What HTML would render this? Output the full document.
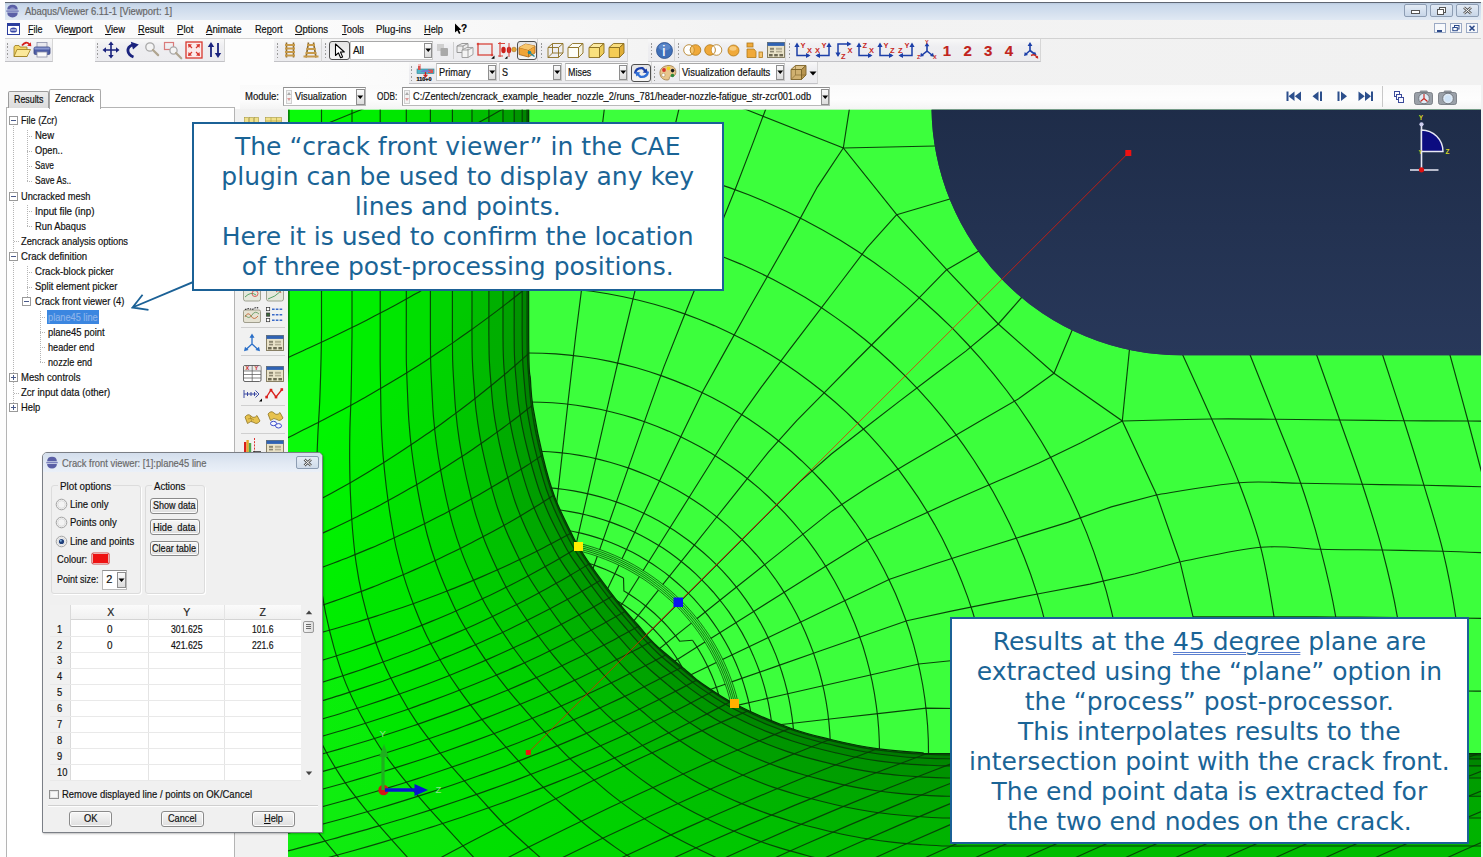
<!DOCTYPE html>
<html lang="en"><head><meta charset="utf-8"><title>Abaqus/Viewer 6.11-1 [Viewport: 1]</title>
<style>
html,body{margin:0;padding:0;background:#fff;}
body{width:1483px;height:857px;overflow:hidden;position:relative;font-family:"Liberation Sans",sans-serif;font-size:11px;color:#000;}
#root{position:absolute;left:0;top:0;width:1483px;height:857px;overflow:hidden;background:#fff;}
.t{position:absolute;white-space:nowrap;display:block;transform-origin:0 50%;-webkit-text-stroke:0.2px currentColor;}
.t u{text-decoration:underline;text-underline-offset:1px;}
.abs{position:absolute;}
svg{position:absolute;overflow:visible;}
.callout{position:absolute;background:#fff;border:2px solid #1b6196;box-sizing:border-box;font-family:"DejaVu Sans","Liberation Sans",sans-serif;font-size:25px;line-height:30px;color:#1a6496;text-align:center;white-space:nowrap;}
.callout div{position:absolute;left:0;right:0;height:30px;}

</style></head>
<body>
<div id="root">
<!-- window frame -->
<div class="abs" style="left:0px;top:2px;width:1483px;height:855px;background:linear-gradient(90deg,#fdfdfd 0,#fdfdfd 300px,#f2f2f2 720px,#f1f1f1 100%);"></div>
<div class="abs" style="left:5px;top:2px;width:1476px;height:18px;background:linear-gradient(#b9c9de 0,#c9d8ea 2px,#d3dfee 9px,#e2eaf4 18px);border-top:1px solid #5f6672;box-sizing:border-box;"></div>
<svg style="left:5.5px;top:3.5px" width="13" height="14" viewBox="0 0 13 14"><path d="M1.2 5.6 Q1.5 0.8 6.5 0.8 Q11.5 0.8 11.8 5.6 Z" fill="#5a5fa6"/><path d="M1.2 8.6 Q1.5 13.4 6.5 13.4 Q11.5 13.4 11.8 8.6 Z" fill="#5a5fa6"/><rect x="0.3" y="6.3" width="12.4" height="1.6" fill="#7c82bd"/><path d="M3.5 4.8 Q6.5 2.2 9.5 4.8 Z" fill="#9aa0d0"/></svg>
<span class="t" style="left:25.0px;top:3.5px;height:15px;line-height:15px;font-size:11px;color:#666;transform:scaleX(0.8586);">Abaqus/Viewer 6.11-1 [Viewport: 1]</span>
<div class="abs" style="left:1404px;top:4px;width:23px;height:13px;border:1px solid #8d9db3;border-radius:2px;box-sizing:border-box;background:linear-gradient(#e3ebf5,#c8d6e8);"></div><svg style="left:1404px;top:4px" width="23" height="13"><rect x="7.5" y="6.5" width="8" height="3" fill="#fff" stroke="#555" stroke-width="1"/></svg>
<div class="abs" style="left:1430px;top:4px;width:23px;height:13px;border:1px solid #8d9db3;border-radius:2px;box-sizing:border-box;background:linear-gradient(#e3ebf5,#c8d6e8);"></div><svg style="left:1430px;top:4px" width="23" height="13"><rect x="9.5" y="3.5" width="6" height="5" fill="#fff" stroke="#555"/><rect x="7.5" y="5.5" width="6" height="5" fill="#fff" stroke="#555"/></svg>
<div class="abs" style="left:1456px;top:4px;width:23px;height:13px;border:1px solid #8d9db3;border-radius:2px;box-sizing:border-box;background:linear-gradient(#e3ebf5,#c8d6e8);"></div><svg style="left:1456px;top:4px" width="23" height="13"><path d="M8 3.5 L15 9.5 M15 3.5 L8 9.5" stroke="#555" stroke-width="2.6"/><path d="M8 3.5 L15 9.5 M15 3.5 L8 9.5" stroke="#fff" stroke-width="1"/></svg>
<div class="abs" style="left:5px;top:20px;width:1476px;height:18px;background:linear-gradient(90deg,#fbfbfb 0,#fbfbfb 300px,#f3f3f3 720px,#f2f2f2 100%);"></div>
<svg style="left:7px;top:23px" width="13" height="12" viewBox="0 0 13 12"><rect x="0.5" y="0.5" width="12" height="11" fill="#fff" stroke="#2c3e9e"/><rect x="0.5" y="0.5" width="12" height="2.5" fill="#2c3e9e"/><ellipse cx="6.5" cy="7" rx="3.6" ry="2.6" fill="#3a49a8"/><rect x="3.5" y="6.5" width="6" height="1" fill="#fff"/></svg>
<span class="t" style="left:28.0px;top:22.0px;height:15px;line-height:15px;font-size:11px;color:#111;transform:scaleX(0.8181);"><u>F</u>ile</span>
<span class="t" style="left:55.0px;top:22.0px;height:15px;line-height:15px;font-size:11px;color:#111;transform:scaleX(0.8803);">Vie<u>w</u>port</span>
<span class="t" style="left:105.0px;top:22.0px;height:15px;line-height:15px;font-size:11px;color:#111;transform:scaleX(0.8459);"><u>V</u>iew</span>
<span class="t" style="left:138.0px;top:22.0px;height:15px;line-height:15px;font-size:11px;color:#111;transform:scaleX(0.8339);"><u>R</u>esult</span>
<span class="t" style="left:176.5px;top:22.0px;height:15px;line-height:15px;font-size:11px;color:#111;transform:scaleX(0.8705);"><u>P</u>lot</span>
<span class="t" style="left:206.0px;top:22.0px;height:15px;line-height:15px;font-size:11px;color:#111;transform:scaleX(0.8798);"><u>A</u>nimate</span>
<span class="t" style="left:254.5px;top:22.0px;height:15px;line-height:15px;font-size:11px;color:#111;transform:scaleX(0.8330);">Re<u>p</u>ort</span>
<span class="t" style="left:295.0px;top:22.0px;height:15px;line-height:15px;font-size:11px;color:#111;transform:scaleX(0.8705);"><u>O</u>ptions</span>
<span class="t" style="left:342.0px;top:22.0px;height:15px;line-height:15px;font-size:11px;color:#111;transform:scaleX(0.8568);"><u>T</u>ools</span>
<span class="t" style="left:376.0px;top:22.0px;height:15px;line-height:15px;font-size:11px;color:#111;transform:scaleX(0.8807);">Plug-ins</span>
<span class="t" style="left:424.0px;top:22.0px;height:15px;line-height:15px;font-size:11px;color:#111;transform:scaleX(0.8399);"><u>H</u>elp</span>
<svg style="left:454px;top:23px" width="14" height="13" viewBox="0 0 14 13"><path d="M1 0.5 L1 9.5 L3.3 7.5 L5 11 L6.5 10.3 L4.9 7 L7.6 7 Z" fill="#000"/></svg>
<span class="t" style="left:461.0px;top:22.0px;height:14px;line-height:14px;font-size:10px;color:#000;font-weight:bold;">?</span>
<div class="abs" style="left:1434px;top:23px;width:12px;height:10px;border:1px solid #9aa9c4;box-sizing:border-box;background:#f7f9fc;"></div><div class="abs" style="left:1437px;top:30px;width:5px;height:1.5px;background:#2c4a8a;"></div>
<div class="abs" style="left:1450px;top:23px;width:12px;height:10px;border:1px solid #9aa9c4;box-sizing:border-box;background:#f7f9fc;"></div><svg style="left:1450px;top:23px" width="12" height="10"><rect x="4.5" y="2.5" width="4.5" height="3.5" fill="none" stroke="#2c4a8a"/><rect x="2.8" y="4.5" width="4.5" height="3.2" fill="#f7f9fc" stroke="#2c4a8a"/></svg>
<div class="abs" style="left:1466px;top:23px;width:12px;height:10px;border:1px solid #9aa9c4;box-sizing:border-box;background:#f7f9fc;"></div><svg style="left:1466px;top:23px" width="12" height="10"><path d="M3.5 2.8 L8.5 7.6 M8.5 2.8 L3.5 7.6" stroke="#2c4a8a" stroke-width="1.5"/></svg>
<div class="abs" style="left:5px;top:38px;width:1476px;height:1px;background:#d2d2d2;"></div>
<div class="abs" style="left:5px;top:39px;width:48px;height:22.5px;background:linear-gradient(#f8f8f8,#eeeef1 35%,#ececef);border-right:1px solid #d6d6d6;border-bottom:1.5px solid #c2c2c6;box-sizing:border-box;"></div>
<div class="abs" style="left:95px;top:39px;width:130px;height:22.5px;background:linear-gradient(#f8f8f8,#eeeef1 35%,#ececef);border-right:1px solid #d6d6d6;border-bottom:1.5px solid #c2c2c6;box-sizing:border-box;"></div>
<div class="abs" style="left:274px;top:39px;width:47.5px;height:22.5px;background:linear-gradient(#f8f8f8,#eeeef1 35%,#ececef);border-right:1px solid #d6d6d6;border-bottom:1.5px solid #c2c2c6;box-sizing:border-box;"></div>
<div class="abs" style="left:321.5px;top:39px;width:216.5px;height:22.5px;background:linear-gradient(#f8f8f8,#eeeef1 35%,#ececef);border-right:1px solid #d6d6d6;border-bottom:1.5px solid #c2c2c6;box-sizing:border-box;"></div>
<div class="abs" style="left:538px;top:39px;width:89.5px;height:22.5px;background:linear-gradient(#f8f8f8,#eeeef1 35%,#ececef);border-right:1px solid #d6d6d6;border-bottom:1.5px solid #c2c2c6;box-sizing:border-box;"></div>
<div class="abs" style="left:648px;top:39px;width:27px;height:22.5px;background:linear-gradient(#f8f8f8,#eeeef1 35%,#ececef);border-right:1px solid #d6d6d6;border-bottom:1.5px solid #c2c2c6;box-sizing:border-box;"></div>
<div class="abs" style="left:675px;top:39px;width:111px;height:22.5px;background:linear-gradient(#f8f8f8,#eeeef1 35%,#ececef);border-right:1px solid #d6d6d6;border-bottom:1.5px solid #c2c2c6;box-sizing:border-box;"></div>
<div class="abs" style="left:786px;top:39px;width:255px;height:22.5px;background:linear-gradient(#f8f8f8,#eeeef1 35%,#ececef);border-right:1px solid #d6d6d6;border-bottom:1.5px solid #c2c2c6;box-sizing:border-box;"></div>
<div class="abs" style="left:7px;top:43.0px;width:1px;height:1.5px;background:#9a9a9a;"></div><div class="abs" style="left:7px;top:46.4px;width:1px;height:1.5px;background:#9a9a9a;"></div><div class="abs" style="left:7px;top:49.8px;width:1px;height:1.5px;background:#9a9a9a;"></div><div class="abs" style="left:7px;top:53.2px;width:1px;height:1.5px;background:#9a9a9a;"></div><div class="abs" style="left:7px;top:56.6px;width:1px;height:1.5px;background:#9a9a9a;"></div>
<div class="abs" style="left:97px;top:43.0px;width:1px;height:1.5px;background:#9a9a9a;"></div><div class="abs" style="left:97px;top:46.4px;width:1px;height:1.5px;background:#9a9a9a;"></div><div class="abs" style="left:97px;top:49.8px;width:1px;height:1.5px;background:#9a9a9a;"></div><div class="abs" style="left:97px;top:53.2px;width:1px;height:1.5px;background:#9a9a9a;"></div><div class="abs" style="left:97px;top:56.6px;width:1px;height:1.5px;background:#9a9a9a;"></div>
<div class="abs" style="left:276.5px;top:43.0px;width:1px;height:1.5px;background:#9a9a9a;"></div><div class="abs" style="left:276.5px;top:46.4px;width:1px;height:1.5px;background:#9a9a9a;"></div><div class="abs" style="left:276.5px;top:49.8px;width:1px;height:1.5px;background:#9a9a9a;"></div><div class="abs" style="left:276.5px;top:53.2px;width:1px;height:1.5px;background:#9a9a9a;"></div><div class="abs" style="left:276.5px;top:56.6px;width:1px;height:1.5px;background:#9a9a9a;"></div>
<div class="abs" style="left:325px;top:43.0px;width:1px;height:1.5px;background:#9a9a9a;"></div><div class="abs" style="left:325px;top:46.4px;width:1px;height:1.5px;background:#9a9a9a;"></div><div class="abs" style="left:325px;top:49.8px;width:1px;height:1.5px;background:#9a9a9a;"></div><div class="abs" style="left:325px;top:53.2px;width:1px;height:1.5px;background:#9a9a9a;"></div><div class="abs" style="left:325px;top:56.6px;width:1px;height:1.5px;background:#9a9a9a;"></div>
<div class="abs" style="left:540.5px;top:43.0px;width:1px;height:1.5px;background:#9a9a9a;"></div><div class="abs" style="left:540.5px;top:46.4px;width:1px;height:1.5px;background:#9a9a9a;"></div><div class="abs" style="left:540.5px;top:49.8px;width:1px;height:1.5px;background:#9a9a9a;"></div><div class="abs" style="left:540.5px;top:53.2px;width:1px;height:1.5px;background:#9a9a9a;"></div><div class="abs" style="left:540.5px;top:56.6px;width:1px;height:1.5px;background:#9a9a9a;"></div>
<div class="abs" style="left:651px;top:43.0px;width:1px;height:1.5px;background:#9a9a9a;"></div><div class="abs" style="left:651px;top:46.4px;width:1px;height:1.5px;background:#9a9a9a;"></div><div class="abs" style="left:651px;top:49.8px;width:1px;height:1.5px;background:#9a9a9a;"></div><div class="abs" style="left:651px;top:53.2px;width:1px;height:1.5px;background:#9a9a9a;"></div><div class="abs" style="left:651px;top:56.6px;width:1px;height:1.5px;background:#9a9a9a;"></div>
<div class="abs" style="left:678px;top:43.0px;width:1px;height:1.5px;background:#9a9a9a;"></div><div class="abs" style="left:678px;top:46.4px;width:1px;height:1.5px;background:#9a9a9a;"></div><div class="abs" style="left:678px;top:49.8px;width:1px;height:1.5px;background:#9a9a9a;"></div><div class="abs" style="left:678px;top:53.2px;width:1px;height:1.5px;background:#9a9a9a;"></div><div class="abs" style="left:678px;top:56.6px;width:1px;height:1.5px;background:#9a9a9a;"></div>
<div class="abs" style="left:789px;top:43.0px;width:1px;height:1.5px;background:#9a9a9a;"></div><div class="abs" style="left:789px;top:46.4px;width:1px;height:1.5px;background:#9a9a9a;"></div><div class="abs" style="left:789px;top:49.8px;width:1px;height:1.5px;background:#9a9a9a;"></div><div class="abs" style="left:789px;top:53.2px;width:1px;height:1.5px;background:#9a9a9a;"></div><div class="abs" style="left:789px;top:56.6px;width:1px;height:1.5px;background:#9a9a9a;"></div>
<div class="abs" style="left:409px;top:62px;width:243px;height:22px;background:linear-gradient(#f8f8f8,#eeeef1 35%,#ececef);border-right:1px solid #d6d6d6;border-bottom:1.5px solid #c2c2c6;box-sizing:border-box;"></div>
<div class="abs" style="left:652px;top:62px;width:166px;height:22px;background:linear-gradient(#f8f8f8,#eeeef1 35%,#ececef);border-right:1px solid #d6d6d6;border-bottom:1.5px solid #c2c2c6;box-sizing:border-box;"></div>
<div class="abs" style="left:411px;top:66.0px;width:1px;height:1.5px;background:#9a9a9a;"></div><div class="abs" style="left:411px;top:69.4px;width:1px;height:1.5px;background:#9a9a9a;"></div><div class="abs" style="left:411px;top:72.8px;width:1px;height:1.5px;background:#9a9a9a;"></div><div class="abs" style="left:411px;top:76.2px;width:1px;height:1.5px;background:#9a9a9a;"></div><div class="abs" style="left:411px;top:79.6px;width:1px;height:1.5px;background:#9a9a9a;"></div>
<div class="abs" style="left:654px;top:66.0px;width:1px;height:1.5px;background:#9a9a9a;"></div><div class="abs" style="left:654px;top:69.4px;width:1px;height:1.5px;background:#9a9a9a;"></div><div class="abs" style="left:654px;top:72.8px;width:1px;height:1.5px;background:#9a9a9a;"></div><div class="abs" style="left:654px;top:76.2px;width:1px;height:1.5px;background:#9a9a9a;"></div><div class="abs" style="left:654px;top:79.6px;width:1px;height:1.5px;background:#9a9a9a;"></div>
<svg style="left:13px;top:41px" width="19" height="17" viewBox="0 0 19 17"><path d="M1 6 L1 15.5 L14 15.5 L14 6 L7 6 L6 4.5 L2 4.5 Z" fill="#f3d66b" stroke="#9a7b1c" stroke-width="0.8"/><path d="M1 15.5 L4 8.5 L17.5 8.5 L14 15.5 Z" fill="#fbe89a" stroke="#9a7b1c" stroke-width="0.8"/><path d="M9 4.5 Q13 -0.5 16.5 3.5" fill="none" stroke="#d6201c" stroke-width="1.8"/><path d="M14.2 4.8 L18.3 5.2 L17.8 1.2 Z" fill="#d6201c"/></svg>
<svg style="left:33px;top:41px" width="18" height="17" viewBox="0 0 18 17"><rect x="4" y="1.5" width="10" height="5" fill="#e8e8ee" stroke="#8c90a8" stroke-width="0.8"/><rect x="1" y="6" width="16" height="7.5" rx="1.5" fill="#4d5da6" stroke="#39457f" stroke-width="0.8"/><rect x="1.5" y="6.5" width="15" height="2" fill="#8a97cf"/><rect x="4" y="11" width="10" height="5" fill="#fafafa" stroke="#8c90a8" stroke-width="0.8"/></svg>
<svg style="left:102px;top:41px" width="18" height="18" viewBox="0 0 18 18"><path d="M9 2 L9 16 M2 9 L16 9" stroke="#1a237e" stroke-width="1.6"/><path d="M9 0.5 L6.3 4 L11.7 4 Z M9 17.5 L6.3 14 L11.7 14 Z M0.5 9 L4 6.3 L4 11.7 Z M17.5 9 L14 6.3 L14 11.7 Z" fill="#1a237e"/></svg>
<svg style="left:124px;top:41px" width="16" height="18" viewBox="0 0 16 18"><path d="M9.5 16 C2.5 13.5 2 6.5 8.5 3.8" fill="none" stroke="#1a237e" stroke-width="2.8"/><path d="M6.8 0.8 L14.8 3.6 L9 8.6 Z" fill="#1a237e"/></svg>
<svg style="left:144px;top:41px" width="17" height="18" viewBox="0 0 17 18"><circle cx="6" cy="6" r="4.2" fill="#f4f4f4" stroke="#a9a9a9" stroke-width="1.3"/><path d="M8.94 8.94 L14.14 14.14" stroke="#b0a590" stroke-width="2.2" stroke-linecap="round"/></svg>
<svg style="left:163px;top:41px" width="19" height="18" viewBox="0 0 19 18"><rect x="1.5" y="1.5" width="9" height="7" fill="none" stroke="#d97b7b" stroke-width="1.2"/><circle cx="10.5" cy="9.5" r="3.6" fill="#f4f4f4" stroke="#a9a9a9" stroke-width="1.3"/><path d="M13.02 12.02 L18.22 17.22" stroke="#b0a590" stroke-width="2.2" stroke-linecap="round"/></svg>
<svg style="left:185px;top:41px" width="18" height="18" viewBox="0 0 18 18"><rect x="1" y="1" width="16" height="16" fill="#fbeaea" stroke="#d8382f" stroke-width="1.3"/><path d="M3 3 L7 3.6 L3.6 7 Z M15 3 L11 3.6 L14.4 7 Z M3 15 L7 14.4 L3.6 11 Z M15 15 L11 14.4 L14.4 11 Z" fill="#d8382f"/><path d="M4 4 L7 7 M14 4 L11 7 M4 14 L7 11 M14 14 L11 11" stroke="#d8382f" stroke-width="1.2"/></svg>
<svg style="left:207px;top:41px" width="15" height="18" viewBox="0 0 15 18"><path d="M4 16 L4 4 M11 2 L11 14" stroke="#1a237e" stroke-width="1.8"/><path d="M4 1 L0.8 6 L7.2 6 Z M11 17 L7.8 12 L14.2 12 Z" fill="#1a237e"/></svg>
<svg style="left:284px;top:42px" width="12" height="16" viewBox="0 0 12 16"><path d="M2.5 0.5 L2.5 15.5 M9.5 0.5 L9.5 15.5" stroke="#8b6a2f" stroke-width="1.6"/><path d="M1 3 L11 3 M1 6.5 L11 6.5 M1 10 L11 10 M1 13.5 L11 13.5" stroke="#c79a4a" stroke-width="1.8"/></svg>
<svg style="left:303px;top:42px" width="16" height="16" viewBox="0 0 16 16"><path d="M5.5 0.5 L3 15.5 M10.5 0.5 L13 15.5" stroke="#8b6a2f" stroke-width="1.6"/><path d="M4 3 L12 3 M3.4 7 L12.6 7 M2.5 11 L13.5 11 M0.5 14.5 L15.5 14.5" stroke="#c79a4a" stroke-width="1.8"/></svg>
<div class="abs" style="left:329px;top:41px;width:21px;height:18.5px;border:1.4px solid #4f4f4f;border-radius:3px;box-sizing:border-box;background:linear-gradient(#e4e4e4,#f6f6f6);"></div>
<svg style="left:334px;top:43px" width="12" height="16" viewBox="0 0 12 16"><path d="M1.5 1 L1.5 12.5 L4.4 9.8 L6.6 14.8 L8.6 13.9 L6.5 9 L10.3 9 Z" fill="#fff" stroke="#000" stroke-width="1.1" stroke-linejoin="round"/></svg>
<div class="abs" style="left:350px;top:41px;width:83px;height:18.5px;background:#fff;border:1px solid #c9c9c9;border-top-color:#a8a8a8;box-sizing:border-box;"></div><div class="abs" style="left:423.5px;top:42.5px;width:8.5px;height:15.5px;background:linear-gradient(#fafafa,#dcdcdc);border:1px solid #8e8e8e;box-sizing:border-box;"></div><svg style="left:423.5px;top:48.25px" width="8.5" height="5"><path d="M1.3 0.5 L7.2 0.5 L4.25 4 Z" fill="#000"/></svg><span class="t" style="left:353.0px;top:43.0px;height:15px;line-height:15px;font-size:11px;color:#111;transform:scaleX(0.8998);">All</span>
<svg style="left:436px;top:43px" width="13" height="14" viewBox="0 0 13 14"><rect x="1" y="1" width="7" height="7" fill="#cfcfcf"/><rect x="4.5" y="5" width="7.5" height="8" rx="1" fill="#a9a9a9"/></svg>
<div class="abs" style="left:452.5px;top:42px;width:1px;height:17px;background:#cfcfcf;"></div>
<svg style="left:456px;top:42px" width="18" height="17" viewBox="0 0 18 17"><path d="M1 4 L6 1.5 L12 1.5 L12 8 L7 10.5 L1 10.5 Z M1 4 L7 4 L12 1.5 M7 4 L7 10.5" fill="#ededed" stroke="#8f8f8f" stroke-width="0.9"/><path d="M6 8 L11 5.5 L17 5.5 L17 12.5 L12 15.5 L6 15.5 Z M6 8 L12 8 L17 5.5 M12 8 L12 15.5" fill="#f4f4f4" stroke="#9a9a9a" stroke-width="0.9"/></svg>
<svg style="left:476px;top:41px" width="19" height="18" viewBox="0 0 19 18"><rect x="2" y="3" width="14" height="11" fill="none" stroke="#d8453d" stroke-width="1.3"/><circle cx="2" cy="3" r="1.3" fill="#d8453d"/><circle cx="16" cy="14" r="1.3" fill="#d8453d"/><path d="M18.5 14.5 L18.5 17.8 L15.2 17.8 Z" fill="#000"/></svg>
<svg style="left:497px;top:41px" width="20" height="18" viewBox="0 0 20 18"><path d="M1 2.5 L8 2.5 M3 1 L3 16 M1 15 L6 15" stroke="#d8453d" stroke-width="1.2" fill="none"/><ellipse cx="6.5" cy="9" rx="2.2" ry="3.2" fill="#cc1f1a"/><ellipse cx="12" cy="9" rx="2.2" ry="3.2" fill="#cc1f1a"/><path d="M12 2 L12 16" stroke="#d8453d" stroke-width="1"/><circle cx="17" cy="8.5" r="2.3" fill="#e2a53a" stroke="#a8741b" stroke-width="0.6"/><path d="M10.5 15 L10.5 17.8 L7.7 17.8 Z" fill="#000"/></svg>
<div class="abs" style="left:516.5px;top:40.5px;width:20.5px;height:19.0px;border:1.4px solid #4f4f4f;border-radius:3px;box-sizing:border-box;background:linear-gradient(#e4e4e4,#f6f6f6);"></div>
<svg style="left:518px;top:43px" width="18" height="15" viewBox="0 0 18 15"><path d="M1 4.5 L7.5 1 L17 3 L17 10 L10.5 14 L1 11.5 Z" fill="#f0a437" stroke="#a8661a" stroke-width="0.8"/><path d="M1 4.5 L10.5 7 L17 3 M10.5 7 L10.5 14" fill="none" stroke="#a8661a" stroke-width="0.8"/><path d="M1 4.5 L7.5 1 L17 3 L10.5 7 Z" fill="#f8c66d"/><circle cx="11.5" cy="9.5" r="1.8" fill="#1f8a9a"/><path d="M12.5 10.5 L16.5 13.5" stroke="#1f8a9a" stroke-width="1.3"/></svg>
<svg style="left:546.5px;top:41.5px" width="17" height="17" viewBox="0 0 17 17"><path d="M1 5.5 L5.5 1.5 L16 1.5 L16 11 L11.5 15.5 L1 15.5 Z M1 5.5 L11.5 5.5 L16 1.5 M11.5 5.5 L11.5 15.5 M5.5 1.5 L5.5 11 L1 15.5 M5.5 11 L16 11" fill="none" stroke="#8a6d1f" stroke-width="0.9"/></svg>
<svg style="left:567px;top:41.5px" width="17" height="17" viewBox="0 0 17 17"><path d="M1 5.5 L5.5 1.5 L16 1.5 L11.5 5.5 Z" fill="#fbfbf3" stroke="#8a6d1f" stroke-width="0.9"/><path d="M1 5.5 L11.5 5.5 L11.5 15.5 L1 15.5 Z" fill="#fdfdf8" stroke="#8a6d1f" stroke-width="0.9"/><path d="M11.5 5.5 L16 1.5 L16 11 L11.5 15.5 Z" fill="#f3f1e2" stroke="#8a6d1f" stroke-width="0.9"/></svg>
<svg style="left:587.5px;top:41.5px" width="17" height="17" viewBox="0 0 17 17"><path d="M1 5.5 L5.5 1.5 L16 1.5 L11.5 5.5 Z" fill="#fbe9a0" stroke="#8a6d1f" stroke-width="0.9"/><path d="M1 5.5 L11.5 5.5 L11.5 15.5 L1 15.5 Z" fill="#f9e07d" stroke="#8a6d1f" stroke-width="0.9"/><path d="M11.5 5.5 L16 1.5 L16 11 L11.5 15.5 Z" fill="#eccb5a" stroke="#8a6d1f" stroke-width="0.9"/></svg>
<svg style="left:607.5px;top:41.5px" width="17" height="17" viewBox="0 0 17 17"><path d="M1 5.5 L5.5 1.5 L16 1.5 L11.5 5.5 Z" fill="#f8dc7c" stroke="#8a6d1f" stroke-width="0.9"/><path d="M1 5.5 L11.5 5.5 L11.5 15.5 L1 15.5 Z" fill="#f4cc55" stroke="#8a6d1f" stroke-width="0.9"/><path d="M11.5 5.5 L16 1.5 L16 11 L11.5 15.5 Z" fill="#e0ad35" stroke="#8a6d1f" stroke-width="0.9"/></svg>
<svg style="left:656px;top:41.5px" width="17" height="17" viewBox="0 0 17 17"><circle cx="8.5" cy="8.5" r="8" fill="#3f6fb8" stroke="#2b4f8d" stroke-width="0.8"/><ellipse cx="8.5" cy="5" rx="6" ry="3.5" fill="#6f97d3" opacity="0.6"/></svg>
<span class="t" style="left:662.2px;top:41.5px;height:18px;line-height:18px;font-size:14px;color:#fff;font-family:"Liberation Serif",serif;font-style:italic;font-weight:bold;">i</span>
<svg style="left:683px;top:43px" width="19" height="14" viewBox="0 0 19 14"><circle cx="6" cy="7" r="5.3" fill="#fff" stroke="#b07818" stroke-width="0.8"/><circle cx="12.5" cy="7" r="5.3" fill="#f0a93a" stroke="#b07818" stroke-width="0.8"/><path d="M9.25 2.8 A5.3 5.3 0 0 1 9.25 11.2 A5.3 5.3 0 0 1 9.25 2.8 Z" fill="#f6c56f" stroke="#b07818" stroke-width="0.6"/></svg>
<svg style="left:704px;top:43px" width="19" height="14" viewBox="0 0 19 14"><circle cx="12.5" cy="7" r="5.3" fill="#fff" stroke="#b07818" stroke-width="0.8"/><circle cx="6" cy="7" r="5.3" fill="#f0a93a" stroke="#b07818" stroke-width="0.8"/><path d="M9.25 2.8 A5.3 5.3 0 0 1 9.25 11.2 A5.3 5.3 0 0 1 9.25 2.8 Z" fill="#fff" stroke="#b07818" stroke-width="0.6"/></svg>
<svg style="left:727px;top:44px" width="13" height="13" viewBox="0 0 13 13"><circle cx="6.5" cy="6.5" r="5.5" fill="#f0a93a" stroke="#b07818" stroke-width="0.8"/><ellipse cx="6" cy="4.5" rx="3.5" ry="2.2" fill="#f9d38e" opacity="0.8"/></svg>
<svg style="left:745.5px;top:41.5px" width="18" height="17" viewBox="0 0 18 17"><rect x="1" y="1" width="6" height="4" fill="#f0a93a" stroke="#b07818" stroke-width="0.8"/><path d="M1 7 L8 7 L10 9.5 L10 15.5 L1 15.5 Z" fill="#f0a93a" stroke="#b07818" stroke-width="0.8"/><rect x="13" y="10" width="3.5" height="5.5" fill="#f6c56f" stroke="#b07818" stroke-width="0.8"/></svg>
<svg style="left:766.5px;top:42px" width="18" height="16" viewBox="0 0 18 16"><rect x="0.5" y="0.5" width="17" height="15" fill="#e9e2c8" stroke="#7c7458" stroke-width="0.9"/><rect x="0.5" y="0.5" width="17" height="3.4" fill="#2f62b3"/><rect x="3" y="5.8" width="4" height="2" fill="#8a8570"/><rect x="9" y="5.8" width="6" height="2" fill="#b5ae94"/><rect x="3" y="8.8" width="4" height="1.6" fill="#8a8570"/><rect x="9" y="8.8" width="6" height="1.6" fill="#b5ae94"/><rect x="2" y="12" width="3.6" height="2.4" fill="#6f6a55"/><rect x="7.2" y="12" width="3.6" height="2.4" fill="#6f6a55"/><rect x="12.4" y="12" width="3.6" height="2.4" fill="#6f6a55"/></svg>
<svg style="left:793.5px;top:41px" width="19" height="18" viewBox="0 0 19 18"><path d="M3 3 L3 14.5 L15 14.5" fill="none" stroke="#1c3fa8" stroke-width="1.5"/><path d="M3 1.5 L0.3999999999999999 6 L5.6 6 Z" fill="#1c3fa8"/><path d="M16.5 14.5 L12 11.9 L12 17.1 Z" fill="#1c3fa8"/><text x="6.5" y="7" font-family="Liberation Sans,sans-serif" font-weight="bold" font-size="7.5" fill="#c7271f">Y</text><text x="13" y="12" font-family="Liberation Sans,sans-serif" font-weight="bold" font-size="7.5" fill="#c7271f">X</text></svg>
<svg style="left:814px;top:41px" width="19" height="18" viewBox="0 0 19 18"><path d="M3 14.5 L15 14.5 L15 3" fill="none" stroke="#1c3fa8" stroke-width="1.5"/><path d="M15 1.5 L12.4 6 L17.6 6 Z" fill="#1c3fa8"/><path d="M1.5 14.5 L6 11.9 L6 17.1 Z" fill="#1c3fa8"/><text x="7.5" y="7" font-family="Liberation Sans,sans-serif" font-weight="bold" font-size="7.5" fill="#c7271f">Y</text><text x="1" y="12" font-family="Liberation Sans,sans-serif" font-weight="bold" font-size="7.5" fill="#c7271f">X</text></svg>
<svg style="left:835px;top:41px" width="19" height="18" viewBox="0 0 19 18"><path d="M3 14.5 L3 3 L15 3" fill="none" stroke="#1c3fa8" stroke-width="1.5"/><path d="M16.5 3 L12 0.3999999999999999 L12 5.6 Z" fill="#1c3fa8"/><path d="M3 16.0 L0.3999999999999999 11.5 L5.6 11.5 Z" fill="#1c3fa8"/><text x="12.5" y="11.5" font-family="Liberation Sans,sans-serif" font-weight="bold" font-size="7.5" fill="#c7271f">X</text><text x="6" y="18" font-family="Liberation Sans,sans-serif" font-weight="bold" font-size="7.5" fill="#c7271f">Z</text></svg>
<svg style="left:856px;top:41px" width="19" height="18" viewBox="0 0 19 18"><path d="M3 3 L3 14.5 L15 14.5" fill="none" stroke="#1c3fa8" stroke-width="1.5"/><path d="M3 1.5 L0.3999999999999999 6 L5.6 6 Z" fill="#1c3fa8"/><path d="M16.5 14.5 L12 11.9 L12 17.1 Z" fill="#1c3fa8"/><text x="6.5" y="7" font-family="Liberation Sans,sans-serif" font-weight="bold" font-size="7.5" fill="#c7271f">Z</text><text x="13" y="12" font-family="Liberation Sans,sans-serif" font-weight="bold" font-size="7.5" fill="#c7271f">X</text></svg>
<svg style="left:877px;top:41px" width="19" height="18" viewBox="0 0 19 18"><path d="M3 3 L3 14.5 L15 14.5" fill="none" stroke="#1c3fa8" stroke-width="1.5"/><path d="M3 1.5 L0.3999999999999999 6 L5.6 6 Z" fill="#1c3fa8"/><path d="M16.5 14.5 L12 11.9 L12 17.1 Z" fill="#1c3fa8"/><text x="6.5" y="7" font-family="Liberation Sans,sans-serif" font-weight="bold" font-size="7.5" fill="#c7271f">Y</text><text x="13" y="12" font-family="Liberation Sans,sans-serif" font-weight="bold" font-size="7.5" fill="#c7271f">Z</text></svg>
<svg style="left:897px;top:41px" width="19" height="18" viewBox="0 0 19 18"><path d="M3 14.5 L15 14.5 L15 3" fill="none" stroke="#1c3fa8" stroke-width="1.5"/><path d="M15 1.5 L12.4 6 L17.6 6 Z" fill="#1c3fa8"/><path d="M1.5 14.5 L6 11.9 L6 17.1 Z" fill="#1c3fa8"/><text x="7.5" y="7" font-family="Liberation Sans,sans-serif" font-weight="bold" font-size="7.5" fill="#c7271f">Y</text><text x="1" y="12" font-family="Liberation Sans,sans-serif" font-weight="bold" font-size="7.5" fill="#c7271f">Z</text></svg>
<svg style="left:917px;top:40px" width="20" height="19" viewBox="0 0 20 19"><path d="M10 4.5 L10 11 L4.5 15.5 M10 11 L15.5 15.5" fill="none" stroke="#1c3fa8" stroke-width="1.6"/><path d="M10 2.5 L7.6 6.3 L12.4 6.3 Z M3 16.8 L4 12.8 L7 16 Z M17 16.8 L16 12.8 L13 16 Z" fill="#1c3fa8"/><text x="8" y="3.5" font-family="Liberation Sans,sans-serif" font-weight="bold" font-size="5.5" fill="#c7271f">Y</text><text x="0" y="18.5" font-family="Liberation Sans,sans-serif" font-weight="bold" font-size="5.5" fill="#c7271f">Z</text><text x="16" y="18.5" font-family="Liberation Sans,sans-serif" font-weight="bold" font-size="5.5" fill="#c7271f">X</text></svg>
<span class="t" style="left:942.8px;top:41.0px;height:19px;line-height:19px;font-size:15px;color:#c1231c;font-weight:bold;">1</span>
<span class="t" style="left:963.6px;top:41.0px;height:19px;line-height:19px;font-size:15px;color:#c1231c;font-weight:bold;">2</span>
<span class="t" style="left:984.1px;top:41.0px;height:19px;line-height:19px;font-size:15px;color:#c1231c;font-weight:bold;">3</span>
<span class="t" style="left:1004.8px;top:41.0px;height:19px;line-height:19px;font-size:15px;color:#c1231c;font-weight:bold;">4</span>
<svg style="left:1023px;top:41px" width="16" height="18" viewBox="0 0 16 18"><path d="M7 4 L7 9.5 L2.5 13.5 M7 9.5 L11.5 13" fill="none" stroke="#1c3fa8" stroke-width="1.6"/><path d="M7 1 L4.6 5 L9.4 5 Z M1 15 L1.8 11 L5 14 Z M13.5 14 L9.5 13.8 L12 10.8 Z" fill="#1c3fa8"/><path d="M8 14.5 Q12 12.5 14 16.5" fill="none" stroke="#c7271f" stroke-width="1.4"/><path d="M15.2 17.8 L12.3 16.5 L15 14.8 Z" fill="#c7271f"/></svg>
<svg style="left:416px;top:63px" width="19" height="19" viewBox="0 0 19 19"><rect x="1" y="6" width="17" height="4.5" fill="#4fb6c9" stroke="#2c7f8f" stroke-width="0.6"/><rect x="2" y="1" width="2.6" height="6" fill="#d9534f"/><rect x="2" y="1" width="2.6" height="2" fill="#f2b8b5"/><rect x="12" y="6.5" width="5" height="3.5" fill="#d9534f"/><path d="M4 9 Q9.5 4.5 15 9 Z" fill="#6a7fd0"/><path d="M9.5 9 L9.5 13" stroke="#c7271f" stroke-width="1.4"/><path d="M9.5 15 L7 11.8 L12 11.8 Z" fill="#c7271f"/></svg>
<span class="t" style="left:416.5px;top:74.5px;height:9.5px;line-height:9.5px;font-size:5.5px;color:#000;transform:scaleX(1.0000);font-weight:bold;">110+0</span>
<div class="abs" style="left:435.5px;top:63px;width:61.5px;height:18px;background:#fff;border:1px solid #c9c9c9;border-top-color:#a8a8a8;box-sizing:border-box;"></div><div class="abs" style="left:487.5px;top:64.5px;width:8.5px;height:15px;background:linear-gradient(#fafafa,#dcdcdc);border:1px solid #8e8e8e;box-sizing:border-box;"></div><svg style="left:487.5px;top:70.0px" width="8.5" height="5"><path d="M1.3 0.5 L7.2 0.5 L4.25 4 Z" fill="#000"/></svg><span class="t" style="left:438.8px;top:64.8px;height:15px;line-height:15px;font-size:11px;color:#111;transform:scaleX(0.8367);">Primary</span>
<div class="abs" style="left:498.8px;top:63px;width:63.19999999999999px;height:18px;background:#fff;border:1px solid #c9c9c9;border-top-color:#a8a8a8;box-sizing:border-box;"></div><div class="abs" style="left:552.5px;top:64.5px;width:8.5px;height:15px;background:linear-gradient(#fafafa,#dcdcdc);border:1px solid #8e8e8e;box-sizing:border-box;"></div><svg style="left:552.5px;top:70.0px" width="8.5" height="5"><path d="M1.3 0.5 L7.2 0.5 L4.25 4 Z" fill="#000"/></svg><span class="t" style="left:501.5px;top:64.8px;height:15px;line-height:15px;font-size:11px;color:#111;transform:scaleX(0.8177);">S</span>
<div class="abs" style="left:564.5px;top:63px;width:63.5px;height:18px;background:#fff;border:1px solid #c9c9c9;border-top-color:#a8a8a8;box-sizing:border-box;"></div><div class="abs" style="left:618.5px;top:64.5px;width:8.5px;height:15px;background:linear-gradient(#fafafa,#dcdcdc);border:1px solid #8e8e8e;box-sizing:border-box;"></div><svg style="left:618.5px;top:70.0px" width="8.5" height="5"><path d="M1.3 0.5 L7.2 0.5 L4.25 4 Z" fill="#000"/></svg><span class="t" style="left:567.5px;top:64.8px;height:15px;line-height:15px;font-size:11px;color:#111;transform:scaleX(0.8112);">Mises</span>
<div class="abs" style="left:630.5px;top:63.5px;width:20.5px;height:18.0px;border:1.4px solid #4f4f4f;border-radius:3px;box-sizing:border-box;background:linear-gradient(#e4e4e4,#f6f6f6);"></div>
<svg style="left:632.5px;top:65px" width="17" height="15" viewBox="0 0 17 15"><path d="M2 8.5 Q3 2.5 9.5 3.2 L12.5 6" fill="none" stroke="#1c3fa8" stroke-width="2.3"/><path d="M14.8 8.2 L9.6 7.6 L13.6 3.4 Z" fill="#1c3fa8"/><path d="M15 6.5 Q14 12.5 7.5 11.8 L4.5 9" fill="none" stroke="#2f6fd6" stroke-width="2.3"/><path d="M2.2 6.8 L7.4 7.4 L3.4 11.6 Z" fill="#2f6fd6"/></svg>
<svg style="left:659px;top:63.5px" width="18" height="17" viewBox="0 0 18 17"><path d="M9 1.5 C15 1 18 6 16.5 10 C15.5 13 12.5 11 11 12.5 C9.5 14 11.5 16 8 16 C3 16 0.5 12 1 8 C1.5 4 5 1.8 9 1.5 Z" fill="#e8c58c" stroke="#9a7a45" stroke-width="0.8"/><circle cx="5" cy="6" r="1.9" fill="#d9342b"/><circle cx="9.5" cy="4.4" r="1.8" fill="#f1d21f"/><circle cx="13.6" cy="6.6" r="1.8" fill="#1b1b1b"/><circle cx="4.4" cy="11" r="1.7" fill="#fff" stroke="#9a7a45" stroke-width="0.5"/><circle cx="13.5" cy="11.5" r="1.8" fill="#2f8a3a"/></svg>
<div class="abs" style="left:679px;top:63px;width:106px;height:18px;background:#fff;border:1px solid #c9c9c9;border-top-color:#a8a8a8;box-sizing:border-box;"></div><div class="abs" style="left:775.5px;top:64.5px;width:8.5px;height:15px;background:linear-gradient(#fafafa,#dcdcdc);border:1px solid #8e8e8e;box-sizing:border-box;"></div><svg style="left:775.5px;top:70.0px" width="8.5" height="5"><path d="M1.3 0.5 L7.2 0.5 L4.25 4 Z" fill="#000"/></svg><span class="t" style="left:681.7px;top:64.8px;height:15px;line-height:15px;font-size:11px;color:#111;transform:scaleX(0.8561);">Visualization defaults</span>
<svg style="left:789.5px;top:64px" width="17" height="17" viewBox="0 0 17 17"><path d="M1 5.5 L5.5 1.5 L16 1.5 L11.5 5.5 Z" fill="#dcc188" stroke="#7d6328" stroke-width="0.9"/><path d="M1 5.5 L11.5 5.5 L11.5 15.5 L1 15.5 Z" fill="#cfb070" stroke="#7d6328" stroke-width="0.9"/><path d="M11.5 5.5 L16 1.5 L16 11 L11.5 15.5 Z" fill="#b89550" stroke="#7d6328" stroke-width="0.9"/><path d="M5.5 1.5 L5.5 11 L1 15.5 M5.5 11 L16 11" fill="none" stroke="#7d6328" stroke-width="0.6"/></svg>
<svg style="left:808.5px;top:70.5px" width="8" height="5" viewBox="0 0 8 5"><path d="M0.5 0.5 L7.5 0.5 L4 4.5 Z" fill="#000"/></svg>
<div class="abs" style="left:240px;top:85px;width:1241px;height:24px;background:linear-gradient(#fafafa,#fdfdfd 60%,#f4f4f4);"></div>
<span class="t" style="left:244.7px;top:89.2px;height:15px;line-height:15px;font-size:11px;color:#111;transform:scaleX(0.8689);">Module:</span>
<div class="abs" style="left:283px;top:87px;width:82.5px;height:19px;background:#fff;border:1px solid #b9b9b9;border-top-color:#8f8f8f;border-left-color:#9f9f9f;box-sizing:border-box;"></div><div class="abs" style="left:285.5px;top:89.5px;width:6px;height:14px;background:#f3f3f3;border:1px solid #cfcfcf;box-sizing:border-box;"></div><svg style="left:286.5px;top:92px" width="4" height="3"><path d="M0 3 L2 0 L4 3 Z" fill="#aaa"/></svg><svg style="left:286.5px;top:98px" width="4" height="3"><path d="M0 0 L2 3 L4 0 Z" fill="#d99"/></svg><div class="abs" style="left:356.0px;top:88.5px;width:8.5px;height:16px;background:linear-gradient(#fafafa,#dcdcdc);border:1px solid #8e8e8e;box-sizing:border-box;"></div><svg style="left:356.0px;top:94.5px" width="8.5" height="5"><path d="M1.3 0.5 L7.2 0.5 L4.25 4 Z" fill="#000"/></svg><span class="t" style="left:294.7px;top:89.3px;height:15px;line-height:15px;font-size:11px;color:#111;transform:scaleX(0.8383);">Visualization</span>
<span class="t" style="left:376.7px;top:89.2px;height:15px;line-height:15px;font-size:11px;color:#111;transform:scaleX(0.7548);">ODB:</span>
<div class="abs" style="left:401.5px;top:87px;width:428.5px;height:19px;background:#fff;border:1px solid #b9b9b9;border-top-color:#8f8f8f;border-left-color:#9f9f9f;box-sizing:border-box;"></div><div class="abs" style="left:404.0px;top:89.5px;width:6px;height:14px;background:#f3f3f3;border:1px solid #cfcfcf;box-sizing:border-box;"></div><svg style="left:405.0px;top:92px" width="4" height="3"><path d="M0 3 L2 0 L4 3 Z" fill="#aaa"/></svg><svg style="left:405.0px;top:98px" width="4" height="3"><path d="M0 0 L2 3 L4 0 Z" fill="#d99"/></svg><div class="abs" style="left:820.5px;top:88.5px;width:8.5px;height:16px;background:linear-gradient(#fafafa,#dcdcdc);border:1px solid #8e8e8e;box-sizing:border-box;"></div><svg style="left:820.5px;top:94.5px" width="8.5" height="5"><path d="M1.3 0.5 L7.2 0.5 L4.25 4 Z" fill="#000"/></svg><span class="t" style="left:413.3px;top:89.3px;height:15px;line-height:15px;font-size:11px;color:#111;transform:scaleX(0.8399);">C:/Zentech/zencrack_example_header_nozzle_2/runs_781/header-nozzle-fatigue_str-zcr001.odb</span>
<svg style="left:1286px;top:91px" width="16" height="11" viewBox="0 0 16 11"><rect x="0.5" y="0.5" width="2" height="9.5" fill="#2c4f8c"/><path d="M8.5 0.5 L8.5 10 L2.5 5.25 Z M15 0.5 L15 10 L8.8 5.25 Z" fill="#2c4f8c"/></svg>
<svg style="left:1312px;top:91px" width="11" height="11" viewBox="0 0 11 11"><path d="M6.5 0.5 L6.5 10 L0.5 5.25 Z" fill="#2c4f8c"/><rect x="8" y="0.5" width="2" height="9.5" fill="#2c4f8c"/></svg>
<svg style="left:1337px;top:91px" width="11" height="11" viewBox="0 0 11 11"><rect x="0.5" y="0.5" width="2" height="9.5" fill="#2c4f8c"/><path d="M4 0.5 L4 10 L10 5.25 Z" fill="#2c4f8c"/></svg>
<svg style="left:1358px;top:91px" width="16" height="11" viewBox="0 0 16 11"><path d="M0.5 0.5 L0.5 10 L6.7 5.25 Z M7 0.5 L7 10 L13 5.25 Z" fill="#2c4f8c"/><rect x="13" y="0.5" width="2" height="9.5" fill="#2c4f8c"/></svg>
<div class="abs" style="left:1382px;top:86px;width:1px;height:21px;background:#c8c8c8;"></div>
<svg style="left:1394px;top:91px" width="10" height="12" viewBox="0 0 10 12"><rect x="0.5" y="0.5" width="5" height="5" fill="none" stroke="#3a4a9a"/><rect x="2.5" y="3.5" width="5" height="5" fill="#f8f8ff" stroke="#3a4a9a"/><rect x="4.5" y="6.5" width="5" height="5" fill="#f8f8ff" stroke="#3a4a9a"/></svg>
<svg style="left:1413.5px;top:90px" width="19" height="15" viewBox="0 0 19 15"><path d="M5 2.5 L6.5 0.5 L13 0.5 L14.5 2.5 Z" fill="#8d9299"/><rect x="0.5" y="2.5" width="18" height="12" rx="2" fill="#9aa0a8" stroke="#6c7178" stroke-width="0.8"/><circle cx="10" cy="8.5" r="5.3" fill="#dfeaf5" stroke="#6c7178" stroke-width="0.9"/><path d="M10 4 L10 8.5 L6.5 11.5 M10 8.5 L13.5 11.5" fill="none" stroke="#c7271f" stroke-width="1.1"/></svg>
<svg style="left:1437.5px;top:90px" width="19" height="15" viewBox="0 0 19 15"><path d="M5 2.5 L6.5 0.5 L13 0.5 L14.5 2.5 Z" fill="#8d9299"/><rect x="0.5" y="2.5" width="18" height="12" rx="2" fill="#9aa0a8" stroke="#6c7178" stroke-width="0.8"/><circle cx="10" cy="8.5" r="5.3" fill="#dfeaf5" stroke="#6c7178" stroke-width="0.9"/><circle cx="10" cy="8.5" r="3.2" fill="#cfe3f7"/></svg>
<div class="abs" style="left:6px;top:107px;width:229px;height:752px;background:#fff;border:1px solid #b4b4b4;box-sizing:border-box;"></div>
<div class="abs" style="left:7.5px;top:91px;width:41.5px;height:17px;background:linear-gradient(#ededed,#dcdcdc);border:1px solid #9c9c9c;border-bottom:none;border-radius:2px 2px 0 0;box-sizing:border-box;"></div>
<span class="t" style="left:13.5px;top:92.3px;height:15px;line-height:15px;font-size:11px;color:#111;transform:scaleX(0.8043);">Results</span>
<div class="abs" style="left:48.5px;top:88.5px;width:52.5px;height:20px;background:#fff;border:1px solid #a9a9a9;border-bottom:none;border-radius:2px 2px 0 0;box-sizing:border-box;"></div>
<span class="t" style="left:55.0px;top:91.1px;height:15px;line-height:15px;font-size:11px;color:#111;transform:scaleX(0.8622);">Zencrack</span>
<div class="abs" style="left:13px;top:120.4px;width:1px;height:287.375px;background:repeating-linear-gradient(#b5b5b5 0,#b5b5b5 1px,transparent 1px,transparent 2px);"></div>
<div class="abs" style="left:26.5px;top:129.525px;width:1px;height:51.375px;background:repeating-linear-gradient(#b5b5b5 0,#b5b5b5 1px,transparent 1px,transparent 2px);"></div>
<div class="abs" style="left:26.5px;top:205.15px;width:1px;height:21.125px;background:repeating-linear-gradient(#b5b5b5 0,#b5b5b5 1px,transparent 1px,transparent 2px);"></div>
<div class="abs" style="left:26.5px;top:265.65px;width:1px;height:36.25px;background:repeating-linear-gradient(#b5b5b5 0,#b5b5b5 1px,transparent 1px,transparent 2px);"></div>
<div class="abs" style="left:40px;top:311.025px;width:1px;height:51.375px;background:repeating-linear-gradient(#b5b5b5 0,#b5b5b5 1px,transparent 1px,transparent 2px);"></div>
<span class="t" style="left:21.0px;top:112.9px;height:15px;line-height:15px;font-size:11px;color:#111;transform:scaleX(0.8253);">File (Zcr)</span>
<svg style="left:9.0px;top:115.9px" width="9" height="9"><rect x="0.5" y="0.5" width="8" height="8" fill="#fff" stroke="#9a9a9a"/><path d="M2 4.5 L7 4.5" stroke="#4a5a8a" stroke-width="1"/></svg>
<div class="abs" style="left:26.7px;top:136px;width:5.400000000000002px;height:1px;background:repeating-linear-gradient(90deg,#b5b5b5 0,#b5b5b5 1px,transparent 1px,transparent 2px);"></div>
<span class="t" style="left:34.6px;top:128.0px;height:15px;line-height:15px;font-size:11px;color:#111;transform:scaleX(0.8635);">New</span>
<div class="abs" style="left:26.7px;top:151px;width:5.400000000000002px;height:1px;background:repeating-linear-gradient(90deg,#b5b5b5 0,#b5b5b5 1px,transparent 1px,transparent 2px);"></div>
<span class="t" style="left:34.6px;top:143.2px;height:15px;line-height:15px;font-size:11px;color:#111;transform:scaleX(0.8389);">Open..</span>
<div class="abs" style="left:26.7px;top:166px;width:5.400000000000002px;height:1px;background:repeating-linear-gradient(90deg,#b5b5b5 0,#b5b5b5 1px,transparent 1px,transparent 2px);"></div>
<span class="t" style="left:34.6px;top:158.3px;height:15px;line-height:15px;font-size:11px;color:#111;transform:scaleX(0.7578);">Save</span>
<div class="abs" style="left:26.7px;top:181px;width:5.400000000000002px;height:1px;background:repeating-linear-gradient(90deg,#b5b5b5 0,#b5b5b5 1px,transparent 1px,transparent 2px);"></div>
<span class="t" style="left:34.6px;top:173.4px;height:15px;line-height:15px;font-size:11px;color:#111;transform:scaleX(0.7790);">Save As..</span>
<span class="t" style="left:21.0px;top:188.5px;height:15px;line-height:15px;font-size:11px;color:#111;transform:scaleX(0.8409);">Uncracked mesh</span>
<svg style="left:9.0px;top:191.5px" width="9" height="9"><rect x="0.5" y="0.5" width="8" height="8" fill="#fff" stroke="#9a9a9a"/><path d="M2 4.5 L7 4.5" stroke="#4a5a8a" stroke-width="1"/></svg>
<div class="abs" style="left:26.7px;top:211px;width:5.400000000000002px;height:1px;background:repeating-linear-gradient(90deg,#b5b5b5 0,#b5b5b5 1px,transparent 1px,transparent 2px);"></div>
<span class="t" style="left:34.6px;top:203.7px;height:15px;line-height:15px;font-size:11px;color:#111;transform:scaleX(0.8913);">Input file (inp)</span>
<div class="abs" style="left:26.7px;top:226px;width:5.400000000000002px;height:1px;background:repeating-linear-gradient(90deg,#b5b5b5 0,#b5b5b5 1px,transparent 1px,transparent 2px);"></div>
<span class="t" style="left:34.6px;top:218.8px;height:15px;line-height:15px;font-size:11px;color:#111;transform:scaleX(0.8476);">Run Abaqus</span>
<div class="abs" style="left:13.5px;top:241px;width:5.0px;height:1px;background:repeating-linear-gradient(90deg,#b5b5b5 0,#b5b5b5 1px,transparent 1px,transparent 2px);"></div>
<span class="t" style="left:21.0px;top:233.9px;height:15px;line-height:15px;font-size:11px;color:#111;transform:scaleX(0.8455);">Zencrack analysis options</span>
<span class="t" style="left:21.0px;top:249.0px;height:15px;line-height:15px;font-size:11px;color:#111;transform:scaleX(0.8732);">Crack definition</span>
<svg style="left:9.0px;top:252.0px" width="9" height="9"><rect x="0.5" y="0.5" width="8" height="8" fill="#fff" stroke="#9a9a9a"/><path d="M2 4.5 L7 4.5" stroke="#4a5a8a" stroke-width="1"/></svg>
<div class="abs" style="left:26.7px;top:272px;width:5.400000000000002px;height:1px;background:repeating-linear-gradient(90deg,#b5b5b5 0,#b5b5b5 1px,transparent 1px,transparent 2px);"></div>
<span class="t" style="left:34.6px;top:264.1px;height:15px;line-height:15px;font-size:11px;color:#111;transform:scaleX(0.8711);">Crack-block picker</span>
<div class="abs" style="left:26.7px;top:287px;width:5.400000000000002px;height:1px;background:repeating-linear-gradient(90deg,#b5b5b5 0,#b5b5b5 1px,transparent 1px,transparent 2px);"></div>
<span class="t" style="left:34.6px;top:279.3px;height:15px;line-height:15px;font-size:11px;color:#111;transform:scaleX(0.8585);">Split element picker</span>
<span class="t" style="left:34.6px;top:294.4px;height:15px;line-height:15px;font-size:11px;color:#111;transform:scaleX(0.8504);">Crack front viewer (4)</span>
<svg style="left:22.2px;top:297.4px" width="9" height="9"><rect x="0.5" y="0.5" width="8" height="8" fill="#fff" stroke="#9a9a9a"/><path d="M2 4.5 L7 4.5" stroke="#4a5a8a" stroke-width="1"/></svg>
<div class="abs" style="left:40px;top:317px;width:5.799999999999997px;height:1px;background:repeating-linear-gradient(90deg,#b5b5b5 0,#b5b5b5 1px,transparent 1px,transparent 2px);"></div>
<div class="abs" style="left:46.6px;top:309.8px;width:52.8px;height:14.4px;background:#3b86e0;"></div>
<span class="t" style="left:48.3px;top:309.5px;height:15px;line-height:15px;font-size:11px;color:#8db4ea;transform:scaleX(0.8378);">plane45 line</span>
<div class="abs" style="left:40px;top:332px;width:5.799999999999997px;height:1px;background:repeating-linear-gradient(90deg,#b5b5b5 0,#b5b5b5 1px,transparent 1px,transparent 2px);"></div>
<span class="t" style="left:48.3px;top:324.6px;height:15px;line-height:15px;font-size:11px;color:#111;transform:scaleX(0.8584);">plane45 point</span>
<div class="abs" style="left:40px;top:347px;width:5.799999999999997px;height:1px;background:repeating-linear-gradient(90deg,#b5b5b5 0,#b5b5b5 1px,transparent 1px,transparent 2px);"></div>
<span class="t" style="left:48.3px;top:339.8px;height:15px;line-height:15px;font-size:11px;color:#111;transform:scaleX(0.8301);">header end</span>
<div class="abs" style="left:40px;top:362px;width:5.799999999999997px;height:1px;background:repeating-linear-gradient(90deg,#b5b5b5 0,#b5b5b5 1px,transparent 1px,transparent 2px);"></div>
<span class="t" style="left:48.3px;top:354.9px;height:15px;line-height:15px;font-size:11px;color:#111;transform:scaleX(0.8289);">nozzle end</span>
<span class="t" style="left:21.0px;top:370.0px;height:15px;line-height:15px;font-size:11px;color:#111;transform:scaleX(0.8676);">Mesh controls</span>
<svg style="left:9.0px;top:373.0px" width="9" height="9"><rect x="0.5" y="0.5" width="8" height="8" fill="#fff" stroke="#9a9a9a"/><path d="M2 4.5 L7 4.5" stroke="#4a5a8a" stroke-width="1"/><path d="M4.5 2 L4.5 7" stroke="#4a5a8a" stroke-width="1"/></svg>
<div class="abs" style="left:13.5px;top:393px;width:5.0px;height:1px;background:repeating-linear-gradient(90deg,#b5b5b5 0,#b5b5b5 1px,transparent 1px,transparent 2px);"></div>
<span class="t" style="left:21.0px;top:385.1px;height:15px;line-height:15px;font-size:11px;color:#111;transform:scaleX(0.8695);">Zcr input data (other)</span>
<span class="t" style="left:21.0px;top:400.3px;height:15px;line-height:15px;font-size:11px;color:#111;transform:scaleX(0.8532);">Help</span>
<svg style="left:9.0px;top:403.3px" width="9" height="9"><rect x="0.5" y="0.5" width="8" height="8" fill="#fff" stroke="#9a9a9a"/><path d="M2 4.5 L7 4.5" stroke="#4a5a8a" stroke-width="1"/><path d="M4.5 2 L4.5 7" stroke="#4a5a8a" stroke-width="1"/></svg>
<div class="abs" style="left:235px;top:109px;width:53px;height:748px;background:#f1f1f1;"></div>
<div class="abs" style="left:241px;top:326.7px;width:44px;height:1px;background:#cfcfcf;"></div>
<div class="abs" style="left:241px;top:354.6px;width:44px;height:1px;background:#cfcfcf;"></div>
<div class="abs" style="left:241px;top:405px;width:44px;height:1px;background:#cfcfcf;"></div>
<div class="abs" style="left:241px;top:432.8px;width:44px;height:1px;background:#cfcfcf;"></div>
<svg style="left:244px;top:117px" width="16" height="9" viewBox="0 0 16 9"><rect x="0.5" y="0.5" width="4" height="8" fill="#f0e08a" stroke="#a89a3a" stroke-width="0.6"/><rect x="5.5" y="0.5" width="4" height="8" fill="#f0e08a" stroke="#a89a3a" stroke-width="0.6"/><rect x="10.5" y="0.5" width="4" height="8" fill="#f0e08a" stroke="#a89a3a" stroke-width="0.6"/></svg>
<svg style="left:265px;top:117px" width="18" height="9" viewBox="0 0 18 9"><rect x="0.5" y="0.5" width="16" height="8" fill="#f0e08a" stroke="#a89a3a" stroke-width="0.6"/><path d="M6 0.5 L6 9 M11.5 0.5 L11.5 9 M0.5 4 L16.5 4" stroke="#a89a3a" stroke-width="0.6"/></svg>
<svg style="left:243px;top:289px" width="18" height="13" viewBox="0 0 18 13"><rect x="0.5" y="-3" width="17" height="15" rx="2" fill="#e5e8dc" stroke="#8d917e" stroke-width="0.8"/><path d="M2 8 Q8 2 13 6" fill="none" stroke="#4a9a5a" stroke-width="0.9"/><circle cx="12" cy="4.5" r="3" fill="none" stroke="#d9534f" stroke-width="0.9"/></svg>
<svg style="left:266px;top:289px" width="18" height="13" viewBox="0 0 18 13"><rect x="0.5" y="-3" width="17" height="15" rx="2" fill="#e5e8dc" stroke="#8d917e" stroke-width="0.8"/><path d="M2 10 Q9 8 15 2" fill="none" stroke="#4a9a5a" stroke-width="0.9"/><path d="M10 3 Q13 0 15 4" fill="none" stroke="#d9534f" stroke-width="0.9"/></svg>
<svg style="left:243px;top:306px" width="19" height="17" viewBox="0 0 19 17"><rect x="0.5" y="4" width="17" height="12.5" rx="1.5" fill="#e5e2d2" stroke="#8d8a78" stroke-width="0.8"/><path d="M2 11 Q5 5 8 10 T 15 10" fill="none" stroke="#c76a3a" stroke-width="0.9"/><path d="M2 9 Q6 14 9 9 T 16 8" fill="none" stroke="#4a8a4a" stroke-width="0.7"/><path d="M2 3.5 L6 2.5 L9 3.5 L13 1.5 L16 2" fill="none" stroke="#333" stroke-width="1.1" stroke-dasharray="1.5 1"/></svg>
<svg style="left:266px;top:307px" width="19" height="16" viewBox="0 0 19 16"><rect x="0.5" y="0.5" width="3.2" height="3.2" fill="#fff" stroke="#333" stroke-width="0.7"/><rect x="0.5" y="6" width="3.2" height="3.2" fill="#3a6a3a" stroke="#333" stroke-width="0.7"/><rect x="0.5" y="11.5" width="3.2" height="3.2" fill="#fff" stroke="#333" stroke-width="0.7"/><path d="M6 2.2 L17 2.2 M6 7.7 L17 7.7 M6 13.2 L17 13.2" stroke="#3a6ac8" stroke-width="1.5" stroke-dasharray="2.6 1.2"/></svg>
<svg style="left:243px;top:333px" width="18" height="19" viewBox="0 0 18 19"><path d="M9 3 L9 11 L3 16.5 M9 11 L15 16.5" fill="none" stroke="#2a6fc8" stroke-width="1.3"/><path d="M9 0.5 L6.5 4.8 L11.5 4.8 Z M1 18.3 L2 13.8 L5.6 17 Z M17 18.3 L16 13.8 L12.4 17 Z" fill="#2a6fc8"/></svg>
<svg style="left:266px;top:335px" width="18" height="16" viewBox="0 0 18 16"><rect x="0.5" y="0.5" width="17" height="15" fill="#e9e2c8" stroke="#7c7458" stroke-width="0.9"/><rect x="0.5" y="0.5" width="17" height="3.4" fill="#2f62b3"/><rect x="3" y="5.8" width="4" height="2" fill="#8a8570"/><rect x="9" y="5.8" width="6" height="2" fill="#b5ae94"/><rect x="3" y="8.8" width="4" height="1.6" fill="#8a8570"/><rect x="9" y="8.8" width="6" height="1.6" fill="#b5ae94"/><rect x="2" y="12" width="3.6" height="2.4" fill="#6f6a55"/><rect x="7.2" y="12" width="3.6" height="2.4" fill="#6f6a55"/><rect x="12.4" y="12" width="3.6" height="2.4" fill="#6f6a55"/></svg>
<svg style="left:243px;top:365px" width="19" height="17" viewBox="0 0 19 17"><rect x="0.5" y="0.5" width="17.5" height="16" rx="1.5" fill="#fff" stroke="#555" stroke-width="0.9"/><rect x="1" y="1" width="16.5" height="5" fill="#e9e9e9"/><path d="M9.2 0.5 L9.2 16.5 M0.5 6 L18 6 M0.5 9.5 L18 9.5 M0.5 13 L18 13" stroke="#555" stroke-width="0.7"/><text x="2.6" y="5.4" font-family="Liberation Sans,sans-serif" font-weight="bold" font-size="5.5" fill="#c7271f">X</text><text x="11.4" y="5.4" font-family="Liberation Sans,sans-serif" font-weight="bold" font-size="5.5" fill="#c7271f">Y</text></svg>
<svg style="left:266px;top:365.5px" width="18" height="16" viewBox="0 0 18 16"><rect x="0.5" y="0.5" width="17" height="15" fill="#e9e2c8" stroke="#7c7458" stroke-width="0.9"/><rect x="0.5" y="0.5" width="17" height="3.4" fill="#2f62b3"/><rect x="3" y="5.8" width="4" height="2" fill="#8a8570"/><rect x="9" y="5.8" width="6" height="2" fill="#b5ae94"/><rect x="3" y="8.8" width="4" height="1.6" fill="#8a8570"/><rect x="9" y="8.8" width="6" height="1.6" fill="#b5ae94"/><rect x="2" y="12" width="3.6" height="2.4" fill="#6f6a55"/><rect x="7.2" y="12" width="3.6" height="2.4" fill="#6f6a55"/><rect x="12.4" y="12" width="3.6" height="2.4" fill="#6f6a55"/></svg>
<svg style="left:243px;top:388px" width="20" height="14" viewBox="0 0 20 14"><path d="M1 2 L1 10 M1 6 L14 6 M4.5 4 L4.5 8 M8 4 L8 8 M11.5 4 L11.5 8" stroke="#2a3a9a" stroke-width="0.9" fill="none"/><path d="M12.5 2.5 L16 6 L12.5 9.5" fill="none" stroke="#2a3a9a" stroke-width="0.9"/><path d="M19 10.5 L19 13.5 L16 13.5 Z" fill="#000"/></svg>
<svg style="left:265px;top:386px" width="19" height="14" viewBox="0 0 19 14"><path d="M1.5 11 L6 4 L11 11 L17 3.5" fill="none" stroke="#d9201c" stroke-width="1.3"/><rect x="0.3" y="9.8" width="2.6" height="2.6" fill="#d9201c"/><rect x="4.7" y="2.8" width="2.6" height="2.6" fill="#d9201c"/><rect x="9.7" y="9.8" width="2.6" height="2.6" fill="#d9201c"/><rect x="15.5" y="2.2" width="2.6" height="2.6" fill="#d9201c"/></svg>
<svg style="left:244px;top:412px" width="17" height="15" viewBox="0 0 17 15"><path d="M1 5 Q4 1 7 4 Q10 7 13 3.5 L16 9 Q13 13 10 10.5 Q7 8 3.5 11.5 Z" fill="#e7c24e" stroke="#8d7220" stroke-width="0.8"/><path d="M4 7 Q7 5 10 8 M6 4 L8 10" stroke="#8d7220" stroke-width="0.5" fill="none"/></svg>
<svg style="left:266px;top:409px" width="19" height="20" viewBox="0 0 19 20"><path d="M2 5 Q5 1 8 4 Q11 7 14 3.5 L17 9 Q14 13 11 10.5 Q8 8 4.5 11.5 Z" fill="#e7c24e" stroke="#8d7220" stroke-width="0.8"/><ellipse cx="7.5" cy="14.5" rx="3" ry="2.2" fill="#f4f6ff" stroke="#3a4ac8" stroke-width="1"/><ellipse cx="12.5" cy="16.8" rx="3" ry="2.2" fill="#f4f6ff" stroke="#3a4ac8" stroke-width="1"/></svg>
<svg style="left:243px;top:438px" width="19" height="14" viewBox="0 0 19 14"><rect x="1" y="4" width="2.4" height="10" fill="#d9201c"/><rect x="3.4" y="2" width="2.4" height="12" fill="#e9a82a"/><rect x="5.8" y="5" width="2.4" height="9" fill="#4aa84a"/><path d="M11.5 0 L11.5 14" stroke="#d9201c" stroke-width="0.9" stroke-dasharray="2 1.2"/><path d="M10 13.5 L18 13.5" stroke="#333" stroke-width="0.8"/></svg>
<svg style="left:266px;top:440px" width="18" height="16" viewBox="0 0 18 16"><rect x="0.5" y="0.5" width="17" height="15" fill="#e9e2c8" stroke="#7c7458" stroke-width="0.9"/><rect x="0.5" y="0.5" width="17" height="3.4" fill="#2f62b3"/><rect x="3" y="5.8" width="4" height="2" fill="#8a8570"/><rect x="9" y="5.8" width="6" height="2" fill="#b5ae94"/><rect x="3" y="8.8" width="4" height="1.6" fill="#8a8570"/><rect x="9" y="8.8" width="6" height="1.6" fill="#b5ae94"/><rect x="2" y="12" width="3.6" height="2.4" fill="#6f6a55"/><rect x="7.2" y="12" width="3.6" height="2.4" fill="#6f6a55"/><rect x="12.4" y="12" width="3.6" height="2.4" fill="#6f6a55"/></svg>
<svg style="left:0;top:0" width="1483" height="857" viewBox="0 0 1483 857"><defs><clipPath id="vpclip"><rect x="288" y="109.8" width="1193" height="747.2"/></clipPath><linearGradient id="navy" x1="0" y1="0" x2="0" y2="1"><stop offset="0" stop-color="#1e2c48"/><stop offset="1" stop-color="#28385a"/></linearGradient></defs>
<g clip-path="url(#vpclip)">
<rect x="288" y="109.8" width="1193" height="747.2" fill="#00c800"/>
<path d="M70.4 76.0 L70.4 96.0 L70.4 116.0 L70.4 136.0 L70.4 156.0 L70.4 176.0 L70.4 196.0 L70.4 216.0 L70.4 236.0 L70.4 256.0 L70.4 276.0 L70.4 296.0 L70.4 316.0 L70.4 336.0 L68.3 382.1 L63.1 428.9 L55.3 477.2 L47.1 527.3 L39.4 579.2 L33.2 632.9 L29.7 688.1 L30.7 744.0 L37.0 799.7 L49.0 854.5 L68.3 906.7 L94.1 955.7 L126.7 1000.3 L162.6 1042.3 L200.0 1083.0 L236.9 1124.6 L276.6 1163.8 L318.1 1201.7 L361.9 1236.9 L407.9 1269.8 L456.0 1299.7 L505.7 1327.1 L557.1 1351.8 L609.8 1373.7 L663.8 1393.0 L718.7 1409.9 L774.7 1424.0 L831.5 1435.2 L889.0 1443.5 L947.0 1449.4 L977.0 1449.4 L1007.0 1449.4 L1037.0 1449.4 L1067.0 1449.4 L1097.0 1449.4 L1127.0 1449.4 L1157.0 1449.4 L1187.0 1449.4 L1217.0 1449.4 L1247.0 1449.4 L1277.0 1449.4 L1307.0 1449.4 L1337.0 1449.4 L1367.0 1449.4 L1397.0 1449.4 L1427.0 1449.4 L1457.0 1449.4 L1487.0 1449.4 L1517.0 1449.4 L1517.0 1505.9 L1487.0 1505.9 L1457.0 1505.9 L1427.0 1505.9 L1397.0 1505.9 L1367.0 1505.9 L1337.0 1505.9 L1307.0 1505.9 L1277.0 1505.9 L1247.0 1505.9 L1217.0 1505.9 L1187.0 1505.9 L1157.0 1505.9 L1127.0 1505.9 L1097.0 1505.9 L1067.0 1505.9 L1037.0 1505.9 L1007.0 1505.9 L977.0 1505.9 L947.0 1505.9 L886.0 1499.6 L825.6 1490.7 L766.0 1478.7 L707.3 1463.8 L649.6 1445.9 L593.0 1425.4 L537.7 1402.3 L483.9 1376.2 L431.7 1347.3 L381.4 1315.7 L333.2 1281.1 L287.3 1244.0 L243.9 1204.3 L202.3 1163.0 L163.7 1119.3 L124.4 1076.6 L86.8 1032.6 L52.6 985.8 L25.8 934.3 L5.9 879.3 L-6.2 821.7 L-12.3 763.1 L-12.7 704.4 L-8.3 646.4 L-1.2 590.1 L7.4 535.7 L16.6 483.4 L25.2 432.9 L30.9 384.0 L33.2 336.0 L33.2 316.0 L33.2 296.0 L33.2 276.0 L33.2 256.0 L33.2 236.0 L33.2 216.0 L33.2 196.0 L33.2 176.0 L33.2 156.0 L33.2 136.0 L33.2 116.0 L33.2 96.0 L33.2 76.0 Z" fill="rgb(20,255,20)" stroke="rgb(20,255,20)" stroke-width="0.6"/>
<path d="M107.9 76.0 L107.9 96.0 L107.9 116.0 L107.9 136.0 L107.9 156.0 L107.9 176.0 L107.9 196.0 L107.9 216.0 L107.9 236.0 L107.9 256.0 L107.9 276.0 L107.9 296.0 L107.9 316.0 L107.9 336.0 L106.0 380.1 L101.4 424.9 L94.4 471.0 L87.1 518.8 L80.4 568.2 L75.2 619.3 L72.4 671.7 L74.0 724.7 L80.6 777.5 L92.4 829.4 L111.1 878.8 L135.9 925.3 L166.9 967.7 L201.1 1007.6 L236.6 1046.4 L271.8 1085.9 L309.7 1123.0 L349.1 1158.9 L390.9 1192.4 L434.6 1223.4 L480.4 1251.7 L527.8 1277.6 L576.6 1300.9 L626.8 1321.5 L678.1 1339.6 L730.3 1355.5 L783.4 1368.7 L837.4 1379.2 L891.9 1387.0 L947.0 1392.4 L977.0 1392.4 L1007.0 1392.4 L1037.0 1392.4 L1067.0 1392.4 L1097.0 1392.4 L1127.0 1392.4 L1157.0 1392.4 L1187.0 1392.4 L1217.0 1392.4 L1247.0 1392.4 L1277.0 1392.4 L1307.0 1392.4 L1337.0 1392.4 L1367.0 1392.4 L1397.0 1392.4 L1427.0 1392.4 L1457.0 1392.4 L1487.0 1392.4 L1517.0 1392.4 L1517.0 1449.4 L1487.0 1449.4 L1457.0 1449.4 L1427.0 1449.4 L1397.0 1449.4 L1367.0 1449.4 L1337.0 1449.4 L1307.0 1449.4 L1277.0 1449.4 L1247.0 1449.4 L1217.0 1449.4 L1187.0 1449.4 L1157.0 1449.4 L1127.0 1449.4 L1097.0 1449.4 L1067.0 1449.4 L1037.0 1449.4 L1007.0 1449.4 L977.0 1449.4 L947.0 1449.4 L889.0 1443.5 L831.5 1435.2 L774.7 1424.0 L718.7 1409.9 L663.8 1393.0 L609.8 1373.7 L557.1 1351.8 L505.7 1327.1 L456.0 1299.7 L407.9 1269.8 L361.9 1236.9 L318.1 1201.7 L276.6 1163.8 L236.9 1124.6 L200.0 1083.0 L162.6 1042.3 L126.7 1000.3 L94.1 955.7 L68.3 906.7 L49.0 854.5 L37.0 799.7 L30.7 744.0 L29.7 688.1 L33.2 632.9 L39.4 579.2 L47.1 527.3 L55.3 477.2 L63.1 428.9 L68.3 382.1 L70.4 336.0 L70.4 316.0 L70.4 296.0 L70.4 276.0 L70.4 256.0 L70.4 236.0 L70.4 216.0 L70.4 196.0 L70.4 176.0 L70.4 156.0 L70.4 136.0 L70.4 116.0 L70.4 96.0 L70.4 76.0 Z" fill="rgb(20,255,20)" stroke="rgb(20,255,20)" stroke-width="0.6"/>
<path d="M145.5 76.0 L145.5 96.0 L145.5 116.0 L145.5 136.0 L145.5 156.0 L145.5 176.0 L145.5 196.0 L145.5 216.0 L145.5 236.0 L145.5 256.0 L145.5 276.0 L145.5 296.0 L145.5 316.0 L145.5 336.0 L143.7 378.1 L139.6 420.9 L133.5 464.9 L127.1 510.3 L121.4 557.2 L117.1 605.6 L115.1 655.3 L117.3 705.4 L124.1 755.3 L135.8 804.3 L154.0 851.0 L177.7 894.9 L207.2 935.1 L239.6 973.0 L273.2 1009.8 L306.7 1047.1 L342.7 1082.3 L380.2 1116.2 L419.8 1147.8 L461.4 1177.1 L504.9 1203.7 L549.8 1228.1 L596.1 1250.0 L643.8 1269.3 L692.4 1286.3 L741.8 1301.2 L792.2 1313.5 L843.2 1323.3 L894.9 1330.5 L947.0 1335.5 L977.0 1335.5 L1007.0 1335.5 L1037.0 1335.5 L1067.0 1335.5 L1097.0 1335.5 L1127.0 1335.5 L1157.0 1335.5 L1187.0 1335.5 L1217.0 1335.5 L1247.0 1335.5 L1277.0 1335.5 L1307.0 1335.5 L1337.0 1335.5 L1367.0 1335.5 L1397.0 1335.5 L1427.0 1335.5 L1457.0 1335.5 L1487.0 1335.5 L1517.0 1335.5 L1517.0 1392.4 L1487.0 1392.4 L1457.0 1392.4 L1427.0 1392.4 L1397.0 1392.4 L1367.0 1392.4 L1337.0 1392.4 L1307.0 1392.4 L1277.0 1392.4 L1247.0 1392.4 L1217.0 1392.4 L1187.0 1392.4 L1157.0 1392.4 L1127.0 1392.4 L1097.0 1392.4 L1067.0 1392.4 L1037.0 1392.4 L1007.0 1392.4 L977.0 1392.4 L947.0 1392.4 L891.9 1387.0 L837.4 1379.2 L783.4 1368.7 L730.3 1355.5 L678.1 1339.6 L626.8 1321.5 L576.6 1300.9 L527.8 1277.6 L480.4 1251.7 L434.6 1223.4 L390.9 1192.4 L349.1 1158.9 L309.7 1123.0 L271.8 1085.9 L236.6 1046.4 L201.1 1007.6 L166.9 967.7 L135.9 925.3 L111.1 878.8 L92.4 829.4 L80.6 777.5 L74.0 724.7 L72.4 671.7 L75.2 619.3 L80.4 568.2 L87.1 518.8 L94.4 471.0 L101.4 424.9 L106.0 380.1 L107.9 336.0 L107.9 316.0 L107.9 296.0 L107.9 276.0 L107.9 256.0 L107.9 236.0 L107.9 216.0 L107.9 196.0 L107.9 176.0 L107.9 156.0 L107.9 136.0 L107.9 116.0 L107.9 96.0 L107.9 76.0 Z" fill="rgb(20,255,20)" stroke="rgb(20,255,20)" stroke-width="0.6"/>
<path d="M182.7 76.0 L182.7 96.0 L182.7 116.0 L182.7 136.0 L182.7 156.0 L182.7 176.0 L182.7 196.0 L182.7 216.0 L182.7 236.0 L182.7 256.0 L182.7 276.0 L182.7 296.0 L182.7 316.0 L182.7 336.0 L181.1 376.1 L177.6 416.9 L172.2 458.7 L166.7 501.9 L162.0 546.3 L158.7 592.1 L157.5 639.1 L160.2 686.3 L167.3 733.3 L178.9 779.5 L196.5 823.4 L219.1 864.8 L247.1 902.8 L277.7 938.6 L309.6 973.4 L341.3 1008.7 L375.4 1041.8 L410.9 1073.8 L448.5 1103.6 L487.9 1131.2 L529.1 1156.1 L571.7 1179.0 L615.5 1199.5 L660.6 1217.5 L706.6 1233.4 L753.3 1247.3 L800.9 1258.7 L849.1 1267.8 L897.8 1274.4 L947.0 1279.0 L977.0 1279.0 L1007.0 1279.0 L1037.0 1279.0 L1067.0 1279.0 L1097.0 1279.0 L1127.0 1279.0 L1157.0 1279.0 L1187.0 1279.0 L1217.0 1279.0 L1247.0 1279.0 L1277.0 1279.0 L1307.0 1279.0 L1337.0 1279.0 L1367.0 1279.0 L1397.0 1279.0 L1427.0 1279.0 L1457.0 1279.0 L1487.0 1279.0 L1517.0 1279.0 L1517.0 1335.5 L1487.0 1335.5 L1457.0 1335.5 L1427.0 1335.5 L1397.0 1335.5 L1367.0 1335.5 L1337.0 1335.5 L1307.0 1335.5 L1277.0 1335.5 L1247.0 1335.5 L1217.0 1335.5 L1187.0 1335.5 L1157.0 1335.5 L1127.0 1335.5 L1097.0 1335.5 L1067.0 1335.5 L1037.0 1335.5 L1007.0 1335.5 L977.0 1335.5 L947.0 1335.5 L894.9 1330.5 L843.2 1323.3 L792.2 1313.5 L741.8 1301.2 L692.4 1286.3 L643.8 1269.3 L596.1 1250.0 L549.8 1228.1 L504.9 1203.7 L461.4 1177.1 L419.8 1147.8 L380.2 1116.2 L342.7 1082.3 L306.7 1047.1 L273.2 1009.8 L239.6 973.0 L207.2 935.1 L177.7 894.9 L154.0 851.0 L135.8 804.3 L124.1 755.3 L117.3 705.4 L115.1 655.3 L117.1 605.6 L121.4 557.2 L127.1 510.3 L133.5 464.9 L139.6 420.9 L143.7 378.1 L145.5 336.0 L145.5 316.0 L145.5 296.0 L145.5 276.0 L145.5 256.0 L145.5 236.0 L145.5 216.0 L145.5 196.0 L145.5 176.0 L145.5 156.0 L145.5 136.0 L145.5 116.0 L145.5 96.0 L145.5 76.0 Z" fill="rgb(20,255,20)" stroke="rgb(20,255,20)" stroke-width="0.6"/>
<path d="M219.2 76.0 L219.2 96.0 L219.2 116.0 L219.2 136.0 L219.2 156.0 L219.2 176.0 L219.2 196.0 L219.2 216.0 L219.2 236.0 L219.2 256.0 L219.2 276.0 L219.2 296.0 L219.2 316.0 L219.2 336.0 L217.9 374.2 L214.8 413.0 L210.2 452.7 L205.7 493.6 L201.9 535.6 L199.5 578.9 L199.1 623.1 L202.4 667.5 L209.7 711.7 L221.2 755.0 L238.2 796.3 L259.8 835.2 L286.3 871.0 L315.2 904.9 L345.2 937.8 L375.2 971.0 L407.6 1002.1 L441.2 1032.2 L476.7 1060.1 L514.0 1086.0 L552.9 1109.4 L593.2 1130.8 L634.6 1149.9 L677.1 1166.7 L720.5 1181.4 L764.6 1194.3 L809.4 1204.9 L854.8 1213.3 L900.7 1219.3 L947.0 1223.5 L977.0 1223.5 L1007.0 1223.5 L1037.0 1223.5 L1067.0 1223.5 L1097.0 1223.5 L1127.0 1223.5 L1157.0 1223.5 L1187.0 1223.5 L1217.0 1223.5 L1247.0 1223.5 L1277.0 1223.5 L1307.0 1223.5 L1337.0 1223.5 L1367.0 1223.5 L1397.0 1223.5 L1427.0 1223.5 L1457.0 1223.5 L1487.0 1223.5 L1517.0 1223.5 L1517.0 1279.0 L1487.0 1279.0 L1457.0 1279.0 L1427.0 1279.0 L1397.0 1279.0 L1367.0 1279.0 L1337.0 1279.0 L1307.0 1279.0 L1277.0 1279.0 L1247.0 1279.0 L1217.0 1279.0 L1187.0 1279.0 L1157.0 1279.0 L1127.0 1279.0 L1097.0 1279.0 L1067.0 1279.0 L1037.0 1279.0 L1007.0 1279.0 L977.0 1279.0 L947.0 1279.0 L897.8 1274.4 L849.1 1267.8 L800.9 1258.7 L753.3 1247.3 L706.6 1233.4 L660.6 1217.5 L615.5 1199.5 L571.7 1179.0 L529.1 1156.1 L487.9 1131.2 L448.5 1103.6 L410.9 1073.8 L375.4 1041.8 L341.3 1008.7 L309.6 973.4 L277.7 938.6 L247.1 902.8 L219.1 864.8 L196.5 823.4 L178.9 779.5 L167.3 733.3 L160.2 686.3 L157.5 639.1 L158.7 592.1 L162.0 546.3 L166.7 501.9 L172.2 458.7 L177.6 416.9 L181.1 376.1 L182.7 336.0 L182.7 316.0 L182.7 296.0 L182.7 276.0 L182.7 256.0 L182.7 236.0 L182.7 216.0 L182.7 196.0 L182.7 176.0 L182.7 156.0 L182.7 136.0 L182.7 116.0 L182.7 96.0 L182.7 76.0 Z" fill="rgb(20,255,20)" stroke="rgb(20,255,20)" stroke-width="0.6"/>
<path d="M254.7 76.0 L254.7 96.0 L254.7 116.0 L254.7 136.0 L254.7 156.0 L254.7 176.0 L254.7 196.0 L254.7 216.0 L254.7 236.0 L254.7 256.0 L254.7 276.0 L254.7 296.0 L254.7 316.0 L254.7 336.0 L253.6 372.3 L251.1 409.1 L247.2 446.8 L243.6 485.5 L240.8 525.2 L239.2 566.0 L239.6 607.5 L243.4 649.3 L251.0 690.6 L262.4 731.3 L278.8 769.9 L299.4 806.5 L324.4 840.2 L351.6 872.1 L379.9 903.1 L408.3 934.3 L438.9 963.5 L470.6 991.7 L504.2 1017.9 L539.3 1042.1 L576.1 1064.0 L614.0 1083.8 L653.1 1101.7 L693.2 1117.2 L734.0 1130.9 L775.5 1142.8 L817.7 1152.6 L860.4 1160.3 L903.5 1165.8 L947.0 1169.6 L977.0 1169.6 L1007.0 1169.6 L1037.0 1169.6 L1067.0 1169.6 L1097.0 1169.6 L1127.0 1169.6 L1157.0 1169.6 L1187.0 1169.6 L1217.0 1169.6 L1247.0 1169.6 L1277.0 1169.6 L1307.0 1169.6 L1337.0 1169.6 L1367.0 1169.6 L1397.0 1169.6 L1427.0 1169.6 L1457.0 1169.6 L1487.0 1169.6 L1517.0 1169.6 L1517.0 1223.5 L1487.0 1223.5 L1457.0 1223.5 L1427.0 1223.5 L1397.0 1223.5 L1367.0 1223.5 L1337.0 1223.5 L1307.0 1223.5 L1277.0 1223.5 L1247.0 1223.5 L1217.0 1223.5 L1187.0 1223.5 L1157.0 1223.5 L1127.0 1223.5 L1097.0 1223.5 L1067.0 1223.5 L1037.0 1223.5 L1007.0 1223.5 L977.0 1223.5 L947.0 1223.5 L900.7 1219.3 L854.8 1213.3 L809.4 1204.9 L764.6 1194.3 L720.5 1181.4 L677.1 1166.7 L634.6 1149.9 L593.2 1130.8 L552.9 1109.4 L514.0 1086.0 L476.7 1060.1 L441.2 1032.2 L407.6 1002.1 L375.2 971.0 L345.2 937.8 L315.2 904.9 L286.3 871.0 L259.8 835.2 L238.2 796.3 L221.2 755.0 L209.7 711.7 L202.4 667.5 L199.1 623.1 L199.5 578.9 L201.9 535.6 L205.7 493.6 L210.2 452.7 L214.8 413.0 L217.9 374.2 L219.2 336.0 L219.2 316.0 L219.2 296.0 L219.2 276.0 L219.2 256.0 L219.2 236.0 L219.2 216.0 L219.2 196.0 L219.2 176.0 L219.2 156.0 L219.2 136.0 L219.2 116.0 L219.2 96.0 L219.2 76.0 Z" fill="rgb(18,254,18)" stroke="rgb(18,254,18)" stroke-width="0.6"/>
<path d="M288.9 76.0 L288.9 96.0 L288.9 116.0 L288.9 136.0 L288.9 156.0 L288.9 176.0 L288.9 196.0 L288.9 216.0 L288.9 236.0 L288.9 256.0 L288.9 276.0 L288.9 296.0 L288.9 316.0 L288.9 336.0 L288.1 370.5 L286.3 405.4 L283.4 441.1 L281.0 477.6 L279.5 514.9 L279.3 553.0 L280.8 591.7 L285.5 630.5 L293.6 668.9 L305.1 706.6 L321.2 742.4 L340.8 776.4 L364.3 807.9 L389.8 837.7 L416.2 866.8 L442.8 895.9 L471.6 923.1 L501.3 949.4 L532.9 973.7 L565.8 996.2 L600.3 1016.4 L635.9 1034.8 L672.4 1051.2 L710.0 1065.5 L748.2 1078.0 L787.0 1089.0 L826.3 1097.9 L866.2 1104.8 L906.4 1109.8 L947.0 1113.1 L977.0 1113.1 L1007.0 1113.1 L1037.0 1113.1 L1067.0 1113.1 L1097.0 1113.1 L1127.0 1113.1 L1157.0 1113.1 L1187.0 1113.1 L1217.0 1113.1 L1247.0 1113.1 L1277.0 1113.1 L1307.0 1113.1 L1337.0 1113.1 L1367.0 1113.1 L1397.0 1113.1 L1427.0 1113.1 L1457.0 1113.1 L1487.0 1113.1 L1517.0 1113.1 L1517.0 1169.6 L1487.0 1169.6 L1457.0 1169.6 L1427.0 1169.6 L1397.0 1169.6 L1367.0 1169.6 L1337.0 1169.6 L1307.0 1169.6 L1277.0 1169.6 L1247.0 1169.6 L1217.0 1169.6 L1187.0 1169.6 L1157.0 1169.6 L1127.0 1169.6 L1097.0 1169.6 L1067.0 1169.6 L1037.0 1169.6 L1007.0 1169.6 L977.0 1169.6 L947.0 1169.6 L903.5 1165.8 L860.4 1160.3 L817.7 1152.6 L775.5 1142.8 L734.0 1130.9 L693.2 1117.2 L653.1 1101.7 L614.0 1083.8 L576.1 1064.0 L539.3 1042.1 L504.2 1017.9 L470.6 991.7 L438.9 963.5 L408.3 934.3 L379.9 903.1 L351.6 872.1 L324.4 840.2 L299.4 806.5 L278.8 769.9 L262.4 731.3 L251.0 690.6 L243.4 649.3 L239.6 607.5 L239.2 566.0 L240.8 525.2 L243.6 485.5 L247.2 446.8 L251.1 409.1 L253.6 372.3 L254.7 336.0 L254.7 316.0 L254.7 296.0 L254.7 276.0 L254.7 256.0 L254.7 236.0 L254.7 216.0 L254.7 196.0 L254.7 176.0 L254.7 156.0 L254.7 136.0 L254.7 116.0 L254.7 96.0 L254.7 76.0 Z" fill="rgb(16,253,16)" stroke="rgb(16,253,16)" stroke-width="0.6"/>
<path d="M321.5 76.0 L321.5 96.0 L321.5 116.0 L321.5 136.0 L321.5 156.0 L321.5 176.0 L321.5 196.0 L321.5 216.0 L321.5 236.0 L321.5 256.0 L321.5 276.0 L321.5 296.0 L321.5 316.0 L321.5 336.0 L320.8 368.8 L319.7 401.9 L317.8 435.7 L316.6 470.0 L316.3 505.0 L317.3 540.6 L319.9 576.7 L325.5 612.7 L334.2 648.3 L345.7 683.1 L361.5 716.3 L380.2 747.8 L402.2 777.2 L426.0 805.1 L450.7 832.3 L475.7 859.4 L502.7 884.7 L530.6 909.1 L560.1 931.7 L591.0 952.5 L623.4 971.2 L656.7 988.1 L690.9 1003.2 L726.0 1016.3 L761.7 1027.7 L797.8 1037.7 L834.6 1045.8 L871.7 1052.1 L909.2 1056.5 L947.0 1059.5 L977.0 1059.5 L1007.0 1059.5 L1037.0 1059.5 L1067.0 1059.5 L1097.0 1059.5 L1127.0 1059.5 L1157.0 1059.5 L1187.0 1059.5 L1217.0 1059.5 L1247.0 1059.5 L1277.0 1059.5 L1307.0 1059.5 L1337.0 1059.5 L1367.0 1059.5 L1397.0 1059.5 L1427.0 1059.5 L1457.0 1059.5 L1487.0 1059.5 L1517.0 1059.5 L1517.0 1113.1 L1487.0 1113.1 L1457.0 1113.1 L1427.0 1113.1 L1397.0 1113.1 L1367.0 1113.1 L1337.0 1113.1 L1307.0 1113.1 L1277.0 1113.1 L1247.0 1113.1 L1217.0 1113.1 L1187.0 1113.1 L1157.0 1113.1 L1127.0 1113.1 L1097.0 1113.1 L1067.0 1113.1 L1037.0 1113.1 L1007.0 1113.1 L977.0 1113.1 L947.0 1113.1 L906.4 1109.8 L866.2 1104.8 L826.3 1097.9 L787.0 1089.0 L748.2 1078.0 L710.0 1065.5 L672.4 1051.2 L635.9 1034.8 L600.3 1016.4 L565.8 996.2 L532.9 973.7 L501.3 949.4 L471.6 923.1 L442.8 895.9 L416.2 866.8 L389.8 837.7 L364.3 807.9 L340.8 776.4 L321.2 742.4 L305.1 706.6 L293.6 668.9 L285.5 630.5 L280.8 591.7 L279.3 553.0 L279.5 514.9 L281.0 477.6 L283.4 441.1 L286.3 405.4 L288.1 370.5 L288.9 336.0 L288.9 316.0 L288.9 296.0 L288.9 276.0 L288.9 256.0 L288.9 236.0 L288.9 216.0 L288.9 196.0 L288.9 176.0 L288.9 156.0 L288.9 136.0 L288.9 116.0 L288.9 96.0 L288.9 76.0 Z" fill="rgb(10,250,10)" stroke="rgb(10,250,10)" stroke-width="0.6"/>
<path d="M352.0 76.0 L352.0 96.0 L352.0 116.0 L352.0 136.0 L352.0 156.0 L352.0 176.0 L352.0 196.0 L352.0 216.0 L352.0 236.0 L352.0 256.0 L352.0 276.0 L352.0 296.0 L352.0 316.0 L352.0 336.0 L351.6 367.2 L351.0 398.6 L349.9 430.6 L349.7 463.0 L350.5 495.8 L352.5 529.2 L356.1 562.8 L362.3 596.3 L371.4 629.3 L383.0 661.6 L398.4 692.3 L416.2 721.6 L436.9 749.1 L459.2 775.2 L482.3 800.7 L505.8 826.0 L531.2 849.5 L557.4 872.3 L585.1 893.3 L614.1 912.6 L644.4 929.8 L675.7 945.4 L707.7 959.3 L740.6 971.3 L774.0 981.7 L807.8 990.8 L842.1 998.2 L876.8 1003.8 L911.8 1007.7 L947.0 1010.3 L977.0 1010.3 L1007.0 1010.3 L1037.0 1010.3 L1067.0 1010.3 L1097.0 1010.3 L1127.0 1010.3 L1157.0 1010.3 L1187.0 1010.3 L1217.0 1010.3 L1247.0 1010.3 L1277.0 1010.3 L1307.0 1010.3 L1337.0 1010.3 L1367.0 1010.3 L1397.0 1010.3 L1427.0 1010.3 L1457.0 1010.3 L1487.0 1010.3 L1517.0 1010.3 L1517.0 1059.5 L1487.0 1059.5 L1457.0 1059.5 L1427.0 1059.5 L1397.0 1059.5 L1367.0 1059.5 L1337.0 1059.5 L1307.0 1059.5 L1277.0 1059.5 L1247.0 1059.5 L1217.0 1059.5 L1187.0 1059.5 L1157.0 1059.5 L1127.0 1059.5 L1097.0 1059.5 L1067.0 1059.5 L1037.0 1059.5 L1007.0 1059.5 L977.0 1059.5 L947.0 1059.5 L909.2 1056.5 L871.7 1052.1 L834.6 1045.8 L797.8 1037.7 L761.7 1027.7 L726.0 1016.3 L690.9 1003.2 L656.7 988.1 L623.4 971.2 L591.0 952.5 L560.1 931.7 L530.6 909.1 L502.7 884.7 L475.7 859.4 L450.7 832.3 L426.0 805.1 L402.2 777.2 L380.2 747.8 L361.5 716.3 L345.7 683.1 L334.2 648.3 L325.5 612.7 L319.9 576.7 L317.3 540.6 L316.3 505.0 L316.6 470.0 L317.8 435.7 L319.7 401.9 L320.8 368.8 L321.5 336.0 L321.5 316.0 L321.5 296.0 L321.5 276.0 L321.5 256.0 L321.5 236.0 L321.5 216.0 L321.5 196.0 L321.5 176.0 L321.5 156.0 L321.5 136.0 L321.5 116.0 L321.5 96.0 L321.5 76.0 Z" fill="rgb(0,245,0)" stroke="rgb(0,245,0)" stroke-width="0.6"/>
<path d="M380.2 76.0 L380.2 96.0 L380.2 116.0 L380.2 136.0 L380.2 156.0 L380.2 176.0 L380.2 196.0 L380.2 216.0 L380.2 236.0 L380.2 256.0 L380.2 276.0 L380.2 296.0 L380.2 316.0 L380.2 336.0 L380.2 365.7 L380.7 395.5 L381.3 425.6 L383.1 455.9 L386.2 486.3 L390.5 516.8 L396.1 547.5 L404.2 577.7 L414.6 607.3 L426.9 636.3 L442.3 663.7 L459.5 690.2 L478.6 715.3 L499.1 739.3 L520.2 762.8 L541.9 785.9 L565.4 807.3 L589.5 828.0 L615.1 847.1 L641.8 864.6 L669.8 880.1 L698.5 894.2 L728.0 906.6 L758.1 917.3 L788.8 926.5 L819.8 934.5 L851.2 941.0 L882.9 945.9 L914.9 949.2 L947.0 951.4 L977.0 951.4 L1007.0 951.4 L1037.0 951.4 L1067.0 951.4 L1097.0 951.4 L1127.0 951.4 L1157.0 951.4 L1187.0 951.4 L1217.0 951.4 L1247.0 951.4 L1277.0 951.4 L1307.0 951.4 L1337.0 951.4 L1367.0 951.4 L1397.0 951.4 L1427.0 951.4 L1457.0 951.4 L1487.0 951.4 L1517.0 951.4 L1517.0 1010.3 L1487.0 1010.3 L1457.0 1010.3 L1427.0 1010.3 L1397.0 1010.3 L1367.0 1010.3 L1337.0 1010.3 L1307.0 1010.3 L1277.0 1010.3 L1247.0 1010.3 L1217.0 1010.3 L1187.0 1010.3 L1157.0 1010.3 L1127.0 1010.3 L1097.0 1010.3 L1067.0 1010.3 L1037.0 1010.3 L1007.0 1010.3 L977.0 1010.3 L947.0 1010.3 L911.8 1007.7 L876.8 1003.8 L842.1 998.2 L807.8 990.8 L774.0 981.7 L740.6 971.3 L707.7 959.3 L675.7 945.4 L644.4 929.8 L614.1 912.6 L585.1 893.3 L557.4 872.3 L531.2 849.5 L505.8 826.0 L482.3 800.7 L459.2 775.2 L436.9 749.1 L416.2 721.6 L398.4 692.3 L383.0 661.6 L371.4 629.3 L362.3 596.3 L356.1 562.8 L352.5 529.2 L350.5 495.8 L349.7 463.0 L349.9 430.6 L351.0 398.6 L351.6 367.2 L352.0 336.0 L352.0 316.0 L352.0 296.0 L352.0 276.0 L352.0 256.0 L352.0 236.0 L352.0 216.0 L352.0 196.0 L352.0 176.0 L352.0 156.0 L352.0 136.0 L352.0 116.0 L352.0 96.0 L352.0 76.0 Z" fill="rgb(0,239,0)" stroke="rgb(0,239,0)" stroke-width="0.6"/>
<path d="M406.3 76.0 L406.3 96.0 L406.3 116.0 L406.3 136.0 L406.3 156.0 L406.3 176.0 L406.3 196.0 L406.3 216.0 L406.3 236.0 L406.3 256.0 L406.3 276.0 L406.3 296.0 L406.3 316.0 L406.3 336.0 L406.4 364.3 L407.5 392.7 L408.9 421.2 L411.6 449.8 L415.7 478.4 L420.9 506.9 L427.4 535.5 L436.1 563.5 L446.9 590.8 L459.3 617.5 L474.4 642.9 L490.8 667.4 L508.8 690.9 L528.0 713.3 L547.7 735.3 L568.1 756.8 L590.2 776.6 L612.8 795.9 L636.8 813.6 L661.9 829.8 L688.1 844.1 L715.0 857.0 L742.6 868.4 L770.9 878.0 L799.5 886.4 L828.5 893.7 L857.7 899.5 L887.3 903.8 L917.1 906.7 L947.0 908.6 L977.0 908.6 L1007.0 908.6 L1037.0 908.6 L1067.0 908.6 L1097.0 908.6 L1127.0 908.6 L1157.0 908.6 L1187.0 908.6 L1217.0 908.6 L1247.0 908.6 L1277.0 908.6 L1307.0 908.6 L1337.0 908.6 L1367.0 908.6 L1397.0 908.6 L1427.0 908.6 L1457.0 908.6 L1487.0 908.6 L1517.0 908.6 L1517.0 951.4 L1487.0 951.4 L1457.0 951.4 L1427.0 951.4 L1397.0 951.4 L1367.0 951.4 L1337.0 951.4 L1307.0 951.4 L1277.0 951.4 L1247.0 951.4 L1217.0 951.4 L1187.0 951.4 L1157.0 951.4 L1127.0 951.4 L1097.0 951.4 L1067.0 951.4 L1037.0 951.4 L1007.0 951.4 L977.0 951.4 L947.0 951.4 L914.9 949.2 L882.9 945.9 L851.2 941.0 L819.8 934.5 L788.8 926.5 L758.1 917.3 L728.0 906.6 L698.5 894.2 L669.8 880.1 L641.8 864.6 L615.1 847.1 L589.5 828.0 L565.4 807.3 L541.9 785.9 L520.2 762.8 L499.1 739.3 L478.6 715.3 L459.5 690.2 L442.3 663.7 L426.9 636.3 L414.6 607.3 L404.2 577.7 L396.1 547.5 L390.5 516.8 L386.2 486.3 L383.1 455.9 L381.3 425.6 L380.7 395.5 L380.2 365.7 L380.2 336.0 L380.2 316.0 L380.2 296.0 L380.2 276.0 L380.2 256.0 L380.2 236.0 L380.2 216.0 L380.2 196.0 L380.2 176.0 L380.2 156.0 L380.2 136.0 L380.2 116.0 L380.2 96.0 L380.2 76.0 Z" fill="rgb(0,231,0)" stroke="rgb(0,231,0)" stroke-width="0.6"/>
<path d="M430.4 76.0 L430.4 96.0 L430.4 116.0 L430.4 136.0 L430.4 156.0 L430.4 176.0 L430.4 196.0 L430.4 216.0 L430.4 236.0 L430.4 256.0 L430.4 276.0 L430.4 296.0 L430.4 316.0 L430.4 336.0 L430.7 363.1 L431.9 390.1 L433.5 417.3 L436.5 444.5 L440.9 471.6 L446.3 498.7 L453.0 525.6 L461.7 552.1 L472.4 577.8 L484.6 603.0 L499.1 626.8 L514.9 650.0 L531.9 672.1 L550.1 693.4 L568.7 714.3 L588.1 734.6 L609.1 753.2 L630.7 771.4 L653.5 788.0 L677.3 803.2 L702.2 816.5 L727.7 828.5 L753.9 839.1 L780.6 848.1 L807.7 855.7 L835.1 862.5 L862.8 867.8 L890.7 871.7 L918.8 874.2 L947.0 875.8 L977.0 875.8 L1007.0 875.8 L1037.0 875.8 L1067.0 875.8 L1097.0 875.8 L1127.0 875.8 L1157.0 875.8 L1187.0 875.8 L1217.0 875.8 L1247.0 875.8 L1277.0 875.8 L1307.0 875.8 L1337.0 875.8 L1367.0 875.8 L1397.0 875.8 L1427.0 875.8 L1457.0 875.8 L1487.0 875.8 L1517.0 875.8 L1517.0 908.6 L1487.0 908.6 L1457.0 908.6 L1427.0 908.6 L1397.0 908.6 L1367.0 908.6 L1337.0 908.6 L1307.0 908.6 L1277.0 908.6 L1247.0 908.6 L1217.0 908.6 L1187.0 908.6 L1157.0 908.6 L1127.0 908.6 L1097.0 908.6 L1067.0 908.6 L1037.0 908.6 L1007.0 908.6 L977.0 908.6 L947.0 908.6 L917.1 906.7 L887.3 903.8 L857.7 899.5 L828.5 893.7 L799.5 886.4 L770.9 878.0 L742.6 868.4 L715.0 857.0 L688.1 844.1 L661.9 829.8 L636.8 813.6 L612.8 795.9 L590.2 776.6 L568.1 756.8 L547.7 735.3 L528.0 713.3 L508.8 690.9 L490.8 667.4 L474.4 642.9 L459.3 617.5 L446.9 590.8 L436.1 563.5 L427.4 535.5 L420.9 506.9 L415.7 478.4 L411.6 449.8 L408.9 421.2 L407.5 392.7 L406.4 364.3 L406.3 336.0 L406.3 316.0 L406.3 296.0 L406.3 276.0 L406.3 256.0 L406.3 236.0 L406.3 216.0 L406.3 196.0 L406.3 176.0 L406.3 156.0 L406.3 136.0 L406.3 116.0 L406.3 96.0 L406.3 76.0 Z" fill="rgb(0,223,0)" stroke="rgb(0,223,0)" stroke-width="0.6"/>
<path d="M452.4 76.0 L452.4 96.0 L452.4 116.0 L452.4 136.0 L452.4 156.0 L452.4 176.0 L452.4 196.0 L452.4 216.0 L452.4 236.0 L452.4 256.0 L452.4 276.0 L452.4 296.0 L452.4 316.0 L452.4 336.0 L452.7 361.9 L454.1 387.8 L456.0 413.8 L459.2 439.7 L463.8 465.5 L469.5 491.2 L476.3 516.7 L485.0 541.7 L495.6 566.0 L507.5 589.7 L521.7 612.2 L536.8 634.0 L553.0 655.1 L570.2 675.2 L587.9 695.1 L606.4 714.3 L626.4 731.8 L646.9 749.0 L668.6 764.6 L691.3 778.9 L715.0 791.4 L739.3 802.6 L764.1 812.4 L789.5 820.7 L815.2 827.8 L841.1 834.0 L867.4 838.8 L893.8 842.4 L920.3 844.6 L947.0 846.0 L977.0 846.0 L1007.0 846.0 L1037.0 846.0 L1067.0 846.0 L1097.0 846.0 L1127.0 846.0 L1157.0 846.0 L1187.0 846.0 L1217.0 846.0 L1247.0 846.0 L1277.0 846.0 L1307.0 846.0 L1337.0 846.0 L1367.0 846.0 L1397.0 846.0 L1427.0 846.0 L1457.0 846.0 L1487.0 846.0 L1517.0 846.0 L1517.0 875.8 L1487.0 875.8 L1457.0 875.8 L1427.0 875.8 L1397.0 875.8 L1367.0 875.8 L1337.0 875.8 L1307.0 875.8 L1277.0 875.8 L1247.0 875.8 L1217.0 875.8 L1187.0 875.8 L1157.0 875.8 L1127.0 875.8 L1097.0 875.8 L1067.0 875.8 L1037.0 875.8 L1007.0 875.8 L977.0 875.8 L947.0 875.8 L918.8 874.2 L890.7 871.7 L862.8 867.8 L835.1 862.5 L807.7 855.7 L780.6 848.1 L753.9 839.1 L727.7 828.5 L702.2 816.5 L677.3 803.2 L653.5 788.0 L630.7 771.4 L609.1 753.2 L588.1 734.6 L568.7 714.3 L550.1 693.4 L531.9 672.1 L514.9 650.0 L499.1 626.8 L484.6 603.0 L472.4 577.8 L461.7 552.1 L453.0 525.6 L446.3 498.7 L440.9 471.6 L436.5 444.5 L433.5 417.3 L431.9 390.1 L430.7 363.1 L430.4 336.0 L430.4 316.0 L430.4 296.0 L430.4 276.0 L430.4 256.0 L430.4 236.0 L430.4 216.0 L430.4 196.0 L430.4 176.0 L430.4 156.0 L430.4 136.0 L430.4 116.0 L430.4 96.0 L430.4 76.0 Z" fill="rgb(0,213,0)" stroke="rgb(0,213,0)" stroke-width="0.6"/>
<path d="M472.0 76.0 L472.0 96.0 L472.0 116.0 L472.0 136.0 L472.0 156.0 L472.0 176.0 L472.0 196.0 L472.0 216.0 L472.0 236.0 L472.0 256.0 L472.0 276.0 L472.0 296.0 L472.0 316.0 L472.0 336.0 L472.4 360.9 L474.0 385.7 L476.1 410.6 L479.7 435.3 L484.7 459.9 L490.7 484.3 L497.7 508.5 L506.7 532.0 L517.3 554.9 L529.0 577.3 L542.8 598.5 L557.4 619.1 L572.8 639.0 L589.2 658.2 L605.9 677.1 L623.6 695.2 L642.7 711.8 L662.2 728.0 L682.9 742.7 L704.5 756.1 L727.0 767.8 L750.1 778.2 L773.7 787.4 L797.9 795.0 L822.3 801.5 L846.8 807.2 L871.7 811.7 L896.7 814.8 L921.8 816.8 L947.0 818.0 L977.0 818.0 L1007.0 818.0 L1037.0 818.0 L1067.0 818.0 L1097.0 818.0 L1127.0 818.0 L1157.0 818.0 L1187.0 818.0 L1217.0 818.0 L1247.0 818.0 L1277.0 818.0 L1307.0 818.0 L1337.0 818.0 L1367.0 818.0 L1397.0 818.0 L1427.0 818.0 L1457.0 818.0 L1487.0 818.0 L1517.0 818.0 L1517.0 846.0 L1487.0 846.0 L1457.0 846.0 L1427.0 846.0 L1397.0 846.0 L1367.0 846.0 L1337.0 846.0 L1307.0 846.0 L1277.0 846.0 L1247.0 846.0 L1217.0 846.0 L1187.0 846.0 L1157.0 846.0 L1127.0 846.0 L1097.0 846.0 L1067.0 846.0 L1037.0 846.0 L1007.0 846.0 L977.0 846.0 L947.0 846.0 L920.3 844.6 L893.8 842.4 L867.4 838.8 L841.1 834.0 L815.2 827.8 L789.5 820.7 L764.1 812.4 L739.3 802.6 L715.0 791.4 L691.3 778.9 L668.6 764.6 L646.9 749.0 L626.4 731.8 L606.4 714.3 L587.9 695.1 L570.2 675.2 L553.0 655.1 L536.8 634.0 L521.7 612.2 L507.5 589.7 L495.6 566.0 L485.0 541.7 L476.3 516.7 L469.5 491.2 L463.8 465.5 L459.2 439.7 L456.0 413.8 L454.1 387.8 L452.7 361.9 L452.4 336.0 L452.4 316.0 L452.4 296.0 L452.4 276.0 L452.4 256.0 L452.4 236.0 L452.4 216.0 L452.4 196.0 L452.4 176.0 L452.4 156.0 L452.4 136.0 L452.4 116.0 L452.4 96.0 L452.4 76.0 Z" fill="rgb(0,201,0)" stroke="rgb(0,201,0)" stroke-width="0.6"/>
<path d="M488.9 76.0 L488.9 96.0 L488.9 116.0 L488.9 136.0 L488.9 156.0 L488.9 176.0 L488.9 196.0 L488.9 216.0 L488.9 236.0 L488.9 256.0 L488.9 276.0 L488.9 296.0 L488.9 316.0 L488.9 336.0 L489.3 360.0 L491.0 383.9 L493.2 407.9 L497.0 431.7 L502.0 455.2 L508.1 478.6 L515.1 501.8 L524.0 524.3 L534.4 546.2 L545.9 567.6 L559.3 587.7 L573.4 607.4 L588.2 626.5 L603.9 644.9 L619.9 663.1 L636.9 680.4 L655.3 696.2 L674.1 711.6 L694.0 725.6 L714.7 738.3 L736.4 749.4 L758.6 759.3 L781.2 767.9 L804.4 775.0 L827.7 781.1 L851.3 786.4 L875.0 790.5 L898.9 793.4 L922.9 795.1 L947.0 796.2 L977.0 796.2 L1007.0 796.2 L1037.0 796.2 L1067.0 796.2 L1097.0 796.2 L1127.0 796.2 L1157.0 796.2 L1187.0 796.2 L1217.0 796.2 L1247.0 796.2 L1277.0 796.2 L1307.0 796.2 L1337.0 796.2 L1367.0 796.2 L1397.0 796.2 L1427.0 796.2 L1457.0 796.2 L1487.0 796.2 L1517.0 796.2 L1517.0 818.0 L1487.0 818.0 L1457.0 818.0 L1427.0 818.0 L1397.0 818.0 L1367.0 818.0 L1337.0 818.0 L1307.0 818.0 L1277.0 818.0 L1247.0 818.0 L1217.0 818.0 L1187.0 818.0 L1157.0 818.0 L1127.0 818.0 L1097.0 818.0 L1067.0 818.0 L1037.0 818.0 L1007.0 818.0 L977.0 818.0 L947.0 818.0 L921.8 816.8 L896.7 814.8 L871.7 811.7 L846.8 807.2 L822.3 801.5 L797.9 795.0 L773.7 787.4 L750.1 778.2 L727.0 767.8 L704.5 756.1 L682.9 742.7 L662.2 728.0 L642.7 711.8 L623.6 695.2 L605.9 677.1 L589.2 658.2 L572.8 639.0 L557.4 619.1 L542.8 598.5 L529.0 577.3 L517.3 554.9 L506.7 532.0 L497.7 508.5 L490.7 484.3 L484.7 459.9 L479.7 435.3 L476.1 410.6 L474.0 385.7 L472.4 360.9 L472.0 336.0 L472.0 316.0 L472.0 296.0 L472.0 276.0 L472.0 256.0 L472.0 236.0 L472.0 216.0 L472.0 196.0 L472.0 176.0 L472.0 156.0 L472.0 136.0 L472.0 116.0 L472.0 96.0 L472.0 76.0 Z" fill="rgb(0,189,0)" stroke="rgb(0,189,0)" stroke-width="0.6"/>
<path d="M503.0 76.0 L503.0 96.0 L503.0 116.0 L503.0 136.0 L503.0 156.0 L503.0 176.0 L503.0 196.0 L503.0 216.0 L503.0 236.0 L503.0 256.0 L503.0 276.0 L503.0 296.0 L503.0 316.0 L503.0 336.0 L503.5 359.2 L505.2 382.4 L507.5 405.6 L511.3 428.6 L516.4 451.4 L522.5 473.9 L529.6 496.2 L538.4 517.9 L548.7 538.9 L560.0 559.4 L573.1 578.8 L586.7 597.7 L601.0 616.2 L616.2 633.9 L631.6 651.4 L648.1 668.0 L665.9 683.2 L684.0 698.0 L703.2 711.4 L723.2 723.6 L744.2 734.1 L765.6 743.5 L787.5 751.6 L809.8 758.4 L832.3 764.1 L854.9 769.1 L877.8 772.9 L900.8 775.5 L923.9 777.1 L947.0 778.0 L977.0 778.0 L1007.0 778.0 L1037.0 778.0 L1067.0 778.0 L1097.0 778.0 L1127.0 778.0 L1157.0 778.0 L1187.0 778.0 L1217.0 778.0 L1247.0 778.0 L1277.0 778.0 L1307.0 778.0 L1337.0 778.0 L1367.0 778.0 L1397.0 778.0 L1427.0 778.0 L1457.0 778.0 L1487.0 778.0 L1517.0 778.0 L1517.0 796.2 L1487.0 796.2 L1457.0 796.2 L1427.0 796.2 L1397.0 796.2 L1367.0 796.2 L1337.0 796.2 L1307.0 796.2 L1277.0 796.2 L1247.0 796.2 L1217.0 796.2 L1187.0 796.2 L1157.0 796.2 L1127.0 796.2 L1097.0 796.2 L1067.0 796.2 L1037.0 796.2 L1007.0 796.2 L977.0 796.2 L947.0 796.2 L922.9 795.1 L898.9 793.4 L875.0 790.5 L851.3 786.4 L827.7 781.1 L804.4 775.0 L781.2 767.9 L758.6 759.3 L736.4 749.4 L714.7 738.3 L694.0 725.6 L674.1 711.6 L655.3 696.2 L636.9 680.4 L619.9 663.1 L603.9 644.9 L588.2 626.5 L573.4 607.4 L559.3 587.7 L545.9 567.6 L534.4 546.2 L524.0 524.3 L515.1 501.8 L508.1 478.6 L502.0 455.2 L497.0 431.7 L493.2 407.9 L491.0 383.9 L489.3 360.0 L488.9 336.0 L488.9 316.0 L488.9 296.0 L488.9 276.0 L488.9 256.0 L488.9 236.0 L488.9 216.0 L488.9 196.0 L488.9 176.0 L488.9 156.0 L488.9 136.0 L488.9 116.0 L488.9 96.0 L488.9 76.0 Z" fill="rgb(0,176,0)" stroke="rgb(0,176,0)" stroke-width="0.6"/>
<path d="M514.2 76.0 L514.2 96.0 L514.2 116.0 L514.2 136.0 L514.2 156.0 L514.2 176.0 L514.2 196.0 L514.2 216.0 L514.2 236.0 L514.2 256.0 L514.2 276.0 L514.2 296.0 L514.2 316.0 L514.2 336.0 L514.6 358.7 L516.3 381.3 L518.5 403.9 L522.2 426.3 L527.2 448.5 L533.1 470.5 L539.9 492.3 L548.5 513.4 L558.6 533.9 L569.5 553.9 L582.4 572.8 L595.7 591.3 L609.6 609.2 L624.4 626.5 L639.4 643.6 L655.5 659.7 L672.9 674.5 L690.6 688.9 L709.4 701.9 L728.9 713.7 L749.4 723.9 L770.3 732.9 L791.6 740.8 L813.4 747.2 L835.3 752.7 L857.4 757.5 L879.7 761.1 L902.1 763.6 L924.5 765.1 L947.0 765.9 L977.0 765.9 L1007.0 765.9 L1037.0 765.9 L1067.0 765.9 L1097.0 765.9 L1127.0 765.9 L1157.0 765.9 L1187.0 765.9 L1217.0 765.9 L1247.0 765.9 L1277.0 765.9 L1307.0 765.9 L1337.0 765.9 L1367.0 765.9 L1397.0 765.9 L1427.0 765.9 L1457.0 765.9 L1487.0 765.9 L1517.0 765.9 L1517.0 778.0 L1487.0 778.0 L1457.0 778.0 L1427.0 778.0 L1397.0 778.0 L1367.0 778.0 L1337.0 778.0 L1307.0 778.0 L1277.0 778.0 L1247.0 778.0 L1217.0 778.0 L1187.0 778.0 L1157.0 778.0 L1127.0 778.0 L1097.0 778.0 L1067.0 778.0 L1037.0 778.0 L1007.0 778.0 L977.0 778.0 L947.0 778.0 L923.9 777.1 L900.8 775.5 L877.8 772.9 L854.9 769.1 L832.3 764.1 L809.8 758.4 L787.5 751.6 L765.6 743.5 L744.2 734.1 L723.2 723.6 L703.2 711.4 L684.0 698.0 L665.9 683.2 L648.1 668.0 L631.6 651.4 L616.2 633.9 L601.0 616.2 L586.7 597.7 L573.1 578.8 L560.0 559.4 L548.7 538.9 L538.4 517.9 L529.6 496.2 L522.5 473.9 L516.4 451.4 L511.3 428.6 L507.5 405.6 L505.2 382.4 L503.5 359.2 L503.0 336.0 L503.0 316.0 L503.0 296.0 L503.0 276.0 L503.0 256.0 L503.0 236.0 L503.0 216.0 L503.0 196.0 L503.0 176.0 L503.0 156.0 L503.0 136.0 L503.0 116.0 L503.0 96.0 L503.0 76.0 Z" fill="rgb(0,163,0)" stroke="rgb(0,163,0)" stroke-width="0.6"/>
<path d="M522.2 76.0 L522.2 96.0 L522.2 116.0 L522.2 136.0 L522.2 156.0 L522.2 176.0 L522.2 196.0 L522.2 216.0 L522.2 236.0 L522.2 256.0 L522.2 276.0 L522.2 296.0 L522.2 316.0 L522.2 336.0 L522.6 358.2 L524.1 380.4 L526.2 402.6 L529.7 424.7 L534.4 446.6 L540.0 468.2 L546.5 489.7 L554.8 510.6 L564.5 530.9 L575.2 550.6 L587.8 569.3 L600.8 587.5 L614.6 605.2 L629.1 622.2 L643.9 639.1 L659.8 655.0 L677.0 669.4 L694.4 683.6 L713.0 696.4 L732.2 708.0 L752.4 718.0 L773.0 726.8 L794.0 734.5 L815.5 740.8 L837.1 746.1 L858.8 750.8 L880.7 754.3 L902.8 756.7 L924.9 758.1 L947.0 758.8 L977.0 758.8 L1007.0 758.8 L1037.0 758.8 L1067.0 758.8 L1097.0 758.8 L1127.0 758.8 L1157.0 758.8 L1187.0 758.8 L1217.0 758.8 L1247.0 758.8 L1277.0 758.8 L1307.0 758.8 L1337.0 758.8 L1367.0 758.8 L1397.0 758.8 L1427.0 758.8 L1457.0 758.8 L1487.0 758.8 L1517.0 758.8 L1517.0 765.9 L1487.0 765.9 L1457.0 765.9 L1427.0 765.9 L1397.0 765.9 L1367.0 765.9 L1337.0 765.9 L1307.0 765.9 L1277.0 765.9 L1247.0 765.9 L1217.0 765.9 L1187.0 765.9 L1157.0 765.9 L1127.0 765.9 L1097.0 765.9 L1067.0 765.9 L1037.0 765.9 L1007.0 765.9 L977.0 765.9 L947.0 765.9 L924.5 765.1 L902.1 763.6 L879.7 761.1 L857.4 757.5 L835.3 752.7 L813.4 747.2 L791.6 740.8 L770.3 732.9 L749.4 723.9 L728.9 713.7 L709.4 701.9 L690.6 688.9 L672.9 674.5 L655.5 659.7 L639.4 643.6 L624.4 626.5 L609.6 609.2 L595.7 591.3 L582.4 572.8 L569.5 553.9 L558.6 533.9 L548.5 513.4 L539.9 492.3 L533.1 470.5 L527.2 448.5 L522.2 426.3 L518.5 403.9 L516.3 381.3 L514.6 358.7 L514.2 336.0 L514.2 316.0 L514.2 296.0 L514.2 276.0 L514.2 256.0 L514.2 236.0 L514.2 216.0 L514.2 196.0 L514.2 176.0 L514.2 156.0 L514.2 136.0 L514.2 116.0 L514.2 96.0 L514.2 76.0 Z" fill="rgb(0,149,0)" stroke="rgb(0,149,0)" stroke-width="0.6"/>
<path d="M527.1 76.0 L527.1 96.0 L527.1 116.0 L527.1 136.0 L527.1 156.0 L527.1 176.0 L527.1 196.0 L527.1 216.0 L527.1 236.0 L527.1 256.0 L527.1 276.0 L527.1 296.0 L527.1 316.0 L527.1 336.0 L527.4 358.0 L528.9 379.9 L530.8 401.9 L534.1 423.8 L538.6 445.4 L544.1 466.9 L550.4 488.3 L558.4 509.0 L567.9 529.1 L578.4 548.8 L590.8 567.3 L603.7 585.4 L617.3 603.0 L631.7 619.9 L646.4 636.6 L662.2 652.3 L679.2 666.7 L696.6 680.7 L714.9 693.4 L734.1 704.8 L754.1 714.7 L774.5 723.4 L795.4 731.0 L816.6 737.3 L838.1 742.5 L859.6 747.1 L881.3 750.5 L903.2 752.9 L925.1 754.2 L947.0 755.0 L977.0 755.0 L1007.0 755.0 L1037.0 755.0 L1067.0 755.0 L1097.0 755.0 L1127.0 755.0 L1157.0 755.0 L1187.0 755.0 L1217.0 755.0 L1247.0 755.0 L1277.0 755.0 L1307.0 755.0 L1337.0 755.0 L1367.0 755.0 L1397.0 755.0 L1427.0 755.0 L1457.0 755.0 L1487.0 755.0 L1517.0 755.0 L1517.0 758.8 L1487.0 758.8 L1457.0 758.8 L1427.0 758.8 L1397.0 758.8 L1367.0 758.8 L1337.0 758.8 L1307.0 758.8 L1277.0 758.8 L1247.0 758.8 L1217.0 758.8 L1187.0 758.8 L1157.0 758.8 L1127.0 758.8 L1097.0 758.8 L1067.0 758.8 L1037.0 758.8 L1007.0 758.8 L977.0 758.8 L947.0 758.8 L924.9 758.1 L902.8 756.7 L880.7 754.3 L858.8 750.8 L837.1 746.1 L815.5 740.8 L794.0 734.5 L773.0 726.8 L752.4 718.0 L732.2 708.0 L713.0 696.4 L694.4 683.6 L677.0 669.4 L659.8 655.0 L643.9 639.1 L629.1 622.2 L614.6 605.2 L600.8 587.5 L587.8 569.3 L575.2 550.6 L564.5 530.9 L554.8 510.6 L546.5 489.7 L540.0 468.2 L534.4 446.6 L529.7 424.7 L526.2 402.6 L524.1 380.4 L522.6 358.2 L522.2 336.0 L522.2 316.0 L522.2 296.0 L522.2 276.0 L522.2 256.0 L522.2 236.0 L522.2 216.0 L522.2 196.0 L522.2 176.0 L522.2 156.0 L522.2 136.0 L522.2 116.0 L522.2 96.0 L522.2 76.0 Z" fill="rgb(0,134,0)" stroke="rgb(0,134,0)" stroke-width="0.6"/>
<path d="M528.7 76.0 L528.7 336.0 L529.0 357.9 L530.5 379.8 L532.4 401.7 L535.6 423.4 L540.0 445.0 L545.4 466.5 L551.6 487.8 L559.6 508.5 L569.0 528.6 L579.5 548.2 L591.8 566.7 L604.6 584.8 L618.2 602.3 L632.6 619.1 L647.2 635.8 L662.9 651.5 L680.0 665.8 L697.2 679.8 L715.6 692.4 L734.6 703.8 L754.6 713.6 L775.0 722.4 L795.8 729.9 L817.0 736.1 L838.4 741.3 L859.9 745.9 L881.5 749.3 L903.3 751.7 L925.1 753.0 L947.0 753.7 L977.0 753.7 L1007.0 753.7 L1037.0 753.7 L1067.0 753.7 L1097.0 753.7 L1127.0 753.7 L1157.0 753.7 L1187.0 753.7 L1217.0 753.7 L1247.0 753.7 L1277.0 753.7 L1307.0 753.7 L1337.0 753.7 L1367.0 753.7 L1397.0 753.7 L1427.0 753.7 L1457.0 753.7 L1487.0 753.7 L1517.0 753.7 L1517.0 755.0 L1487.0 755.0 L1457.0 755.0 L1427.0 755.0 L1397.0 755.0 L1367.0 755.0 L1337.0 755.0 L1307.0 755.0 L1277.0 755.0 L1247.0 755.0 L1217.0 755.0 L1187.0 755.0 L1157.0 755.0 L1127.0 755.0 L1097.0 755.0 L1067.0 755.0 L1037.0 755.0 L1007.0 755.0 L977.0 755.0 L947.0 755.0 L925.1 754.2 L903.2 752.9 L881.3 750.5 L859.6 747.1 L838.1 742.5 L816.6 737.3 L795.4 731.0 L774.5 723.4 L754.1 714.7 L734.1 704.8 L714.9 693.4 L696.6 680.7 L679.2 666.7 L662.2 652.3 L646.4 636.6 L631.7 619.9 L617.3 603.0 L603.7 585.4 L590.8 567.3 L578.4 548.8 L567.9 529.1 L558.4 509.0 L550.4 488.3 L544.1 466.9 L538.6 445.4 L534.1 423.8 L530.8 401.9 L528.9 379.9 L527.4 358.0 L527.1 336.0 L527.1 316.0 L527.1 296.0 L527.1 276.0 L527.1 256.0 L527.1 236.0 L527.1 216.0 L527.1 196.0 L527.1 176.0 L527.1 156.0 L527.1 136.0 L527.1 116.0 L527.1 96.0 L527.1 76.0 Z" fill="rgb(0,119,0)" stroke="rgb(0,119,0)" stroke-width="0.6"/>
<defs><linearGradient id="hdr" gradientUnits="userSpaceOnUse" x1="330" y1="420" x2="760" y2="900"><stop offset="0" stop-color="#003c00" stop-opacity="0"/><stop offset="0.55" stop-color="#003c00" stop-opacity="0.10"/><stop offset="1" stop-color="#003c00" stop-opacity="0.16"/></linearGradient></defs>
<rect x="288" y="109.8" width="1193" height="747.2" fill="url(#hdr)"/>
<g fill="none" stroke="#063c06" stroke-width="1.15" stroke-opacity="0.92"><path d="M527.1 76.0 C527.1 79.3 527.1 89.3 527.1 96.0 C527.1 102.7 527.1 109.3 527.1 116.0 C527.1 122.7 527.1 129.3 527.1 136.0 C527.1 142.7 527.1 149.3 527.1 156.0 C527.1 162.7 527.1 169.3 527.1 176.0 C527.1 182.7 527.1 189.3 527.1 196.0 C527.1 202.7 527.1 209.3 527.1 216.0 C527.1 222.7 527.1 229.3 527.1 236.0 C527.1 242.7 527.1 249.3 527.1 256.0 C527.1 262.7 527.1 269.3 527.1 276.0 C527.1 282.7 527.1 289.3 527.1 296.0 C527.1 302.7 527.1 309.3 527.1 316.0 C527.1 322.7 527.0 329.0 527.1 336.0 C527.1 343.0 527.1 350.7 527.4 358.0 C527.7 365.3 528.3 372.6 528.9 379.9 C529.5 387.3 530.0 394.6 530.8 401.9 C531.7 409.2 532.8 416.5 534.1 423.8 C535.4 431.0 537.0 438.2 538.6 445.4 C540.3 452.6 542.1 459.8 544.1 466.9 C546.0 474.1 548.0 481.2 550.4 488.3 C552.8 495.3 555.5 502.2 558.4 509.0 C561.3 515.8 564.6 522.5 567.9 529.1 C571.3 535.8 574.6 542.4 578.4 548.8 C582.2 555.2 586.6 561.2 590.8 567.3 C595.0 573.4 599.3 579.5 603.7 585.4 C608.1 591.4 612.6 597.2 617.3 603.0 C622.0 608.7 626.9 614.3 631.7 619.9 C636.6 625.5 641.3 631.2 646.4 636.6 C651.5 642.0 656.7 647.3 662.2 652.3 C667.6 657.3 673.5 661.9 679.2 666.7 C685.0 671.4 690.6 676.3 696.6 680.7 C702.5 685.2 708.7 689.3 714.9 693.4 C721.2 697.4 727.5 701.3 734.1 704.8 C740.6 708.4 747.3 711.6 754.1 714.7 C760.8 717.8 767.6 720.7 774.5 723.4 C781.4 726.2 788.3 728.7 795.4 731.0 C802.4 733.3 809.5 735.3 816.6 737.3 C823.7 739.2 830.9 740.9 838.1 742.5 C845.2 744.1 852.4 745.7 859.6 747.1 C866.8 748.4 874.1 749.6 881.3 750.5 C888.6 751.5 895.9 752.3 903.2 752.9 C910.5 753.5 917.8 753.9 925.1 754.2 C932.4 754.6 938.3 754.8 947.0 755.0 C955.7 755.1 967.0 755.0 977.0 755.0 C987.0 755.0 997.0 755.0 1007.0 755.0 C1017.0 755.0 1027.0 755.0 1037.0 755.0 C1047.0 755.0 1057.0 755.0 1067.0 755.0 C1077.0 755.0 1087.0 755.0 1097.0 755.0 C1107.0 755.0 1117.0 755.0 1127.0 755.0 C1137.0 755.0 1147.0 755.0 1157.0 755.0 C1167.0 755.0 1177.0 755.0 1187.0 755.0 C1197.0 755.0 1207.0 755.0 1217.0 755.0 C1227.0 755.0 1237.0 755.0 1247.0 755.0 C1257.0 755.0 1267.0 755.0 1277.0 755.0 C1287.0 755.0 1297.0 755.0 1307.0 755.0 C1317.0 755.0 1327.0 755.0 1337.0 755.0 C1347.0 755.0 1357.0 755.0 1367.0 755.0 C1377.0 755.0 1387.0 755.0 1397.0 755.0 C1407.0 755.0 1417.0 755.0 1427.0 755.0 C1437.0 755.0 1447.0 755.0 1457.0 755.0 C1467.0 755.0 1477.0 755.0 1487.0 755.0 C1497.0 755.0 1512.0 755.0 1517.0 755.0"/><path d="M522.2 76.0 C522.2 79.3 522.2 89.3 522.2 96.0 C522.2 102.7 522.2 109.3 522.2 116.0 C522.2 122.7 522.2 129.3 522.2 136.0 C522.2 142.7 522.2 149.3 522.2 156.0 C522.2 162.7 522.2 169.3 522.2 176.0 C522.2 182.7 522.2 189.3 522.2 196.0 C522.2 202.7 522.2 209.3 522.2 216.0 C522.2 222.7 522.2 229.3 522.2 236.0 C522.2 242.7 522.2 249.3 522.2 256.0 C522.2 262.7 522.2 269.3 522.2 276.0 C522.2 282.7 522.2 289.3 522.2 296.0 C522.2 302.7 522.2 309.3 522.2 316.0 C522.2 322.7 522.1 329.0 522.2 336.0 C522.3 343.0 522.3 350.8 522.6 358.2 C522.9 365.7 523.5 373.0 524.1 380.4 C524.8 387.8 525.3 395.3 526.2 402.6 C527.1 410.0 528.3 417.4 529.7 424.7 C531.0 432.0 532.6 439.3 534.4 446.6 C536.1 453.8 538.0 461.0 540.0 468.2 C542.0 475.4 544.1 482.7 546.5 489.7 C549.0 496.8 551.8 503.8 554.8 510.6 C557.8 517.5 561.1 524.2 564.5 530.9 C568.0 537.5 571.4 544.2 575.2 550.6 C579.1 557.0 583.5 563.1 587.8 569.3 C592.0 575.4 596.4 581.5 600.8 587.5 C605.3 593.5 609.9 599.4 614.6 605.2 C619.3 611.0 624.2 616.6 629.1 622.2 C634.0 627.9 638.8 633.6 643.9 639.1 C649.0 644.5 654.3 649.9 659.8 655.0 C665.3 660.0 671.2 664.7 677.0 669.4 C682.8 674.2 688.4 679.1 694.4 683.6 C700.4 688.1 706.7 692.3 713.0 696.4 C719.3 700.5 725.7 704.4 732.2 708.0 C738.8 711.6 745.6 714.8 752.4 718.0 C759.2 721.1 766.1 724.1 773.0 726.8 C779.9 729.6 787.0 732.2 794.0 734.5 C801.1 736.8 808.3 738.9 815.5 740.8 C822.6 742.8 829.9 744.5 837.1 746.1 C844.3 747.8 851.6 749.4 858.8 750.8 C866.1 752.2 873.4 753.3 880.7 754.3 C888.1 755.3 895.4 756.1 902.8 756.7 C910.1 757.4 917.5 757.8 924.9 758.1 C932.2 758.5 938.3 758.7 947.0 758.8 C955.7 759.0 967.0 758.8 977.0 758.8 C987.0 758.8 997.0 758.8 1007.0 758.8 C1017.0 758.8 1027.0 758.8 1037.0 758.8 C1047.0 758.8 1057.0 758.8 1067.0 758.8 C1077.0 758.8 1087.0 758.8 1097.0 758.8 C1107.0 758.8 1117.0 758.8 1127.0 758.8 C1137.0 758.8 1147.0 758.8 1157.0 758.8 C1167.0 758.8 1177.0 758.8 1187.0 758.8 C1197.0 758.8 1207.0 758.8 1217.0 758.8 C1227.0 758.8 1237.0 758.8 1247.0 758.8 C1257.0 758.8 1267.0 758.8 1277.0 758.8 C1287.0 758.8 1297.0 758.8 1307.0 758.8 C1317.0 758.8 1327.0 758.8 1337.0 758.8 C1347.0 758.8 1357.0 758.8 1367.0 758.8 C1377.0 758.8 1387.0 758.8 1397.0 758.8 C1407.0 758.8 1417.0 758.8 1427.0 758.8 C1437.0 758.8 1447.0 758.8 1457.0 758.8 C1467.0 758.8 1477.0 758.8 1487.0 758.8 C1497.0 758.8 1512.0 758.8 1517.0 758.8"/><path d="M514.2 76.0 C514.2 79.3 514.2 89.3 514.2 96.0 C514.2 102.7 514.2 109.3 514.2 116.0 C514.2 122.7 514.2 129.3 514.2 136.0 C514.2 142.7 514.2 149.3 514.2 156.0 C514.2 162.7 514.2 169.3 514.2 176.0 C514.2 182.7 514.2 189.3 514.2 196.0 C514.2 202.7 514.2 209.3 514.2 216.0 C514.2 222.7 514.2 229.3 514.2 236.0 C514.2 242.7 514.2 249.3 514.2 256.0 C514.2 262.7 514.2 269.3 514.2 276.0 C514.2 282.7 514.2 289.3 514.2 296.0 C514.2 302.7 514.2 309.3 514.2 316.0 C514.2 322.7 514.1 328.9 514.2 336.0 C514.2 343.1 514.2 351.1 514.6 358.7 C514.9 366.2 515.6 373.7 516.3 381.3 C516.9 388.8 517.5 396.4 518.5 403.9 C519.5 411.4 520.7 418.9 522.2 426.3 C523.6 433.7 525.3 441.1 527.2 448.5 C529.0 455.9 531.0 463.2 533.1 470.5 C535.2 477.8 537.4 485.1 539.9 492.3 C542.5 499.4 545.4 506.5 548.5 513.4 C551.6 520.4 555.1 527.2 558.6 533.9 C562.1 540.7 565.6 547.4 569.5 553.9 C573.5 560.4 578.0 566.6 582.4 572.8 C586.7 579.0 591.1 585.2 595.7 591.3 C600.2 597.3 604.8 603.3 609.6 609.2 C614.4 615.1 619.4 620.8 624.4 626.5 C629.3 632.2 634.2 638.0 639.4 643.6 C644.6 649.1 649.9 654.6 655.5 659.7 C661.1 664.9 667.1 669.6 672.9 674.5 C678.8 679.3 684.5 684.3 690.6 688.9 C696.7 693.5 703.0 697.8 709.4 701.9 C715.8 706.0 722.3 710.0 728.9 713.7 C735.6 717.4 742.5 720.7 749.4 723.9 C756.3 727.1 763.2 730.1 770.3 732.9 C777.3 735.7 784.4 738.4 791.6 740.8 C798.8 743.2 806.1 745.3 813.4 747.2 C820.7 749.2 828.0 751.0 835.3 752.7 C842.7 754.4 850.0 756.1 857.4 757.5 C864.8 758.9 872.2 760.1 879.7 761.1 C887.1 762.1 894.6 763.0 902.1 763.6 C909.5 764.3 917.0 764.7 924.5 765.1 C932.0 765.4 938.3 765.7 947.0 765.9 C955.7 766.0 967.0 765.9 977.0 765.9 C987.0 765.9 997.0 765.9 1007.0 765.9 C1017.0 765.9 1027.0 765.9 1037.0 765.9 C1047.0 765.9 1057.0 765.9 1067.0 765.9 C1077.0 765.9 1087.0 765.9 1097.0 765.9 C1107.0 765.9 1117.0 765.9 1127.0 765.9 C1137.0 765.9 1147.0 765.9 1157.0 765.9 C1167.0 765.9 1177.0 765.9 1187.0 765.9 C1197.0 765.9 1207.0 765.9 1217.0 765.9 C1227.0 765.9 1237.0 765.9 1247.0 765.9 C1257.0 765.9 1267.0 765.9 1277.0 765.9 C1287.0 765.9 1297.0 765.9 1307.0 765.9 C1317.0 765.9 1327.0 765.9 1337.0 765.9 C1347.0 765.9 1357.0 765.9 1367.0 765.9 C1377.0 765.9 1387.0 765.9 1397.0 765.9 C1407.0 765.9 1417.0 765.9 1427.0 765.9 C1437.0 765.9 1447.0 765.9 1457.0 765.9 C1467.0 765.9 1477.0 765.9 1487.0 765.9 C1497.0 765.9 1512.0 765.9 1517.0 765.9"/><path d="M503.0 76.0 C503.0 79.3 503.0 89.3 503.0 96.0 C503.0 102.7 503.0 109.3 503.0 116.0 C503.0 122.7 503.0 129.3 503.0 136.0 C503.0 142.7 503.0 149.3 503.0 156.0 C503.0 162.7 503.0 169.3 503.0 176.0 C503.0 182.7 503.0 189.3 503.0 196.0 C503.0 202.7 503.0 209.3 503.0 216.0 C503.0 222.7 503.0 229.3 503.0 236.0 C503.0 242.7 503.0 249.3 503.0 256.0 C503.0 262.7 503.0 269.3 503.0 276.0 C503.0 282.7 503.0 289.3 503.0 296.0 C503.0 302.7 503.0 309.3 503.0 316.0 C503.0 322.7 503.0 328.8 503.0 336.0 C503.1 343.2 503.1 351.5 503.5 359.2 C503.8 367.0 504.5 374.7 505.2 382.4 C505.9 390.2 506.5 397.9 507.5 405.6 C508.5 413.3 509.8 421.0 511.3 428.6 C512.8 436.2 514.6 443.8 516.4 451.4 C518.3 458.9 520.4 466.4 522.5 473.9 C524.7 481.4 526.9 488.9 529.6 496.2 C532.2 503.6 535.2 510.8 538.4 517.9 C541.6 525.0 545.1 532.0 548.7 538.9 C552.3 545.9 555.9 552.8 560.0 559.4 C564.0 566.1 568.6 572.4 573.1 578.8 C577.6 585.2 582.1 591.5 586.7 597.7 C591.4 604.0 596.1 610.1 601.0 616.2 C605.9 622.2 611.1 628.0 616.2 633.9 C621.3 639.7 626.3 645.7 631.6 651.4 C636.9 657.1 642.4 662.7 648.1 668.0 C653.8 673.3 659.9 678.2 665.9 683.2 C671.9 688.2 677.8 693.3 684.0 698.0 C690.2 702.7 696.7 707.1 703.2 711.4 C709.8 715.7 716.4 719.8 723.2 723.6 C730.1 727.3 737.1 730.8 744.2 734.1 C751.2 737.4 758.4 740.5 765.6 743.5 C772.8 746.4 780.1 749.1 787.5 751.6 C794.8 754.1 802.3 756.3 809.8 758.4 C817.2 760.4 824.8 762.3 832.3 764.1 C839.8 765.9 847.4 767.6 854.9 769.1 C862.5 770.5 870.2 771.8 877.8 772.9 C885.4 774.0 893.1 774.8 900.8 775.5 C908.5 776.2 916.2 776.7 923.9 777.1 C931.6 777.5 938.1 777.8 947.0 778.0 C955.9 778.1 967.0 778.0 977.0 778.0 C987.0 778.0 997.0 778.0 1007.0 778.0 C1017.0 778.0 1027.0 778.0 1037.0 778.0 C1047.0 778.0 1057.0 778.0 1067.0 778.0 C1077.0 778.0 1087.0 778.0 1097.0 778.0 C1107.0 778.0 1117.0 778.0 1127.0 778.0 C1137.0 778.0 1147.0 778.0 1157.0 778.0 C1167.0 778.0 1177.0 778.0 1187.0 778.0 C1197.0 778.0 1207.0 778.0 1217.0 778.0 C1227.0 778.0 1237.0 778.0 1247.0 778.0 C1257.0 778.0 1267.0 778.0 1277.0 778.0 C1287.0 778.0 1297.0 778.0 1307.0 778.0 C1317.0 778.0 1327.0 778.0 1337.0 778.0 C1347.0 778.0 1357.0 778.0 1367.0 778.0 C1377.0 778.0 1387.0 778.0 1397.0 778.0 C1407.0 778.0 1417.0 778.0 1427.0 778.0 C1437.0 778.0 1447.0 778.0 1457.0 778.0 C1467.0 778.0 1477.0 778.0 1487.0 778.0 C1497.0 778.0 1512.0 778.0 1517.0 778.0"/><path d="M488.9 76.0 C488.9 79.3 488.9 89.3 488.9 96.0 C488.9 102.7 488.9 109.3 488.9 116.0 C488.9 122.7 488.9 129.3 488.9 136.0 C488.9 142.7 488.9 149.3 488.9 156.0 C488.9 162.7 488.9 169.3 488.9 176.0 C488.9 182.7 488.9 189.3 488.9 196.0 C488.9 202.7 488.9 209.3 488.9 216.0 C488.9 222.7 488.9 229.3 488.9 236.0 C488.9 242.7 488.9 249.3 488.9 256.0 C488.9 262.7 488.9 269.3 488.9 276.0 C488.9 282.7 488.9 289.3 488.9 296.0 C488.9 302.7 488.9 309.3 488.9 316.0 C488.9 322.7 488.8 328.7 488.9 336.0 C489.0 343.3 489.0 352.0 489.3 360.0 C489.7 368.0 490.3 375.9 491.0 383.9 C491.6 391.9 492.2 399.9 493.2 407.9 C494.2 415.8 495.5 423.8 497.0 431.7 C498.4 439.6 500.1 447.4 502.0 455.2 C503.8 463.1 505.9 470.9 508.1 478.6 C510.3 486.4 512.5 494.2 515.1 501.8 C517.8 509.4 520.7 516.9 524.0 524.3 C527.2 531.8 530.8 539.0 534.4 546.2 C538.1 553.4 541.8 560.6 545.9 567.6 C550.1 574.5 554.8 581.1 559.3 587.7 C563.9 594.4 568.6 601.0 573.4 607.4 C578.2 613.9 583.1 620.3 588.2 626.5 C593.3 632.8 598.6 638.8 603.9 644.9 C609.2 651.0 614.4 657.2 619.9 663.1 C625.4 669.0 631.0 674.8 636.9 680.4 C642.8 685.9 649.2 690.9 655.3 696.2 C661.5 701.4 667.7 706.7 674.1 711.6 C680.5 716.5 687.2 721.2 694.0 725.6 C700.8 730.1 707.6 734.4 714.7 738.3 C721.8 742.3 729.1 745.9 736.4 749.4 C743.7 752.9 751.1 756.2 758.6 759.3 C766.0 762.3 773.6 765.2 781.2 767.9 C788.9 770.5 796.6 772.8 804.4 775.0 C812.1 777.2 819.9 779.2 827.7 781.1 C835.6 783.0 843.4 784.8 851.3 786.4 C859.1 788.0 867.1 789.3 875.0 790.5 C883.0 791.7 890.9 792.6 898.9 793.4 C906.9 794.2 914.9 794.7 922.9 795.1 C930.9 795.6 938.0 796.0 947.0 796.2 C956.0 796.3 967.0 796.2 977.0 796.2 C987.0 796.2 997.0 796.2 1007.0 796.2 C1017.0 796.2 1027.0 796.2 1037.0 796.2 C1047.0 796.2 1057.0 796.2 1067.0 796.2 C1077.0 796.2 1087.0 796.2 1097.0 796.2 C1107.0 796.2 1117.0 796.2 1127.0 796.2 C1137.0 796.2 1147.0 796.2 1157.0 796.2 C1167.0 796.2 1177.0 796.2 1187.0 796.2 C1197.0 796.2 1207.0 796.2 1217.0 796.2 C1227.0 796.2 1237.0 796.2 1247.0 796.2 C1257.0 796.2 1267.0 796.2 1277.0 796.2 C1287.0 796.2 1297.0 796.2 1307.0 796.2 C1317.0 796.2 1327.0 796.2 1337.0 796.2 C1347.0 796.2 1357.0 796.2 1367.0 796.2 C1377.0 796.2 1387.0 796.2 1397.0 796.2 C1407.0 796.2 1417.0 796.2 1427.0 796.2 C1437.0 796.2 1447.0 796.2 1457.0 796.2 C1467.0 796.2 1477.0 796.2 1487.0 796.2 C1497.0 796.2 1512.0 796.2 1517.0 796.2"/><path d="M472.0 76.0 C472.0 79.3 472.0 89.3 472.0 96.0 C472.0 102.7 472.0 109.3 472.0 116.0 C472.0 122.7 472.0 129.3 472.0 136.0 C472.0 142.7 472.0 149.3 472.0 156.0 C472.0 162.7 472.0 169.3 472.0 176.0 C472.0 182.7 472.0 189.3 472.0 196.0 C472.0 202.7 472.0 209.3 472.0 216.0 C472.0 222.7 472.0 229.3 472.0 236.0 C472.0 242.7 472.0 249.3 472.0 256.0 C472.0 262.7 472.0 269.3 472.0 276.0 C472.0 282.7 472.0 289.3 472.0 296.0 C472.0 302.7 472.0 309.3 472.0 316.0 C472.0 322.7 471.9 328.5 472.0 336.0 C472.0 343.5 472.0 352.6 472.4 360.9 C472.7 369.2 473.3 377.4 474.0 385.7 C474.6 394.0 475.1 402.3 476.1 410.6 C477.1 418.8 478.3 427.1 479.7 435.3 C481.1 443.5 482.8 451.7 484.7 459.9 C486.5 468.0 488.5 476.2 490.7 484.3 C492.9 492.4 495.1 500.5 497.7 508.5 C500.4 516.4 503.4 524.3 506.7 532.0 C509.9 539.8 513.6 547.4 517.3 554.9 C521.0 562.5 524.8 570.1 529.0 577.3 C533.3 584.6 538.1 591.5 542.8 598.5 C547.6 605.4 552.4 612.3 557.4 619.1 C562.4 625.8 567.5 632.5 572.8 639.0 C578.1 645.5 583.7 651.8 589.2 658.2 C594.7 664.5 600.2 670.9 605.9 677.1 C611.6 683.3 617.5 689.4 623.6 695.2 C629.7 701.0 636.3 706.3 642.7 711.8 C649.1 717.2 655.5 722.8 662.2 728.0 C668.9 733.1 675.9 738.0 682.9 742.7 C689.9 747.4 697.1 751.9 704.5 756.1 C711.8 760.3 719.4 764.1 727.0 767.8 C734.6 771.5 742.3 775.0 750.1 778.2 C757.9 781.5 765.8 784.6 773.7 787.4 C781.7 790.2 789.8 792.6 797.9 795.0 C805.9 797.4 814.1 799.5 822.3 801.5 C830.4 803.6 838.6 805.5 846.8 807.2 C855.1 808.9 863.4 810.4 871.7 811.7 C880.0 812.9 888.3 814.0 896.7 814.8 C905.0 815.7 913.4 816.3 921.8 816.8 C930.2 817.3 937.8 817.8 947.0 818.0 C956.2 818.2 967.0 818.0 977.0 818.0 C987.0 818.0 997.0 818.0 1007.0 818.0 C1017.0 818.0 1027.0 818.0 1037.0 818.0 C1047.0 818.0 1057.0 818.0 1067.0 818.0 C1077.0 818.0 1087.0 818.0 1097.0 818.0 C1107.0 818.0 1117.0 818.0 1127.0 818.0 C1137.0 818.0 1147.0 818.0 1157.0 818.0 C1167.0 818.0 1177.0 818.0 1187.0 818.0 C1197.0 818.0 1207.0 818.0 1217.0 818.0 C1227.0 818.0 1237.0 818.0 1247.0 818.0 C1257.0 818.0 1267.0 818.0 1277.0 818.0 C1287.0 818.0 1297.0 818.0 1307.0 818.0 C1317.0 818.0 1327.0 818.0 1337.0 818.0 C1347.0 818.0 1357.0 818.0 1367.0 818.0 C1377.0 818.0 1387.0 818.0 1397.0 818.0 C1407.0 818.0 1417.0 818.0 1427.0 818.0 C1437.0 818.0 1447.0 818.0 1457.0 818.0 C1467.0 818.0 1477.0 818.0 1487.0 818.0 C1497.0 818.0 1512.0 818.0 1517.0 818.0"/><path d="M452.4 76.0 C452.4 79.3 452.4 89.3 452.4 96.0 C452.4 102.7 452.4 109.3 452.4 116.0 C452.4 122.7 452.4 129.3 452.4 136.0 C452.4 142.7 452.4 149.3 452.4 156.0 C452.4 162.7 452.4 169.3 452.4 176.0 C452.4 182.7 452.4 189.3 452.4 196.0 C452.4 202.7 452.4 209.3 452.4 216.0 C452.4 222.7 452.4 229.3 452.4 236.0 C452.4 242.7 452.4 249.3 452.4 256.0 C452.4 262.7 452.4 269.3 452.4 276.0 C452.4 282.7 452.4 289.3 452.4 296.0 C452.4 302.7 452.4 309.3 452.4 316.0 C452.4 322.7 452.4 328.3 452.4 336.0 C452.5 343.7 452.4 353.3 452.7 361.9 C453.0 370.5 453.6 379.2 454.1 387.8 C454.6 396.5 455.1 405.1 456.0 413.8 C456.8 422.4 457.9 431.1 459.2 439.7 C460.5 448.3 462.1 456.9 463.8 465.5 C465.5 474.0 467.4 482.6 469.5 491.2 C471.6 499.7 473.7 508.3 476.3 516.7 C478.9 525.1 481.8 533.5 485.0 541.7 C488.3 549.9 491.9 558.0 495.6 566.0 C499.4 574.0 503.2 582.0 507.5 589.7 C511.9 597.4 516.8 604.8 521.7 612.2 C526.6 619.6 531.6 626.9 536.8 634.0 C542.0 641.2 547.4 648.2 553.0 655.1 C558.6 661.9 564.4 668.6 570.2 675.2 C576.0 681.9 581.9 688.6 587.9 695.1 C593.9 701.6 600.0 708.1 606.4 714.3 C612.8 720.4 619.7 726.1 626.4 731.8 C633.2 737.6 639.9 743.5 646.9 749.0 C654.0 754.5 661.3 759.6 668.6 764.6 C676.0 769.6 683.6 774.4 691.3 778.9 C699.0 783.4 707.0 787.4 715.0 791.4 C723.0 795.3 731.1 799.1 739.3 802.6 C747.4 806.1 755.7 809.4 764.1 812.4 C772.5 815.4 781.0 818.1 789.5 820.7 C798.0 823.3 806.6 825.6 815.2 827.8 C823.8 830.0 832.5 832.2 841.1 834.0 C849.8 835.8 858.6 837.5 867.4 838.8 C876.1 840.2 884.9 841.4 893.8 842.4 C902.6 843.3 911.5 844.0 920.3 844.6 C929.2 845.2 937.6 845.8 947.0 846.0 C956.4 846.2 967.0 846.0 977.0 846.0 C987.0 846.0 997.0 846.0 1007.0 846.0 C1017.0 846.0 1027.0 846.0 1037.0 846.0 C1047.0 846.0 1057.0 846.0 1067.0 846.0 C1077.0 846.0 1087.0 846.0 1097.0 846.0 C1107.0 846.0 1117.0 846.0 1127.0 846.0 C1137.0 846.0 1147.0 846.0 1157.0 846.0 C1167.0 846.0 1177.0 846.0 1187.0 846.0 C1197.0 846.0 1207.0 846.0 1217.0 846.0 C1227.0 846.0 1237.0 846.0 1247.0 846.0 C1257.0 846.0 1267.0 846.0 1277.0 846.0 C1287.0 846.0 1297.0 846.0 1307.0 846.0 C1317.0 846.0 1327.0 846.0 1337.0 846.0 C1347.0 846.0 1357.0 846.0 1367.0 846.0 C1377.0 846.0 1387.0 846.0 1397.0 846.0 C1407.0 846.0 1417.0 846.0 1427.0 846.0 C1437.0 846.0 1447.0 846.0 1457.0 846.0 C1467.0 846.0 1477.0 846.0 1487.0 846.0 C1497.0 846.0 1512.0 846.0 1517.0 846.0"/><path d="M430.4 76.0 C430.4 79.3 430.4 89.3 430.4 96.0 C430.4 102.7 430.4 109.3 430.4 116.0 C430.4 122.7 430.4 129.3 430.4 136.0 C430.4 142.7 430.4 149.3 430.4 156.0 C430.4 162.7 430.4 169.3 430.4 176.0 C430.4 182.7 430.4 189.3 430.4 196.0 C430.4 202.7 430.4 209.3 430.4 216.0 C430.4 222.7 430.4 229.3 430.4 236.0 C430.4 242.7 430.4 249.3 430.4 256.0 C430.4 262.7 430.4 269.3 430.4 276.0 C430.4 282.7 430.4 289.3 430.4 296.0 C430.4 302.7 430.4 309.3 430.4 316.0 C430.4 322.7 430.4 328.2 430.4 336.0 C430.5 343.8 430.4 354.0 430.7 363.1 C430.9 372.1 431.4 381.1 431.9 390.1 C432.4 399.2 432.7 408.3 433.5 417.3 C434.3 426.4 435.3 435.5 436.5 444.5 C437.7 453.6 439.2 462.6 440.9 471.6 C442.5 480.6 444.3 489.7 446.3 498.7 C448.4 507.7 450.4 516.7 453.0 525.6 C455.5 534.5 458.5 543.4 461.7 552.1 C464.9 560.8 468.6 569.3 472.4 577.8 C476.2 586.3 480.1 594.8 484.6 603.0 C489.0 611.2 494.1 619.0 499.1 626.8 C504.2 634.7 509.4 642.4 514.9 650.0 C520.3 657.5 526.0 664.9 531.9 672.1 C537.8 679.4 543.9 686.4 550.1 693.4 C556.2 700.4 562.4 707.4 568.7 714.3 C575.0 721.2 581.4 728.1 588.1 734.6 C594.9 741.0 602.1 747.1 609.1 753.2 C616.2 759.4 623.3 765.6 630.7 771.4 C638.1 777.2 645.7 782.7 653.5 788.0 C661.2 793.3 669.2 798.4 677.3 803.2 C685.4 807.9 693.8 812.3 702.2 816.5 C710.6 820.7 719.1 824.8 727.7 828.5 C736.3 832.3 745.1 835.9 753.9 839.1 C762.7 842.4 771.6 845.3 780.6 848.1 C789.6 850.8 798.7 853.3 807.7 855.7 C816.8 858.1 825.9 860.5 835.1 862.5 C844.3 864.5 853.5 866.2 862.8 867.8 C872.0 869.3 881.4 870.6 890.7 871.7 C900.0 872.8 909.4 873.5 918.8 874.2 C928.2 874.9 937.3 875.6 947.0 875.8 C956.7 876.1 967.0 875.8 977.0 875.8 C987.0 875.8 997.0 875.8 1007.0 875.8 C1017.0 875.8 1027.0 875.8 1037.0 875.8 C1047.0 875.8 1057.0 875.8 1067.0 875.8 C1077.0 875.8 1087.0 875.8 1097.0 875.8 C1107.0 875.8 1117.0 875.8 1127.0 875.8 C1137.0 875.8 1147.0 875.8 1157.0 875.8 C1167.0 875.8 1177.0 875.8 1187.0 875.8 C1197.0 875.8 1207.0 875.8 1217.0 875.8 C1227.0 875.8 1237.0 875.8 1247.0 875.8 C1257.0 875.8 1267.0 875.8 1277.0 875.8 C1287.0 875.8 1297.0 875.8 1307.0 875.8 C1317.0 875.8 1327.0 875.8 1337.0 875.8 C1347.0 875.8 1357.0 875.8 1367.0 875.8 C1377.0 875.8 1387.0 875.8 1397.0 875.8 C1407.0 875.8 1417.0 875.8 1427.0 875.8 C1437.0 875.8 1447.0 875.8 1457.0 875.8 C1467.0 875.8 1477.0 875.8 1487.0 875.8 C1497.0 875.8 1512.0 875.8 1517.0 875.8"/><path d="M406.3 76.0 C406.3 79.3 406.3 89.3 406.3 96.0 C406.3 102.7 406.3 109.3 406.3 116.0 C406.3 122.7 406.3 129.3 406.3 136.0 C406.3 142.7 406.3 149.3 406.3 156.0 C406.3 162.7 406.3 169.3 406.3 176.0 C406.3 182.7 406.3 189.3 406.3 196.0 C406.3 202.7 406.3 209.3 406.3 216.0 C406.3 222.7 406.3 229.3 406.3 236.0 C406.3 242.7 406.3 249.3 406.3 256.0 C406.3 262.7 406.3 269.3 406.3 276.0 C406.3 282.7 406.3 289.3 406.3 296.0 C406.3 302.7 406.3 309.3 406.3 316.0 C406.3 322.7 406.2 327.9 406.3 336.0 C406.3 344.1 406.2 354.9 406.4 364.3 C406.7 373.8 407.1 383.2 407.5 392.7 C407.9 402.2 408.2 411.7 408.9 421.2 C409.6 430.7 410.5 440.3 411.6 449.8 C412.7 459.3 414.1 468.8 415.7 478.4 C417.2 487.9 419.0 497.4 420.9 506.9 C422.9 516.5 424.9 526.0 427.4 535.5 C429.9 544.9 432.8 554.2 436.1 563.5 C439.3 572.7 443.0 581.8 446.9 590.8 C450.8 599.8 454.8 608.9 459.3 617.5 C463.9 626.2 469.2 634.6 474.4 642.9 C479.7 651.2 485.1 659.4 490.8 667.4 C496.6 675.4 502.6 683.2 508.8 690.9 C515.0 698.5 521.5 705.9 528.0 713.3 C534.4 720.7 541.0 728.1 547.7 735.3 C554.4 742.6 561.0 749.9 568.1 756.8 C575.2 763.7 582.7 770.1 590.2 776.6 C597.6 783.2 605.1 789.8 612.8 795.9 C620.6 802.1 628.7 808.0 636.8 813.6 C645.0 819.2 653.4 824.7 661.9 829.8 C670.5 834.9 679.3 839.6 688.1 844.1 C697.0 848.6 706.0 852.9 715.0 857.0 C724.1 861.0 733.3 864.8 742.6 868.4 C752.0 871.9 761.4 875.0 770.9 878.0 C780.4 881.0 789.9 883.8 799.5 886.4 C809.1 889.0 818.8 891.5 828.5 893.7 C838.2 895.9 847.9 897.8 857.7 899.5 C867.6 901.2 877.4 902.6 887.3 903.8 C897.2 905.0 907.1 905.9 917.1 906.7 C927.0 907.5 937.0 908.3 947.0 908.6 C957.0 908.9 967.0 908.6 977.0 908.6 C987.0 908.6 997.0 908.6 1007.0 908.6 C1017.0 908.6 1027.0 908.6 1037.0 908.6 C1047.0 908.6 1057.0 908.6 1067.0 908.6 C1077.0 908.6 1087.0 908.6 1097.0 908.6 C1107.0 908.6 1117.0 908.6 1127.0 908.6 C1137.0 908.6 1147.0 908.6 1157.0 908.6 C1167.0 908.6 1177.0 908.6 1187.0 908.6 C1197.0 908.6 1207.0 908.6 1217.0 908.6 C1227.0 908.6 1237.0 908.6 1247.0 908.6 C1257.0 908.6 1267.0 908.6 1277.0 908.6 C1287.0 908.6 1297.0 908.6 1307.0 908.6 C1317.0 908.6 1327.0 908.6 1337.0 908.6 C1347.0 908.6 1357.0 908.6 1367.0 908.6 C1377.0 908.6 1387.0 908.6 1397.0 908.6 C1407.0 908.6 1417.0 908.6 1427.0 908.6 C1437.0 908.6 1447.0 908.6 1457.0 908.6 C1467.0 908.6 1477.0 908.6 1487.0 908.6 C1497.0 908.6 1512.0 908.6 1517.0 908.6"/><path d="M380.2 76.0 C380.2 79.3 380.2 89.3 380.2 96.0 C380.2 102.7 380.2 109.3 380.2 116.0 C380.2 122.7 380.2 129.3 380.2 136.0 C380.2 142.7 380.2 149.3 380.2 156.0 C380.2 162.7 380.2 169.3 380.2 176.0 C380.2 182.7 380.2 189.3 380.2 196.0 C380.2 202.7 380.2 209.3 380.2 216.0 C380.2 222.7 380.2 229.3 380.2 236.0 C380.2 242.7 380.2 249.3 380.2 256.0 C380.2 262.7 380.2 269.3 380.2 276.0 C380.2 282.7 380.2 289.3 380.2 296.0 C380.2 302.7 380.2 309.3 380.2 316.0 C380.2 322.7 380.2 327.7 380.2 336.0 C380.2 344.3 380.1 355.8 380.2 365.7 C380.3 375.6 380.5 385.5 380.7 395.5 C380.9 405.5 380.9 415.5 381.3 425.6 C381.7 435.6 382.3 445.7 383.1 455.9 C384.0 466.0 385.0 476.1 386.2 486.3 C387.4 496.4 388.8 506.6 390.5 516.8 C392.2 527.0 393.9 537.3 396.1 547.5 C398.4 557.6 401.1 567.7 404.2 577.7 C407.2 587.7 410.8 597.5 414.6 607.3 C418.4 617.0 422.3 626.9 426.9 636.3 C431.6 645.7 436.9 654.8 442.3 663.7 C447.7 672.7 453.4 681.6 459.5 690.2 C465.5 698.8 472.0 707.2 478.6 715.3 C485.2 723.5 492.1 731.4 499.1 739.3 C506.0 747.2 513.0 755.1 520.2 762.8 C527.3 770.6 534.4 778.5 541.9 785.9 C549.4 793.3 557.4 800.2 565.4 807.3 C573.3 814.3 581.2 821.4 589.5 828.0 C597.8 834.7 606.4 841.0 615.1 847.1 C623.8 853.2 632.7 859.1 641.8 864.6 C650.9 870.1 660.3 875.2 669.8 880.1 C679.2 885.1 688.8 889.8 698.5 894.2 C708.2 898.6 718.0 902.8 728.0 906.6 C737.9 910.5 748.0 913.9 758.1 917.3 C768.3 920.6 778.5 923.6 788.8 926.5 C799.1 929.3 809.4 932.1 819.8 934.5 C830.2 937.0 840.7 939.1 851.2 941.0 C861.7 942.9 872.3 944.5 882.9 945.9 C893.5 947.2 904.2 948.3 914.9 949.2 C925.5 950.1 936.6 951.0 947.0 951.4 C957.4 951.7 967.0 951.4 977.0 951.4 C987.0 951.4 997.0 951.4 1007.0 951.4 C1017.0 951.4 1027.0 951.4 1037.0 951.4 C1047.0 951.4 1057.0 951.4 1067.0 951.4 C1077.0 951.4 1087.0 951.4 1097.0 951.4 C1107.0 951.4 1117.0 951.4 1127.0 951.4 C1137.0 951.4 1147.0 951.4 1157.0 951.4 C1167.0 951.4 1177.0 951.4 1187.0 951.4 C1197.0 951.4 1207.0 951.4 1217.0 951.4 C1227.0 951.4 1237.0 951.4 1247.0 951.4 C1257.0 951.4 1267.0 951.4 1277.0 951.4 C1287.0 951.4 1297.0 951.4 1307.0 951.4 C1317.0 951.4 1327.0 951.4 1337.0 951.4 C1347.0 951.4 1357.0 951.4 1367.0 951.4 C1377.0 951.4 1387.0 951.4 1397.0 951.4 C1407.0 951.4 1417.0 951.4 1427.0 951.4 C1437.0 951.4 1447.0 951.4 1457.0 951.4 C1467.0 951.4 1477.0 951.4 1487.0 951.4 C1497.0 951.4 1512.0 951.4 1517.0 951.4"/><path d="M352.0 76.0 C352.0 79.3 352.0 89.3 352.0 96.0 C352.0 102.7 352.0 109.3 352.0 116.0 C352.0 122.7 352.0 129.3 352.0 136.0 C352.0 142.7 352.0 149.3 352.0 156.0 C352.0 162.7 352.0 169.3 352.0 176.0 C352.0 182.7 352.0 189.3 352.0 196.0 C352.0 202.7 352.0 209.3 352.0 216.0 C352.0 222.7 352.0 229.3 352.0 236.0 C352.0 242.7 352.0 249.3 352.0 256.0 C352.0 262.7 352.0 269.3 352.0 276.0 C352.0 282.7 352.0 289.3 352.0 296.0 C352.0 302.7 352.0 309.3 352.0 316.0 C352.0 322.7 352.1 327.5 352.0 336.0 C351.9 344.5 351.7 356.8 351.6 367.2 C351.4 377.6 351.3 388.1 351.0 398.6 C350.7 409.2 350.1 419.8 349.9 430.6 C349.7 441.3 349.6 452.1 349.7 463.0 C349.8 473.8 350.0 484.8 350.5 495.8 C351.0 506.9 351.6 518.0 352.5 529.2 C353.5 540.3 354.4 551.6 356.1 562.8 C357.7 574.0 359.8 585.2 362.3 596.3 C364.9 607.4 367.9 618.4 371.4 629.3 C374.8 640.2 378.5 651.1 383.0 661.6 C387.5 672.1 392.8 682.3 398.4 692.3 C403.9 702.3 409.8 712.2 416.2 721.6 C422.7 731.1 429.7 740.1 436.9 749.1 C444.0 758.0 451.7 766.6 459.2 775.2 C466.8 783.8 474.5 792.3 482.3 800.7 C490.0 809.2 497.6 817.9 505.8 826.0 C513.9 834.1 522.6 841.8 531.2 849.5 C539.8 857.2 548.4 865.0 557.4 872.3 C566.4 879.6 575.7 886.5 585.1 893.3 C594.6 900.0 604.2 906.5 614.1 912.6 C624.0 918.7 634.2 924.3 644.4 929.8 C654.7 935.3 665.1 940.5 675.7 945.4 C686.2 950.4 696.9 955.0 707.7 959.3 C718.5 963.6 729.5 967.6 740.6 971.3 C751.6 975.0 762.8 978.5 774.0 981.7 C785.2 985.0 796.5 988.1 807.8 990.8 C819.2 993.6 830.6 996.0 842.1 998.2 C853.6 1000.4 865.2 1002.2 876.8 1003.8 C888.4 1005.4 900.1 1006.6 911.8 1007.7 C923.5 1008.8 936.1 1009.9 947.0 1010.3 C957.9 1010.8 967.0 1010.3 977.0 1010.3 C987.0 1010.3 997.0 1010.3 1007.0 1010.3 C1017.0 1010.3 1027.0 1010.3 1037.0 1010.3 C1047.0 1010.3 1057.0 1010.3 1067.0 1010.3 C1077.0 1010.3 1087.0 1010.3 1097.0 1010.3 C1107.0 1010.3 1117.0 1010.3 1127.0 1010.3 C1137.0 1010.3 1147.0 1010.3 1157.0 1010.3 C1167.0 1010.3 1177.0 1010.3 1187.0 1010.3 C1197.0 1010.3 1207.0 1010.3 1217.0 1010.3 C1227.0 1010.3 1237.0 1010.3 1247.0 1010.3 C1257.0 1010.3 1267.0 1010.3 1277.0 1010.3 C1287.0 1010.3 1297.0 1010.3 1307.0 1010.3 C1317.0 1010.3 1327.0 1010.3 1337.0 1010.3 C1347.0 1010.3 1357.0 1010.3 1367.0 1010.3 C1377.0 1010.3 1387.0 1010.3 1397.0 1010.3 C1407.0 1010.3 1417.0 1010.3 1427.0 1010.3 C1437.0 1010.3 1447.0 1010.3 1457.0 1010.3 C1467.0 1010.3 1477.0 1010.3 1487.0 1010.3 C1497.0 1010.3 1512.0 1010.3 1517.0 1010.3"/><path d="M321.5 76.0 C321.5 79.3 321.5 89.3 321.5 96.0 C321.5 102.7 321.5 109.3 321.5 116.0 C321.5 122.7 321.5 129.3 321.5 136.0 C321.5 142.7 321.5 149.3 321.5 156.0 C321.5 162.7 321.5 169.3 321.5 176.0 C321.5 182.7 321.5 189.3 321.5 196.0 C321.5 202.7 321.5 209.3 321.5 216.0 C321.5 222.7 321.5 229.3 321.5 236.0 C321.5 242.7 321.5 249.3 321.5 256.0 C321.5 262.7 321.5 269.3 321.5 276.0 C321.5 282.7 321.5 289.3 321.5 296.0 C321.5 302.7 321.5 309.3 321.5 316.0 C321.5 322.7 321.6 327.2 321.5 336.0 C321.4 344.8 321.1 357.8 320.8 368.8 C320.5 379.8 320.2 390.8 319.7 401.9 C319.2 413.1 318.3 424.3 317.8 435.7 C317.3 447.0 316.8 458.4 316.6 470.0 C316.3 481.6 316.2 493.2 316.3 505.0 C316.5 516.8 316.7 528.6 317.3 540.6 C317.9 552.5 318.6 564.7 319.9 576.7 C321.3 588.7 323.1 600.8 325.5 612.7 C327.9 624.6 330.8 636.5 334.2 648.3 C337.5 660.0 341.2 671.8 345.7 683.1 C350.3 694.5 355.7 705.5 361.5 716.3 C367.2 727.0 373.4 737.6 380.2 747.8 C387.0 758.0 394.6 767.6 402.2 777.2 C409.8 786.7 417.9 795.9 426.0 805.1 C434.1 814.3 442.4 823.3 450.7 832.3 C459.0 841.4 467.0 850.7 475.7 859.4 C484.4 868.1 493.6 876.4 502.7 884.7 C511.9 892.9 521.0 901.3 530.6 909.1 C540.2 917.0 550.1 924.5 560.1 931.7 C570.2 938.9 580.5 946.0 591.0 952.5 C601.6 959.1 612.4 965.3 623.4 971.2 C634.3 977.1 645.4 982.8 656.7 988.1 C667.9 993.5 679.3 998.5 690.9 1003.2 C702.4 1007.9 714.2 1012.2 726.0 1016.3 C737.7 1020.4 749.7 1024.2 761.7 1027.7 C773.6 1031.3 785.7 1034.7 797.8 1037.7 C810.0 1040.7 822.3 1043.4 834.6 1045.8 C846.9 1048.2 859.3 1050.3 871.7 1052.1 C884.2 1053.8 896.7 1055.3 909.2 1056.5 C921.8 1057.7 935.7 1059.0 947.0 1059.5 C958.3 1059.9 967.0 1059.5 977.0 1059.5 C987.0 1059.5 997.0 1059.5 1007.0 1059.5 C1017.0 1059.5 1027.0 1059.5 1037.0 1059.5 C1047.0 1059.5 1057.0 1059.5 1067.0 1059.5 C1077.0 1059.5 1087.0 1059.5 1097.0 1059.5 C1107.0 1059.5 1117.0 1059.5 1127.0 1059.5 C1137.0 1059.5 1147.0 1059.5 1157.0 1059.5 C1167.0 1059.5 1177.0 1059.5 1187.0 1059.5 C1197.0 1059.5 1207.0 1059.5 1217.0 1059.5 C1227.0 1059.5 1237.0 1059.5 1247.0 1059.5 C1257.0 1059.5 1267.0 1059.5 1277.0 1059.5 C1287.0 1059.5 1297.0 1059.5 1307.0 1059.5 C1317.0 1059.5 1327.0 1059.5 1337.0 1059.5 C1347.0 1059.5 1357.0 1059.5 1367.0 1059.5 C1377.0 1059.5 1387.0 1059.5 1397.0 1059.5 C1407.0 1059.5 1417.0 1059.5 1427.0 1059.5 C1437.0 1059.5 1447.0 1059.5 1457.0 1059.5 C1467.0 1059.5 1477.0 1059.5 1487.0 1059.5 C1497.0 1059.5 1512.0 1059.5 1517.0 1059.5"/><path d="M288.9 76.0 C288.9 79.3 288.9 89.3 288.9 96.0 C288.9 102.7 288.9 109.3 288.9 116.0 C288.9 122.7 288.9 129.3 288.9 136.0 C288.9 142.7 288.9 149.3 288.9 156.0 C288.9 162.7 288.9 169.3 288.9 176.0 C288.9 182.7 288.9 189.3 288.9 196.0 C288.9 202.7 288.9 209.3 288.9 216.0 C288.9 222.7 288.9 229.3 288.9 236.0 C288.9 242.7 288.9 249.3 288.9 256.0 C288.9 262.7 288.9 269.3 288.9 276.0 C288.9 282.7 288.9 289.3 288.9 296.0 C288.9 302.7 288.9 309.3 288.9 316.0 C288.9 322.7 289.1 326.9 288.9 336.0 C288.8 345.1 288.5 359.0 288.1 370.5 C287.6 382.1 287.0 393.7 286.3 405.4 C285.5 417.2 284.3 429.1 283.4 441.1 C282.5 453.1 281.6 465.3 281.0 477.6 C280.3 489.9 279.8 502.3 279.5 514.9 C279.2 527.4 279.0 540.1 279.3 553.0 C279.5 565.8 279.7 578.8 280.8 591.7 C281.8 604.7 283.3 617.7 285.5 630.5 C287.6 643.4 290.3 656.2 293.6 668.9 C296.9 681.6 300.5 694.4 305.1 706.6 C309.7 718.9 315.2 730.8 321.2 742.4 C327.1 754.0 333.6 765.5 340.8 776.4 C348.0 787.3 356.1 797.7 364.3 807.9 C372.4 818.1 381.1 827.9 389.8 837.7 C398.4 847.6 407.3 857.1 416.2 866.8 C425.0 876.5 433.6 886.6 442.8 895.9 C452.1 905.3 461.8 914.2 471.6 923.1 C481.3 932.0 491.1 941.0 501.3 949.4 C511.5 957.9 522.1 965.9 532.9 973.7 C543.6 981.5 554.6 989.1 565.8 996.2 C577.1 1003.3 588.6 1010.0 600.3 1016.4 C612.0 1022.9 623.8 1029.0 635.9 1034.8 C647.9 1040.6 660.1 1046.1 672.4 1051.2 C684.8 1056.4 697.3 1061.1 710.0 1065.5 C722.6 1070.0 735.3 1074.1 748.2 1078.0 C761.0 1081.9 773.9 1085.6 787.0 1089.0 C800.0 1092.3 813.1 1095.3 826.3 1097.9 C839.5 1100.5 852.8 1102.8 866.2 1104.8 C879.5 1106.8 893.0 1108.4 906.4 1109.8 C919.9 1111.2 935.2 1112.6 947.0 1113.1 C958.8 1113.7 967.0 1113.1 977.0 1113.1 C987.0 1113.1 997.0 1113.1 1007.0 1113.1 C1017.0 1113.1 1027.0 1113.1 1037.0 1113.1 C1047.0 1113.1 1057.0 1113.1 1067.0 1113.1 C1077.0 1113.1 1087.0 1113.1 1097.0 1113.1 C1107.0 1113.1 1117.0 1113.1 1127.0 1113.1 C1137.0 1113.1 1147.0 1113.1 1157.0 1113.1 C1167.0 1113.1 1177.0 1113.1 1187.0 1113.1 C1197.0 1113.1 1207.0 1113.1 1217.0 1113.1 C1227.0 1113.1 1237.0 1113.1 1247.0 1113.1 C1257.0 1113.1 1267.0 1113.1 1277.0 1113.1 C1287.0 1113.1 1297.0 1113.1 1307.0 1113.1 C1317.0 1113.1 1327.0 1113.1 1337.0 1113.1 C1347.0 1113.1 1357.0 1113.1 1367.0 1113.1 C1377.0 1113.1 1387.0 1113.1 1397.0 1113.1 C1407.0 1113.1 1417.0 1113.1 1427.0 1113.1 C1437.0 1113.1 1447.0 1113.1 1457.0 1113.1 C1467.0 1113.1 1477.0 1113.1 1487.0 1113.1 C1497.0 1113.1 1512.0 1113.1 1517.0 1113.1"/><path d="M254.7 76.0 C254.7 79.3 254.7 89.3 254.7 96.0 C254.7 102.7 254.7 109.3 254.7 116.0 C254.7 122.7 254.7 129.3 254.7 136.0 C254.7 142.7 254.7 149.3 254.7 156.0 C254.7 162.7 254.7 169.3 254.7 176.0 C254.7 182.7 254.7 189.3 254.7 196.0 C254.7 202.7 254.7 209.3 254.7 216.0 C254.7 222.7 254.7 229.3 254.7 236.0 C254.7 242.7 254.7 249.3 254.7 256.0 C254.7 262.7 254.7 269.3 254.7 276.0 C254.7 282.7 254.7 289.3 254.7 296.0 C254.7 302.7 254.7 309.3 254.7 316.0 C254.7 322.7 254.9 326.6 254.7 336.0 C254.6 345.4 254.2 360.1 253.6 372.3 C253.0 384.5 252.2 396.7 251.1 409.1 C250.0 421.6 248.5 434.1 247.2 446.8 C246.0 459.6 244.6 472.5 243.6 485.5 C242.5 498.6 241.5 511.8 240.8 525.2 C240.1 538.6 239.4 552.2 239.2 566.0 C239.1 579.7 238.9 593.7 239.6 607.5 C240.3 621.4 241.5 635.4 243.4 649.3 C245.3 663.1 247.8 677.0 251.0 690.6 C254.2 704.3 257.7 718.1 262.4 731.3 C267.0 744.5 272.7 757.4 278.8 769.9 C285.0 782.4 291.9 794.8 299.4 806.5 C307.0 818.2 315.7 829.2 324.4 840.2 C333.1 851.1 342.4 861.6 351.6 872.1 C360.9 882.6 370.5 892.7 379.9 903.1 C389.3 913.5 398.5 924.2 408.3 934.3 C418.1 944.4 428.5 953.9 438.9 963.5 C449.3 973.1 459.7 982.7 470.6 991.7 C481.5 1000.8 492.7 1009.5 504.2 1017.9 C515.6 1026.3 527.3 1034.4 539.3 1042.1 C551.3 1049.8 563.6 1057.0 576.1 1064.0 C588.5 1070.9 601.2 1077.6 614.0 1083.8 C626.9 1090.1 639.9 1096.1 653.1 1101.7 C666.3 1107.2 679.7 1112.4 693.2 1117.2 C706.7 1122.1 720.3 1126.6 734.0 1130.9 C747.7 1135.1 761.6 1139.2 775.5 1142.8 C789.4 1146.4 803.5 1149.7 817.7 1152.6 C831.8 1155.5 846.1 1158.1 860.4 1160.3 C874.7 1162.4 889.1 1164.2 903.5 1165.8 C918.0 1167.3 934.8 1168.9 947.0 1169.6 C959.2 1170.2 967.0 1169.6 977.0 1169.6 C987.0 1169.6 997.0 1169.6 1007.0 1169.6 C1017.0 1169.6 1027.0 1169.6 1037.0 1169.6 C1047.0 1169.6 1057.0 1169.6 1067.0 1169.6 C1077.0 1169.6 1087.0 1169.6 1097.0 1169.6 C1107.0 1169.6 1117.0 1169.6 1127.0 1169.6 C1137.0 1169.6 1147.0 1169.6 1157.0 1169.6 C1167.0 1169.6 1177.0 1169.6 1187.0 1169.6 C1197.0 1169.6 1207.0 1169.6 1217.0 1169.6 C1227.0 1169.6 1237.0 1169.6 1247.0 1169.6 C1257.0 1169.6 1267.0 1169.6 1277.0 1169.6 C1287.0 1169.6 1297.0 1169.6 1307.0 1169.6 C1317.0 1169.6 1327.0 1169.6 1337.0 1169.6 C1347.0 1169.6 1357.0 1169.6 1367.0 1169.6 C1377.0 1169.6 1387.0 1169.6 1397.0 1169.6 C1407.0 1169.6 1417.0 1169.6 1427.0 1169.6 C1437.0 1169.6 1447.0 1169.6 1457.0 1169.6 C1467.0 1169.6 1477.0 1169.6 1487.0 1169.6 C1497.0 1169.6 1512.0 1169.6 1517.0 1169.6"/><path d="M219.2 76.0 C219.2 79.3 219.2 89.3 219.2 96.0 C219.2 102.7 219.2 109.3 219.2 116.0 C219.2 122.7 219.2 129.3 219.2 136.0 C219.2 142.7 219.2 149.3 219.2 156.0 C219.2 162.7 219.2 169.3 219.2 176.0 C219.2 182.7 219.2 189.3 219.2 196.0 C219.2 202.7 219.2 209.3 219.2 216.0 C219.2 222.7 219.2 229.3 219.2 236.0 C219.2 242.7 219.2 249.3 219.2 256.0 C219.2 262.7 219.2 269.3 219.2 276.0 C219.2 282.7 219.2 289.3 219.2 296.0 C219.2 302.7 219.2 309.3 219.2 316.0 C219.2 322.7 219.4 326.3 219.2 336.0 C219.0 345.7 218.6 361.4 217.9 374.2 C217.1 387.0 216.1 399.9 214.8 413.0 C213.6 426.0 211.7 439.3 210.2 452.7 C208.7 466.1 207.1 479.7 205.7 493.6 C204.3 507.4 203.0 521.4 201.9 535.6 C200.9 549.9 200.0 564.3 199.5 578.9 C199.1 593.4 198.7 608.3 199.1 623.1 C199.6 637.9 200.6 652.8 202.4 667.5 C204.1 682.3 206.6 697.1 209.7 711.7 C212.9 726.2 216.5 740.9 221.2 755.0 C226.0 769.1 231.8 782.9 238.2 796.3 C244.7 809.6 251.8 822.8 259.8 835.2 C267.9 847.7 277.1 859.4 286.3 871.0 C295.5 882.7 305.4 893.8 315.2 904.9 C325.0 916.0 335.2 926.8 345.2 937.8 C355.2 948.8 364.8 960.3 375.2 971.0 C385.6 981.7 396.6 991.9 407.6 1002.1 C418.6 1012.3 429.6 1022.5 441.2 1032.2 C452.7 1041.9 464.6 1051.2 476.7 1060.1 C488.9 1069.1 501.3 1077.8 514.0 1086.0 C526.7 1094.2 539.7 1101.9 552.9 1109.4 C566.1 1116.9 579.5 1124.0 593.2 1130.8 C606.8 1137.5 620.6 1143.9 634.6 1149.9 C648.6 1155.9 662.8 1161.4 677.1 1166.7 C691.4 1171.9 705.9 1176.8 720.5 1181.4 C735.1 1186.0 749.7 1190.4 764.6 1194.3 C779.4 1198.2 794.3 1201.8 809.4 1204.9 C824.4 1208.1 839.6 1210.9 854.8 1213.3 C870.0 1215.7 885.3 1217.6 900.7 1219.3 C916.1 1221.0 934.3 1222.8 947.0 1223.5 C959.7 1224.2 967.0 1223.5 977.0 1223.5 C987.0 1223.5 997.0 1223.5 1007.0 1223.5 C1017.0 1223.5 1027.0 1223.5 1037.0 1223.5 C1047.0 1223.5 1057.0 1223.5 1067.0 1223.5 C1077.0 1223.5 1087.0 1223.5 1097.0 1223.5 C1107.0 1223.5 1117.0 1223.5 1127.0 1223.5 C1137.0 1223.5 1147.0 1223.5 1157.0 1223.5 C1167.0 1223.5 1177.0 1223.5 1187.0 1223.5 C1197.0 1223.5 1207.0 1223.5 1217.0 1223.5 C1227.0 1223.5 1237.0 1223.5 1247.0 1223.5 C1257.0 1223.5 1267.0 1223.5 1277.0 1223.5 C1287.0 1223.5 1297.0 1223.5 1307.0 1223.5 C1317.0 1223.5 1327.0 1223.5 1337.0 1223.5 C1347.0 1223.5 1357.0 1223.5 1367.0 1223.5 C1377.0 1223.5 1387.0 1223.5 1397.0 1223.5 C1407.0 1223.5 1417.0 1223.5 1427.0 1223.5 C1437.0 1223.5 1447.0 1223.5 1457.0 1223.5 C1467.0 1223.5 1477.0 1223.5 1487.0 1223.5 C1497.0 1223.5 1512.0 1223.5 1517.0 1223.5"/><path d="M182.7 76.0 C182.7 79.3 182.7 89.3 182.7 96.0 C182.7 102.7 182.7 109.3 182.7 116.0 C182.7 122.7 182.7 129.3 182.7 136.0 C182.7 142.7 182.7 149.3 182.7 156.0 C182.7 162.7 182.7 169.3 182.7 176.0 C182.7 182.7 182.7 189.3 182.7 196.0 C182.7 202.7 182.7 209.3 182.7 216.0 C182.7 222.7 182.7 229.3 182.7 236.0 C182.7 242.7 182.7 249.3 182.7 256.0 C182.7 262.7 182.7 269.3 182.7 276.0 C182.7 282.7 182.7 289.3 182.7 296.0 C182.7 302.7 182.7 309.3 182.7 316.0 C182.7 322.7 182.9 326.0 182.7 336.0 C182.4 346.0 182.0 362.7 181.1 376.1 C180.3 389.6 179.1 403.1 177.6 416.9 C176.1 430.6 174.0 444.6 172.2 458.7 C170.4 472.9 168.4 487.2 166.7 501.9 C165.0 516.5 163.4 531.3 162.0 546.3 C160.7 561.4 159.4 576.7 158.7 592.1 C157.9 607.6 157.3 623.4 157.5 639.1 C157.8 654.7 158.6 670.6 160.2 686.3 C161.8 702.0 164.2 717.7 167.3 733.3 C170.4 748.8 174.0 764.4 178.9 779.5 C183.8 794.5 189.8 809.2 196.5 823.4 C203.2 837.6 210.7 851.6 219.1 864.8 C227.6 878.1 237.3 890.5 247.1 902.8 C256.8 915.1 267.3 926.9 277.7 938.6 C288.1 950.4 299.0 961.8 309.6 973.4 C320.1 985.1 330.3 997.3 341.3 1008.7 C352.3 1020.1 363.8 1031.0 375.4 1041.8 C387.0 1052.7 398.7 1063.5 410.9 1073.8 C423.1 1084.1 435.7 1094.0 448.5 1103.6 C461.4 1113.1 474.5 1122.4 487.9 1131.2 C501.3 1139.9 515.2 1148.2 529.1 1156.1 C543.1 1164.1 557.3 1171.7 571.7 1179.0 C586.1 1186.2 600.7 1193.1 615.5 1199.5 C630.3 1205.9 645.4 1211.9 660.6 1217.5 C675.7 1223.2 691.1 1228.4 706.6 1233.4 C722.0 1238.3 737.6 1243.0 753.3 1247.3 C769.0 1251.5 784.9 1255.3 800.9 1258.7 C816.8 1262.1 832.9 1265.2 849.1 1267.8 C865.2 1270.4 881.5 1272.5 897.8 1274.4 C914.1 1276.3 933.8 1278.2 947.0 1279.0 C960.2 1279.8 967.0 1279.0 977.0 1279.0 C987.0 1279.0 997.0 1279.0 1007.0 1279.0 C1017.0 1279.0 1027.0 1279.0 1037.0 1279.0 C1047.0 1279.0 1057.0 1279.0 1067.0 1279.0 C1077.0 1279.0 1087.0 1279.0 1097.0 1279.0 C1107.0 1279.0 1117.0 1279.0 1127.0 1279.0 C1137.0 1279.0 1147.0 1279.0 1157.0 1279.0 C1167.0 1279.0 1177.0 1279.0 1187.0 1279.0 C1197.0 1279.0 1207.0 1279.0 1217.0 1279.0 C1227.0 1279.0 1237.0 1279.0 1247.0 1279.0 C1257.0 1279.0 1267.0 1279.0 1277.0 1279.0 C1287.0 1279.0 1297.0 1279.0 1307.0 1279.0 C1317.0 1279.0 1327.0 1279.0 1337.0 1279.0 C1347.0 1279.0 1357.0 1279.0 1367.0 1279.0 C1377.0 1279.0 1387.0 1279.0 1397.0 1279.0 C1407.0 1279.0 1417.0 1279.0 1427.0 1279.0 C1437.0 1279.0 1447.0 1279.0 1457.0 1279.0 C1467.0 1279.0 1477.0 1279.0 1487.0 1279.0 C1497.0 1279.0 1512.0 1279.0 1517.0 1279.0"/><path d="M145.5 76.0 C145.5 79.3 145.5 89.3 145.5 96.0 C145.5 102.7 145.5 109.3 145.5 116.0 C145.5 122.7 145.5 129.3 145.5 136.0 C145.5 142.7 145.5 149.3 145.5 156.0 C145.5 162.7 145.5 169.3 145.5 176.0 C145.5 182.7 145.5 189.3 145.5 196.0 C145.5 202.7 145.5 209.3 145.5 216.0 C145.5 222.7 145.5 229.3 145.5 236.0 C145.5 242.7 145.5 249.3 145.5 256.0 C145.5 262.7 145.5 269.3 145.5 276.0 C145.5 282.7 145.5 289.3 145.5 296.0 C145.5 302.7 145.5 309.3 145.5 316.0 C145.5 322.7 145.7 325.7 145.5 336.0 C145.2 346.3 144.7 364.0 143.7 378.1 C142.8 392.2 141.3 406.4 139.6 420.9 C137.9 435.3 135.5 449.9 133.5 464.9 C131.4 479.8 129.1 494.9 127.1 510.3 C125.1 525.7 123.0 541.3 121.4 557.2 C119.7 573.1 118.1 589.3 117.1 605.6 C116.1 622.0 115.1 638.7 115.1 655.3 C115.2 671.9 115.8 688.8 117.3 705.4 C118.8 722.1 121.0 738.8 124.1 755.3 C127.2 771.8 130.9 788.4 135.8 804.3 C140.8 820.3 147.0 835.9 154.0 851.0 C161.0 866.1 168.8 880.9 177.7 894.9 C186.6 909.0 196.9 922.1 207.2 935.1 C217.5 948.1 228.5 960.5 239.6 973.0 C250.6 985.4 262.1 997.4 273.2 1009.8 C284.4 1022.1 295.1 1035.1 306.7 1047.1 C318.3 1059.2 330.4 1070.8 342.7 1082.3 C354.9 1093.8 367.3 1105.3 380.2 1116.2 C393.0 1127.1 406.3 1137.6 419.8 1147.8 C433.4 1157.9 447.2 1167.8 461.4 1177.1 C475.6 1186.4 490.1 1195.2 504.9 1203.7 C519.6 1212.2 534.6 1220.4 549.8 1228.1 C565.0 1235.8 580.5 1243.1 596.1 1250.0 C611.8 1256.9 627.7 1263.2 643.8 1269.3 C659.8 1275.3 676.0 1280.9 692.4 1286.3 C708.7 1291.6 725.2 1296.6 741.8 1301.2 C758.5 1305.7 775.3 1309.8 792.2 1313.5 C809.1 1317.2 826.1 1320.4 843.2 1323.3 C860.4 1326.1 877.6 1328.4 894.9 1330.5 C912.2 1332.5 933.3 1334.6 947.0 1335.5 C960.7 1336.3 967.0 1335.5 977.0 1335.5 C987.0 1335.5 997.0 1335.5 1007.0 1335.5 C1017.0 1335.5 1027.0 1335.5 1037.0 1335.5 C1047.0 1335.5 1057.0 1335.5 1067.0 1335.5 C1077.0 1335.5 1087.0 1335.5 1097.0 1335.5 C1107.0 1335.5 1117.0 1335.5 1127.0 1335.5 C1137.0 1335.5 1147.0 1335.5 1157.0 1335.5 C1167.0 1335.5 1177.0 1335.5 1187.0 1335.5 C1197.0 1335.5 1207.0 1335.5 1217.0 1335.5 C1227.0 1335.5 1237.0 1335.5 1247.0 1335.5 C1257.0 1335.5 1267.0 1335.5 1277.0 1335.5 C1287.0 1335.5 1297.0 1335.5 1307.0 1335.5 C1317.0 1335.5 1327.0 1335.5 1337.0 1335.5 C1347.0 1335.5 1357.0 1335.5 1367.0 1335.5 C1377.0 1335.5 1387.0 1335.5 1397.0 1335.5 C1407.0 1335.5 1417.0 1335.5 1427.0 1335.5 C1437.0 1335.5 1447.0 1335.5 1457.0 1335.5 C1467.0 1335.5 1477.0 1335.5 1487.0 1335.5 C1497.0 1335.5 1512.0 1335.5 1517.0 1335.5"/><path d="M107.9 76.0 C107.9 79.3 107.9 89.3 107.9 96.0 C107.9 102.7 107.9 109.3 107.9 116.0 C107.9 122.7 107.9 129.3 107.9 136.0 C107.9 142.7 107.9 149.3 107.9 156.0 C107.9 162.7 107.9 169.3 107.9 176.0 C107.9 182.7 107.9 189.3 107.9 196.0 C107.9 202.7 107.9 209.3 107.9 216.0 C107.9 222.7 107.9 229.3 107.9 236.0 C107.9 242.7 107.9 249.3 107.9 256.0 C107.9 262.7 107.9 269.3 107.9 276.0 C107.9 282.7 107.9 289.3 107.9 296.0 C107.9 302.7 107.9 309.3 107.9 316.0 C107.9 322.7 108.2 325.3 107.9 336.0 C107.6 346.7 107.1 365.3 106.0 380.1 C104.9 394.9 103.3 409.7 101.4 424.9 C99.4 440.0 96.8 455.4 94.4 471.0 C92.0 486.7 89.4 502.6 87.1 518.8 C84.7 535.0 82.4 551.5 80.4 568.2 C78.4 585.0 76.5 602.0 75.2 619.3 C73.8 636.5 72.6 654.2 72.4 671.7 C72.2 689.3 72.6 707.1 74.0 724.7 C75.3 742.3 77.5 760.0 80.6 777.5 C83.6 794.9 87.3 812.5 92.4 829.4 C97.5 846.3 103.9 862.8 111.1 878.8 C118.4 894.8 126.6 910.5 135.9 925.3 C145.2 940.1 156.1 954.0 166.9 967.7 C177.8 981.4 189.5 994.5 201.1 1007.6 C212.7 1020.8 224.8 1033.3 236.6 1046.4 C248.4 1059.4 259.6 1073.1 271.8 1085.9 C284.0 1098.7 296.8 1110.9 309.7 1123.0 C322.5 1135.2 335.6 1147.4 349.1 1158.9 C362.6 1170.5 376.6 1181.6 390.9 1192.4 C405.1 1203.1 419.7 1213.6 434.6 1223.4 C449.6 1233.3 464.9 1242.7 480.4 1251.7 C496.0 1260.7 511.8 1269.4 527.8 1277.6 C543.8 1285.8 560.1 1293.6 576.6 1300.9 C593.1 1308.2 609.9 1315.0 626.8 1321.5 C643.7 1327.9 660.8 1333.9 678.1 1339.6 C695.3 1345.3 712.7 1350.7 730.3 1355.5 C747.8 1360.4 765.6 1364.8 783.4 1368.7 C801.3 1372.7 819.3 1376.2 837.4 1379.2 C855.4 1382.3 873.6 1384.8 891.9 1387.0 C910.2 1389.2 932.8 1391.5 947.0 1392.4 C961.2 1393.3 967.0 1392.4 977.0 1392.4 C987.0 1392.4 997.0 1392.4 1007.0 1392.4 C1017.0 1392.4 1027.0 1392.4 1037.0 1392.4 C1047.0 1392.4 1057.0 1392.4 1067.0 1392.4 C1077.0 1392.4 1087.0 1392.4 1097.0 1392.4 C1107.0 1392.4 1117.0 1392.4 1127.0 1392.4 C1137.0 1392.4 1147.0 1392.4 1157.0 1392.4 C1167.0 1392.4 1177.0 1392.4 1187.0 1392.4 C1197.0 1392.4 1207.0 1392.4 1217.0 1392.4 C1227.0 1392.4 1237.0 1392.4 1247.0 1392.4 C1257.0 1392.4 1267.0 1392.4 1277.0 1392.4 C1287.0 1392.4 1297.0 1392.4 1307.0 1392.4 C1317.0 1392.4 1327.0 1392.4 1337.0 1392.4 C1347.0 1392.4 1357.0 1392.4 1367.0 1392.4 C1377.0 1392.4 1387.0 1392.4 1397.0 1392.4 C1407.0 1392.4 1417.0 1392.4 1427.0 1392.4 C1437.0 1392.4 1447.0 1392.4 1457.0 1392.4 C1467.0 1392.4 1477.0 1392.4 1487.0 1392.4 C1497.0 1392.4 1512.0 1392.4 1517.0 1392.4"/><path d="M70.4 76.0 C70.4 79.3 70.4 89.3 70.4 96.0 C70.4 102.7 70.4 109.3 70.4 116.0 C70.4 122.7 70.4 129.3 70.4 136.0 C70.4 142.7 70.4 149.3 70.4 156.0 C70.4 162.7 70.4 169.3 70.4 176.0 C70.4 182.7 70.4 189.3 70.4 196.0 C70.4 202.7 70.4 209.3 70.4 216.0 C70.4 222.7 70.4 229.3 70.4 236.0 C70.4 242.7 70.4 249.3 70.4 256.0 C70.4 262.7 70.4 269.3 70.4 276.0 C70.4 282.7 70.4 289.3 70.4 296.0 C70.4 302.7 70.4 309.3 70.4 316.0 C70.4 322.7 70.8 325.0 70.4 336.0 C70.0 347.0 69.5 366.6 68.3 382.1 C67.1 397.5 65.3 413.0 63.1 428.9 C60.9 444.8 58.0 460.8 55.3 477.2 C52.7 493.6 49.7 510.3 47.1 527.3 C44.4 544.3 41.7 561.6 39.4 579.2 C37.1 596.8 34.9 614.7 33.2 632.9 C31.6 651.1 30.1 669.6 29.7 688.1 C29.2 706.6 29.4 725.4 30.7 744.0 C31.9 762.6 33.9 781.3 37.0 799.7 C40.0 818.1 43.8 836.6 49.0 854.5 C54.2 872.3 60.7 889.8 68.3 906.7 C75.8 923.5 84.4 940.1 94.1 955.7 C103.8 971.3 115.3 985.8 126.7 1000.3 C138.1 1014.7 150.4 1028.5 162.6 1042.3 C174.8 1056.1 187.6 1069.3 200.0 1083.0 C212.4 1096.7 224.2 1111.1 236.9 1124.6 C249.7 1138.1 263.1 1151.0 276.6 1163.8 C290.2 1176.7 303.8 1189.5 318.1 1201.7 C332.3 1213.9 347.0 1225.6 361.9 1236.9 C376.9 1248.3 392.2 1259.3 407.9 1269.8 C423.6 1280.2 439.7 1290.1 456.0 1299.7 C472.3 1309.2 488.9 1318.4 505.7 1327.1 C522.6 1335.8 539.7 1344.1 557.1 1351.8 C574.4 1359.6 592.0 1366.8 609.8 1373.7 C627.6 1380.6 645.6 1386.9 663.8 1393.0 C681.9 1399.0 700.3 1404.7 718.7 1409.9 C737.2 1415.1 755.9 1419.8 774.7 1424.0 C793.5 1428.2 812.4 1431.9 831.5 1435.2 C850.5 1438.4 869.7 1441.2 889.0 1443.5 C908.2 1445.9 932.3 1448.4 947.0 1449.4 C961.7 1450.4 967.0 1449.4 977.0 1449.4 C987.0 1449.4 997.0 1449.4 1007.0 1449.4 C1017.0 1449.4 1027.0 1449.4 1037.0 1449.4 C1047.0 1449.4 1057.0 1449.4 1067.0 1449.4 C1077.0 1449.4 1087.0 1449.4 1097.0 1449.4 C1107.0 1449.4 1117.0 1449.4 1127.0 1449.4 C1137.0 1449.4 1147.0 1449.4 1157.0 1449.4 C1167.0 1449.4 1177.0 1449.4 1187.0 1449.4 C1197.0 1449.4 1207.0 1449.4 1217.0 1449.4 C1227.0 1449.4 1237.0 1449.4 1247.0 1449.4 C1257.0 1449.4 1267.0 1449.4 1277.0 1449.4 C1287.0 1449.4 1297.0 1449.4 1307.0 1449.4 C1317.0 1449.4 1327.0 1449.4 1337.0 1449.4 C1347.0 1449.4 1357.0 1449.4 1367.0 1449.4 C1377.0 1449.4 1387.0 1449.4 1397.0 1449.4 C1407.0 1449.4 1417.0 1449.4 1427.0 1449.4 C1437.0 1449.4 1447.0 1449.4 1457.0 1449.4 C1467.0 1449.4 1477.0 1449.4 1487.0 1449.4 C1497.0 1449.4 1512.0 1449.4 1517.0 1449.4"/><path d="M528.7 -34.0 C526.3 -32.8 518.9 -29.1 514.0 -26.7 C509.1 -24.3 504.2 -21.9 499.3 -19.6 C494.4 -17.2 489.5 -14.9 484.6 -12.6 C479.7 -10.3 474.8 -8.0 469.9 -5.8 C465.0 -3.5 460.1 -1.3 455.2 0.9 C450.3 3.1 445.4 5.3 440.5 7.4 C435.6 9.6 430.7 11.7 425.9 13.8 C421.0 16.0 416.1 18.0 411.2 20.1 C406.3 22.2 401.4 24.2 396.5 26.2 C391.6 28.3 386.7 30.3 381.8 32.2 C376.9 34.2 372.0 36.2 367.1 38.1 C362.2 40.1 357.3 42.0 352.4 43.9 C347.5 45.8 342.6 47.6 337.7 49.5 C332.8 51.3 328.8 52.9 323.0 55.0 C317.2 57.1 309.7 59.8 303.0 62.3 C296.3 64.7 289.7 67.1 283.0 69.5 C276.3 72.0 266.3 75.6 263.0 76.8"/><path d="M528.7 30.0 C526.3 31.3 518.9 35.3 514.0 37.9 C509.1 40.5 504.2 43.0 499.3 45.6 C494.4 48.1 489.5 50.6 484.6 53.1 C479.7 55.5 474.8 58.0 469.9 60.4 C465.0 62.8 460.1 65.2 455.2 67.6 C450.3 69.9 445.4 72.3 440.5 74.6 C435.6 76.9 430.7 79.1 425.9 81.4 C421.0 83.6 416.1 85.9 411.2 88.1 C406.3 90.3 401.4 92.4 396.5 94.6 C391.6 96.7 386.7 98.9 381.8 101.0 C376.9 103.1 372.0 105.1 367.1 107.2 C362.2 109.2 357.3 111.3 352.4 113.3 C347.5 115.3 342.6 117.2 337.7 119.2 C332.8 121.2 328.8 122.8 323.0 125.0 C317.2 127.2 309.7 130.1 303.0 132.7 C296.3 135.2 289.7 137.8 283.0 140.3 C276.3 142.9 266.3 146.7 263.0 148.0"/><path d="M528.7 94.0 C526.3 95.4 518.9 99.8 514.0 102.6 C509.1 105.5 504.2 108.3 499.3 111.1 C494.4 113.8 489.5 116.6 484.6 119.3 C479.7 122.0 474.8 124.6 469.9 127.3 C465.0 129.9 460.1 132.5 455.2 135.1 C450.3 137.6 445.4 140.2 440.5 142.7 C435.6 145.2 430.7 147.6 425.9 150.1 C421.0 152.5 416.1 154.9 411.2 157.3 C406.3 159.7 401.4 162.0 396.5 164.3 C391.6 166.7 386.7 169.0 381.8 171.2 C376.9 173.5 372.0 175.7 367.1 177.9 C362.2 180.1 357.3 182.3 352.4 184.4 C347.5 186.6 342.6 188.7 337.7 190.8 C332.8 192.9 328.8 194.6 323.0 197.0 C317.2 199.4 309.7 202.5 303.0 205.2 C296.3 207.9 289.7 210.6 283.0 213.4 C276.3 216.1 266.3 220.2 263.0 221.6"/><path d="M528.7 158.0 C526.3 159.6 518.9 164.4 514.0 167.5 C509.1 170.6 504.2 173.7 499.3 176.8 C494.4 179.8 489.5 182.8 484.6 185.8 C479.7 188.7 474.8 191.6 469.9 194.5 C465.0 197.4 460.1 200.2 455.2 203.0 C450.3 205.8 445.4 208.6 440.5 211.3 C435.6 214.0 430.7 216.7 425.9 219.4 C421.0 222.0 416.1 224.6 411.2 227.2 C406.3 229.8 401.4 232.3 396.5 234.9 C391.6 237.4 386.7 239.8 381.8 242.3 C376.9 244.7 372.0 247.1 367.1 249.5 C362.2 251.9 357.3 254.2 352.4 256.5 C347.5 258.8 342.6 261.1 337.7 263.4 C332.8 265.6 328.8 267.4 323.0 270.0 C317.2 272.6 309.7 275.9 303.0 278.8 C296.3 281.7 289.7 284.6 283.0 287.6 C276.3 290.5 266.3 294.9 263.0 296.3"/><path d="M528.7 222.0 C526.3 223.7 518.9 228.9 514.0 232.3 C509.1 235.7 504.2 239.0 499.3 242.3 C494.4 245.5 489.5 248.8 484.6 251.9 C479.7 255.1 474.8 258.3 469.9 261.3 C465.0 264.4 460.1 267.5 455.2 270.5 C450.3 273.5 445.4 276.4 440.5 279.3 C435.6 282.2 430.7 285.1 425.9 287.9 C421.0 290.8 416.1 293.5 411.2 296.3 C406.3 299.0 401.4 301.7 396.5 304.4 C391.6 307.1 386.7 309.7 381.8 312.3 C376.9 314.8 372.0 317.4 367.1 319.9 C362.2 322.4 357.3 324.9 352.4 327.3 C347.5 329.7 342.6 332.1 337.7 334.5 C332.8 336.9 328.8 338.8 323.0 341.5 C317.2 344.2 309.7 347.7 303.0 350.7 C296.3 353.8 289.7 356.9 283.0 360.0 C276.3 363.0 266.3 367.6 263.0 369.2"/><path d="M528.7 286.0 C526.3 288.0 518.9 293.9 514.0 297.8 C509.1 301.6 504.2 305.4 499.3 309.1 C494.4 312.9 489.5 316.5 484.6 320.1 C479.7 323.7 474.8 327.3 469.9 330.8 C465.0 334.3 460.1 337.7 455.2 341.1 C450.3 344.5 445.4 347.8 440.5 351.1 C435.6 354.3 430.7 357.5 425.9 360.7 C421.0 363.9 416.1 367.0 411.2 370.0 C406.3 373.1 401.4 376.1 396.5 379.1 C391.6 382.0 386.7 384.9 381.8 387.8 C376.9 390.7 372.0 393.5 367.1 396.3 C362.2 399.0 357.3 401.8 352.4 404.4 C347.5 407.1 342.6 409.7 337.7 412.3 C332.8 414.9 328.8 417.0 323.0 420.0 C317.2 423.0 309.7 426.7 303.0 430.1 C296.3 433.5 289.7 436.8 283.0 440.2 C276.3 443.6 266.3 448.6 263.0 450.3"/><path d="M529.3 353.0 C526.8 355.2 519.5 361.7 514.6 366.0 C509.6 370.2 504.7 374.4 499.8 378.5 C494.9 382.6 490.0 386.6 485.1 390.5 C480.2 394.5 475.3 398.4 470.3 402.2 C465.4 406.0 460.5 409.7 455.6 413.4 C450.7 417.0 445.8 420.6 440.9 424.2 C436.0 427.7 431.1 431.2 426.1 434.6 C421.2 438.0 416.3 441.4 411.4 444.6 C406.5 447.9 401.6 451.2 396.7 454.3 C391.8 457.5 386.9 460.6 381.9 463.7 C377.0 466.7 372.1 469.7 367.2 472.7 C362.3 475.6 357.4 478.5 352.5 481.4 C347.6 484.2 342.6 487.0 337.7 489.7 C332.8 492.5 328.8 494.7 323.0 497.8 C317.2 500.9 309.7 504.9 303.0 508.4 C296.3 512.0 289.7 515.5 283.0 519.1 C276.3 522.6 266.3 527.9 263.0 529.7"/><path d="M532.8 405.0 C530.3 407.0 522.8 412.9 517.8 416.7 C512.8 420.5 507.8 424.3 502.8 428.0 C497.8 431.6 492.9 435.2 487.9 438.8 C482.9 442.3 477.9 445.8 472.9 449.2 C467.9 452.6 462.9 455.9 457.9 459.1 C452.9 462.4 447.9 465.6 442.9 468.7 C437.9 471.9 432.9 474.9 427.9 477.9 C422.9 480.9 417.9 483.9 412.9 486.8 C407.9 489.7 402.9 492.5 397.9 495.3 C392.9 498.1 387.9 500.8 382.9 503.4 C378.0 506.1 373.0 508.7 368.0 511.3 C363.0 513.8 358.0 516.4 353.0 518.8 C348.0 521.3 343.0 523.7 338.0 526.0 C333.0 528.4 328.8 530.3 323.0 533.0 C317.2 535.7 309.7 539.0 303.0 542.0 C296.3 545.0 289.7 548.0 283.0 551.0 C276.3 554.0 266.3 558.5 263.0 560.0"/><path d="M542.6 455.0 C540.0 456.7 532.1 462.1 526.9 465.5 C521.7 468.9 516.5 472.2 511.2 475.5 C506.0 478.8 500.8 482.0 495.5 485.1 C490.3 488.2 485.1 491.3 479.9 494.3 C474.6 497.3 469.4 500.2 464.2 503.1 C458.9 506.0 453.7 508.8 448.5 511.5 C443.3 514.3 438.0 516.9 432.8 519.6 C427.6 522.2 422.3 524.8 417.1 527.3 C411.9 529.8 406.7 532.2 401.4 534.6 C396.2 537.0 391.0 539.4 385.7 541.7 C380.5 544.0 375.3 546.2 370.1 548.4 C364.8 550.6 359.6 552.8 354.4 554.9 C349.1 557.0 343.9 559.1 338.7 561.1 C333.5 563.1 328.9 564.8 323.0 567.0 C317.1 569.2 309.7 571.9 303.0 574.3 C296.3 576.8 289.7 579.2 283.0 581.6 C276.3 584.1 266.3 587.7 263.0 589.0"/><path d="M554.1 495.0 C551.4 496.7 543.1 502.1 537.6 505.5 C532.1 508.9 526.6 512.2 521.1 515.4 C515.6 518.7 510.1 521.9 504.6 525.0 C499.1 528.1 493.6 531.1 488.1 534.1 C482.6 537.0 477.1 539.9 471.6 542.7 C466.1 545.6 460.6 548.3 455.1 551.0 C449.6 553.7 444.1 556.3 438.6 558.9 C433.1 561.5 427.6 564.0 422.0 566.5 C416.5 568.9 411.0 571.3 405.5 573.7 C400.0 576.0 394.5 578.3 389.0 580.5 C383.5 582.8 378.0 584.9 372.5 587.1 C367.0 589.2 361.5 591.3 356.0 593.3 C350.5 595.4 345.0 597.4 339.5 599.3 C334.0 601.2 329.1 602.9 323.0 605.0 C316.9 607.1 309.7 609.5 303.0 611.7 C296.3 613.9 289.7 616.2 283.0 618.4 C276.3 620.6 266.3 624.0 263.0 625.1"/><path d="M571.3 533.0 C568.3 534.6 559.5 539.5 553.6 542.6 C547.7 545.7 541.7 548.7 535.8 551.7 C529.9 554.6 524.0 557.5 518.1 560.3 C512.2 563.1 506.3 565.9 500.4 568.6 C494.4 571.3 488.5 573.9 482.6 576.4 C476.7 579.0 470.8 581.5 464.9 583.9 C459.0 586.3 453.1 588.7 447.1 591.0 C441.2 593.3 435.3 595.6 429.4 597.8 C423.5 600.0 417.6 602.1 411.7 604.2 C405.8 606.3 399.9 608.3 393.9 610.3 C388.0 612.3 382.1 614.3 376.2 616.1 C370.3 618.0 364.4 619.9 358.5 621.7 C352.6 623.5 346.6 625.3 340.7 627.0 C334.8 628.7 329.3 630.2 323.0 632.0 C316.7 633.8 309.7 635.7 303.0 637.5 C296.3 639.3 289.7 641.2 283.0 643.0 C276.3 644.8 266.3 647.6 263.0 648.5"/><path d="M578.7 547.0 C575.7 548.8 566.5 554.4 560.4 557.9 C554.3 561.5 548.3 564.9 542.2 568.3 C536.1 571.7 530.0 575.0 523.9 578.2 C517.8 581.4 511.7 584.5 505.6 587.6 C499.6 590.7 493.5 593.6 487.4 596.6 C481.3 599.5 475.2 602.3 469.1 605.1 C463.0 607.9 456.9 610.6 450.9 613.2 C444.8 615.8 438.7 618.4 432.6 620.9 C426.5 623.4 420.4 625.9 414.3 628.3 C408.2 630.6 402.1 633.0 396.1 635.3 C390.0 637.5 383.9 639.7 377.8 641.9 C371.7 644.1 365.6 646.2 359.5 648.2 C353.4 650.3 347.4 652.3 341.3 654.3 C335.2 656.2 329.4 658.0 323.0 660.0 C316.6 662.0 309.7 664.1 303.0 666.1 C296.3 668.1 289.7 670.2 283.0 672.2 C276.3 674.2 266.3 677.3 263.0 678.3"/><path d="M589.9 563.5 C586.7 565.4 577.2 571.2 570.8 574.9 C564.4 578.7 558.1 582.3 551.7 585.8 C545.4 589.4 539.0 592.8 532.7 596.2 C526.3 599.6 520.0 602.9 513.6 606.1 C507.3 609.3 500.9 612.4 494.6 615.5 C488.2 618.5 481.8 621.5 475.5 624.4 C469.1 627.3 462.8 630.1 456.4 632.9 C450.1 635.7 443.7 638.4 437.4 641.0 C431.0 643.6 424.7 646.2 418.3 648.7 C412.0 651.2 405.6 653.7 399.2 656.0 C392.9 658.4 386.5 660.8 380.2 663.0 C373.8 665.3 367.5 667.5 361.1 669.7 C354.8 671.8 348.4 673.9 342.1 676.0 C335.7 678.0 329.5 680.0 323.0 682.0 C316.5 684.0 309.7 686.1 303.0 688.1 C296.3 690.2 289.7 692.2 283.0 694.2 C276.3 696.3 266.3 699.3 263.0 700.4"/><path d="M601.4 579.7 C598.1 581.7 588.1 587.6 581.5 591.4 C574.9 595.2 568.2 598.9 561.6 602.5 C555.0 606.1 548.4 609.6 541.7 613.1 C535.1 616.5 528.5 619.8 521.8 623.1 C515.2 626.4 508.6 629.6 502.0 632.7 C495.3 635.8 488.7 638.8 482.1 641.8 C475.4 644.8 468.8 647.6 462.2 650.5 C455.6 653.3 448.9 656.0 442.3 658.7 C435.7 661.4 429.0 664.0 422.4 666.6 C415.8 669.1 409.2 671.6 402.5 674.0 C395.9 676.5 389.3 678.8 382.7 681.2 C376.0 683.5 369.4 685.7 362.8 687.9 C356.1 690.1 349.5 692.3 342.9 694.4 C336.3 696.5 329.6 698.5 323.0 700.5 C316.4 702.5 309.7 704.5 303.0 706.5 C296.3 708.5 289.7 710.5 283.0 712.5 C276.3 714.5 266.3 717.4 263.0 718.4"/><path d="M613.4 595.6 C609.9 597.6 599.6 603.6 592.7 607.5 C585.7 611.3 578.8 615.1 571.9 618.8 C565.0 622.5 558.1 626.1 551.2 629.6 C544.3 633.1 537.3 636.5 530.4 639.9 C523.5 643.2 516.6 646.4 509.7 649.6 C502.8 652.8 495.9 655.9 488.9 658.9 C482.0 661.9 475.1 664.9 468.2 667.8 C461.3 670.6 454.4 673.4 447.5 676.2 C440.5 678.9 433.6 681.6 426.7 684.2 C419.8 686.8 412.9 689.3 406.0 691.8 C399.1 694.3 392.1 696.7 385.2 699.1 C378.3 701.4 371.4 703.7 364.5 706.0 C357.6 708.2 350.7 710.4 343.7 712.5 C336.8 714.7 329.8 716.8 323.0 718.8 C316.2 720.8 309.7 722.7 303.0 724.6 C296.3 726.6 289.7 728.5 283.0 730.5 C276.3 732.4 266.3 735.4 263.0 736.3"/><path d="M625.8 611.1 C622.2 613.1 611.4 619.3 604.2 623.2 C597.0 627.1 589.8 630.9 582.5 634.7 C575.3 638.4 568.1 642.0 560.9 645.6 C553.7 649.2 546.5 652.6 539.3 656.0 C532.1 659.4 524.9 662.7 517.7 665.9 C510.5 669.1 503.2 672.2 496.0 675.3 C488.8 678.4 481.6 681.4 474.4 684.3 C467.2 687.2 460.0 690.0 452.8 692.8 C445.6 695.6 438.4 698.3 431.1 700.9 C423.9 703.6 416.7 706.1 409.5 708.7 C402.3 711.2 395.1 713.6 387.9 716.0 C380.7 718.4 373.5 720.7 366.3 723.0 C359.0 725.3 351.8 727.5 344.6 729.7 C337.4 731.8 329.9 734.0 323.0 736.0 C316.1 738.0 309.7 739.8 303.0 741.7 C296.3 743.6 289.7 745.5 283.0 747.4 C276.3 749.3 266.3 752.1 263.0 753.1"/><path d="M638.9 626.1 C635.2 628.1 623.9 634.4 616.4 638.4 C608.9 642.4 601.3 646.3 593.8 650.2 C586.3 654.0 578.8 657.7 571.2 661.3 C563.7 665.0 556.2 668.5 548.7 672.0 C541.2 675.4 533.6 678.8 526.1 682.1 C518.6 685.4 511.1 688.6 503.5 691.7 C496.0 694.9 488.5 697.9 481.0 700.9 C473.4 703.9 465.9 706.8 458.4 709.6 C450.9 712.5 443.4 715.2 435.8 717.9 C428.3 720.6 420.8 723.3 413.3 725.8 C405.7 728.4 398.2 730.9 390.7 733.3 C383.2 735.8 375.7 738.2 368.1 740.5 C360.6 742.8 353.1 745.1 345.6 747.3 C338.0 749.5 330.1 751.8 323.0 753.8 C315.9 755.8 309.7 757.5 303.0 759.4 C296.3 761.2 289.7 763.1 283.0 764.9 C276.3 766.8 266.3 769.6 263.0 770.5"/><path d="M652.1 641.0 C648.2 643.1 636.4 649.5 628.6 653.6 C620.7 657.7 612.9 661.7 605.1 665.6 C597.2 669.5 589.4 673.3 581.6 677.0 C573.7 680.7 565.9 684.3 558.1 687.9 C550.2 691.4 542.4 694.8 534.6 698.2 C526.7 701.6 518.9 704.8 511.0 708.0 C503.2 711.2 495.4 714.4 487.5 717.4 C479.7 720.4 471.9 723.4 464.0 726.3 C456.2 729.2 448.4 732.0 440.5 734.8 C432.7 737.5 424.9 740.2 417.0 742.8 C409.2 745.5 401.4 748.0 393.5 750.5 C385.7 753.0 377.8 755.5 370.0 757.8 C362.2 760.2 354.3 762.5 346.5 764.8 C338.7 767.0 330.3 769.4 323.0 771.4 C315.7 773.4 309.7 775.0 303.0 776.9 C296.3 778.7 289.7 780.5 283.0 782.3 C276.3 784.1 266.3 786.9 263.0 787.8"/><path d="M666.9 654.3 C662.8 656.4 650.5 663.0 642.3 667.3 C634.2 671.5 626.0 675.6 617.8 679.7 C609.6 683.7 601.4 687.6 593.2 691.5 C585.0 695.3 576.8 699.0 568.6 702.7 C560.5 706.3 552.3 709.9 544.1 713.4 C535.9 716.8 527.7 720.2 519.5 723.5 C511.3 726.8 503.1 730.0 495.0 733.2 C486.8 736.3 478.6 739.4 470.4 742.4 C462.2 745.4 454.0 748.3 445.8 751.2 C437.6 754.0 429.4 756.8 421.3 759.5 C413.1 762.2 404.9 764.8 396.7 767.4 C388.5 770.0 380.3 772.5 372.1 775.0 C363.9 777.4 355.8 779.8 347.6 782.2 C339.4 784.5 330.4 787.0 323.0 789.0 C315.6 791.0 309.7 792.6 303.0 794.4 C296.3 796.2 289.7 798.0 283.0 799.8 C276.3 801.6 266.3 804.3 263.0 805.2"/><path d="M682.1 667.1 C677.9 669.3 665.0 676.2 656.5 680.5 C647.9 684.9 639.4 689.2 630.8 693.4 C622.3 697.5 613.7 701.6 605.2 705.6 C596.6 709.5 588.1 713.4 579.5 717.2 C571.0 720.9 562.4 724.6 553.9 728.2 C545.3 731.8 536.8 735.3 528.2 738.7 C519.7 742.2 511.1 745.5 502.6 748.7 C494.0 752.0 485.5 755.2 476.9 758.3 C468.4 761.4 459.8 764.4 451.3 767.3 C442.7 770.3 434.2 773.2 425.6 776.0 C417.1 778.8 408.5 781.5 400.0 784.2 C391.4 786.8 382.9 789.4 374.3 792.0 C365.8 794.5 357.2 797.0 348.7 799.4 C340.1 801.8 330.6 804.4 323.0 806.5 C315.4 808.6 309.7 810.1 303.0 811.9 C296.3 813.6 289.7 815.4 283.0 817.2 C276.3 819.0 266.3 821.7 263.0 822.6"/><path d="M697.4 679.8 C693.0 682.2 679.6 689.2 670.7 693.8 C661.8 698.3 652.8 702.7 643.9 707.0 C635.0 711.3 626.1 715.5 617.2 719.6 C608.3 723.7 599.3 727.7 590.4 731.6 C581.5 735.5 572.6 739.4 563.7 743.1 C554.8 746.8 545.9 750.4 536.9 753.9 C528.0 757.5 519.1 760.9 510.2 764.3 C501.3 767.7 492.4 770.9 483.5 774.1 C474.5 777.3 465.6 780.5 456.7 783.5 C447.8 786.6 438.9 789.5 430.0 792.4 C421.1 795.3 412.1 798.2 403.2 800.9 C394.3 803.7 385.4 806.4 376.5 809.0 C367.6 811.6 358.7 814.2 349.7 816.7 C340.8 819.2 330.8 821.9 323.0 824.0 C315.2 826.1 309.7 827.5 303.0 829.3 C296.3 831.1 289.7 832.8 283.0 834.6 C276.3 836.4 266.3 839.0 263.0 839.9"/><path d="M714.0 690.8 C709.3 693.2 695.4 700.6 686.1 705.4 C676.8 710.1 667.4 714.7 658.1 719.2 C648.8 723.7 639.5 728.1 630.2 732.4 C620.9 736.7 611.6 740.9 602.3 745.0 C593.0 749.1 583.7 753.0 574.4 756.9 C565.0 760.8 555.7 764.6 546.4 768.3 C537.1 772.0 527.8 775.6 518.5 779.1 C509.2 782.7 499.9 786.1 490.6 789.4 C481.3 792.8 472.0 796.1 462.6 799.2 C453.3 802.4 444.0 805.5 434.7 808.6 C425.4 811.6 416.1 814.6 406.8 817.5 C397.5 820.3 388.2 823.2 378.9 825.9 C369.5 828.7 360.2 831.3 350.9 833.9 C341.6 836.6 331.0 839.4 323.0 841.6 C315.0 843.8 309.7 845.1 303.0 846.9 C296.3 848.7 289.7 850.5 283.0 852.2 C276.3 854.0 266.3 856.7 263.0 857.6"/><path d="M730.8 701.4 C726.0 703.9 711.4 711.7 701.7 716.6 C692.0 721.6 682.3 726.4 672.6 731.1 C662.9 735.8 653.2 740.4 643.5 744.9 C633.7 749.4 624.0 753.8 614.3 758.0 C604.6 762.3 594.9 766.5 585.2 770.5 C575.5 774.6 565.8 778.5 556.1 782.4 C546.3 786.3 536.6 790.0 526.9 793.7 C517.2 797.4 507.5 801.0 497.8 804.5 C488.1 808.0 478.4 811.4 468.7 814.7 C458.9 818.1 449.2 821.3 439.5 824.5 C429.8 827.7 420.1 830.7 410.4 833.8 C400.7 836.8 391.0 839.7 381.3 842.6 C371.6 845.5 361.8 848.3 352.1 851.0 C342.4 853.7 331.2 856.8 323.0 859.0 C314.8 861.2 309.7 862.6 303.0 864.3 C296.3 866.1 289.7 867.9 283.0 869.7 C276.3 871.4 266.3 874.1 263.0 875.0"/><path d="M749.4 710.3 C741.9 713.5 719.4 723.0 704.4 729.6 C689.4 736.1 674.4 742.8 659.4 749.6 C644.4 756.4 629.4 763.3 614.4 770.4 C599.4 777.4 584.4 784.6 569.4 791.9 C554.4 799.2 539.4 806.7 524.4 814.2 C509.4 821.8 494.4 829.5 479.4 837.3 C464.4 845.1 449.4 853.0 434.4 861.1 C419.4 869.2 404.4 877.4 389.4 885.7 C374.4 894.0 359.4 902.4 344.4 911.0 C329.4 919.6 314.4 928.3 299.4 937.1 C284.4 945.9 269.4 954.8 254.4 963.9 C239.4 973.0 224.4 982.2 209.4 991.5 C194.4 1000.8 179.4 1011.9 164.4 1019.9 C149.4 1027.8 134.4 1033.7 119.4 1039.4 C104.4 1045.1 89.4 1049.3 74.4 1054.2 C59.4 1059.2 44.4 1064.1 29.4 1069.1 C14.4 1074.0 -0.6 1079.0 -15.6 1083.9 C-30.6 1088.9 -45.6 1093.8 -60.6 1098.8 C-75.6 1103.7 -90.6 1108.7 -105.6 1113.6 C-120.6 1118.6 -135.6 1123.5 -150.6 1128.5 C-165.6 1133.4 -180.6 1138.4 -195.6 1143.3 C-210.6 1148.3 -225.6 1153.2 -240.6 1158.2 C-255.6 1163.1 -270.6 1168.1 -285.6 1173.0 C-300.6 1178.0 -315.6 1182.9 -330.6 1187.9 C-345.6 1192.8 -360.6 1197.8 -375.6 1202.7 C-390.6 1207.7 -405.6 1212.6 -420.6 1217.6 C-435.6 1222.5 -450.6 1227.5 -465.6 1232.4 C-480.6 1237.4 -495.6 1242.3 -510.6 1247.3 C-525.6 1252.2 -548.1 1259.7 -555.6 1262.1"/><path d="M790.3 728.1 C782.8 731.2 760.3 740.4 745.3 746.8 C730.3 753.1 715.3 759.6 700.3 766.2 C685.3 772.8 670.3 779.6 655.3 786.4 C640.3 793.2 625.3 800.2 610.3 807.3 C595.3 814.4 580.3 821.6 565.3 828.9 C550.3 836.3 535.3 843.7 520.3 851.3 C505.3 858.9 490.3 866.6 475.3 874.4 C460.3 882.2 445.3 890.2 430.3 898.3 C415.3 906.3 400.3 914.5 385.3 922.8 C370.3 931.1 355.3 939.6 340.3 948.1 C325.3 956.7 310.3 965.4 295.3 974.2 C280.3 983.0 265.3 991.9 250.3 1000.9 C235.3 1010.0 220.3 1020.7 205.3 1028.5 C190.3 1036.2 175.3 1042.0 160.3 1047.7 C145.3 1053.4 130.3 1057.6 115.3 1062.5 C100.3 1067.5 85.3 1072.4 70.3 1077.4 C55.3 1082.3 40.3 1087.3 25.3 1092.2 C10.3 1097.2 -4.7 1102.1 -19.7 1107.1 C-34.7 1112.0 -49.7 1117.0 -64.7 1121.9 C-79.7 1126.9 -94.7 1131.8 -109.7 1136.8 C-124.7 1141.7 -139.7 1146.7 -154.7 1151.6 C-169.7 1156.6 -184.7 1161.5 -199.7 1166.5 C-214.7 1171.4 -229.7 1176.4 -244.7 1181.3 C-259.7 1186.3 -274.7 1191.2 -289.7 1196.2 C-304.7 1201.1 -319.7 1206.1 -334.7 1211.0 C-349.7 1216.0 -364.7 1220.9 -379.7 1225.9 C-394.7 1230.8 -409.7 1235.8 -424.7 1240.7 C-439.7 1245.7 -454.7 1250.6 -469.7 1255.6 C-484.7 1260.5 -507.2 1268.0 -514.7 1270.4"/><path d="M830.3 739.2 C822.8 742.3 800.3 751.2 785.3 757.4 C770.3 763.5 755.3 769.8 740.3 776.2 C725.3 782.6 710.3 789.1 695.3 795.8 C680.3 802.4 665.3 809.2 650.3 816.0 C635.3 822.9 620.3 829.9 605.3 837.0 C590.3 844.1 575.3 851.3 560.3 858.7 C545.3 866.0 530.3 873.5 515.3 881.1 C500.3 888.7 485.3 896.4 470.3 904.2 C455.3 912.0 440.3 920.0 425.3 928.0 C410.3 936.1 395.3 944.3 380.3 952.5 C365.3 960.8 350.3 969.3 335.3 977.8 C320.3 986.3 305.3 995.0 290.3 1003.7 C275.3 1012.5 260.3 1022.8 245.3 1030.4 C230.3 1038.0 215.3 1043.7 200.3 1049.3 C185.3 1055.0 170.3 1059.2 155.3 1064.2 C140.3 1069.1 125.3 1074.1 110.3 1079.0 C95.3 1084.0 80.3 1088.9 65.3 1093.9 C50.3 1098.8 35.3 1103.8 20.3 1108.7 C5.3 1113.7 -9.7 1118.6 -24.7 1123.6 C-39.7 1128.5 -54.7 1133.5 -69.7 1138.4 C-84.7 1143.4 -99.7 1148.3 -114.7 1153.3 C-129.7 1158.2 -144.7 1163.2 -159.7 1168.1 C-174.7 1173.1 -189.7 1178.0 -204.7 1183.0 C-219.7 1187.9 -234.7 1192.9 -249.7 1197.8 C-264.7 1202.8 -279.7 1207.7 -294.7 1212.7 C-309.7 1217.6 -324.7 1222.6 -339.7 1227.5 C-354.7 1232.5 -369.7 1237.4 -384.7 1242.4 C-399.7 1247.3 -414.7 1252.3 -429.7 1257.2 C-444.7 1262.2 -467.2 1269.6 -474.7 1272.1"/><path d="M877.2 748.7 C869.7 751.6 847.2 760.3 832.2 766.3 C817.2 772.2 802.2 778.3 787.2 784.5 C772.2 790.7 757.2 797.0 742.2 803.5 C727.2 809.9 712.2 816.4 697.2 823.1 C682.2 829.7 667.2 836.5 652.2 843.4 C637.2 850.3 622.2 857.3 607.2 864.4 C592.2 871.5 577.2 878.7 562.2 886.1 C547.2 893.4 532.2 900.9 517.2 908.5 C502.2 916.0 487.2 923.7 472.2 931.5 C457.2 939.3 442.2 947.2 427.2 955.3 C412.2 963.3 397.2 971.4 382.2 979.7 C367.2 988.0 352.2 996.3 337.2 1004.8 C322.2 1013.3 307.2 1023.2 292.2 1030.7 C277.2 1038.1 262.2 1043.7 247.2 1049.3 C232.2 1054.9 217.2 1059.2 202.2 1064.2 C187.2 1069.1 172.2 1074.1 157.2 1079.0 C142.2 1084.0 127.2 1088.9 112.2 1093.9 C97.2 1098.8 82.2 1103.8 67.2 1108.7 C52.2 1113.7 37.2 1118.6 22.2 1123.6 C7.2 1128.5 -7.8 1133.5 -22.8 1138.4 C-37.8 1143.4 -52.8 1148.3 -67.8 1153.3 C-82.8 1158.2 -97.8 1163.2 -112.8 1168.1 C-127.8 1173.1 -142.8 1178.0 -157.8 1183.0 C-172.8 1187.9 -187.8 1192.9 -202.8 1197.8 C-217.8 1202.8 -232.8 1207.7 -247.8 1212.7 C-262.8 1217.6 -277.8 1222.6 -292.8 1227.5 C-307.8 1232.5 -322.8 1237.4 -337.8 1242.4 C-352.8 1247.3 -367.8 1252.3 -382.8 1257.2 C-397.8 1262.2 -420.3 1269.6 -427.8 1272.1"/><path d="M928.3 753.0 C920.8 755.8 898.3 764.2 883.3 770.0 C868.3 775.7 853.3 781.6 838.3 787.6 C823.3 793.6 808.3 799.7 793.3 805.9 C778.3 812.1 763.3 818.5 748.3 824.9 C733.3 831.3 718.3 837.9 703.3 844.5 C688.3 851.2 673.3 858.0 658.3 864.9 C643.3 871.7 628.3 878.7 613.3 885.8 C598.3 892.9 583.3 900.2 568.3 907.5 C553.3 914.8 538.3 922.2 523.3 929.8 C508.3 937.3 493.3 945.0 478.3 952.8 C463.3 960.5 448.3 968.4 433.3 976.4 C418.3 984.4 403.3 992.5 388.3 1000.7 C373.3 1008.9 358.3 1018.5 343.3 1025.7 C328.3 1032.9 313.3 1038.5 298.3 1044.1 C283.3 1049.6 268.3 1054.0 253.3 1058.9 C238.3 1063.9 223.3 1068.8 208.3 1073.8 C193.3 1078.7 178.3 1083.7 163.3 1088.6 C148.3 1093.6 133.3 1098.5 118.3 1103.5 C103.3 1108.4 88.3 1113.4 73.3 1118.3 C58.3 1123.3 43.3 1128.2 28.3 1133.2 C13.3 1138.1 -1.7 1143.1 -16.7 1148.0 C-31.7 1153.0 -46.7 1157.9 -61.7 1162.9 C-76.7 1167.8 -91.7 1172.8 -106.7 1177.7 C-121.7 1182.7 -136.7 1187.6 -151.7 1192.6 C-166.7 1197.5 -181.7 1202.5 -196.7 1207.4 C-211.7 1212.4 -226.7 1217.3 -241.7 1222.3 C-256.7 1227.2 -271.7 1232.2 -286.7 1237.1 C-301.7 1242.1 -316.7 1247.0 -331.7 1252.0 C-346.7 1256.9 -369.2 1264.3 -376.7 1266.8"/><path d="M978.0 753.7 C970.5 756.5 948.0 764.9 933.0 770.7 C918.0 776.5 903.0 782.3 888.0 788.3 C873.0 794.3 858.0 800.4 843.0 806.6 C828.0 812.9 813.0 819.2 798.0 825.6 C783.0 832.1 768.0 838.6 753.0 845.3 C738.0 851.9 723.0 858.7 708.0 865.6 C693.0 872.5 678.0 879.5 663.0 886.6 C648.0 893.7 633.0 900.9 618.0 908.2 C603.0 915.5 588.0 923.0 573.0 930.5 C558.0 938.1 543.0 945.7 528.0 953.5 C513.0 961.3 498.0 969.2 483.0 977.1 C468.0 985.1 453.0 993.2 438.0 1001.5 C423.0 1009.7 408.0 1019.2 393.0 1026.4 C378.0 1033.7 363.0 1039.3 348.0 1044.8 C333.0 1050.3 318.0 1054.7 303.0 1059.7 C288.0 1064.6 273.0 1069.5 258.0 1074.5 C243.0 1079.5 228.0 1084.4 213.0 1089.4 C198.0 1094.3 183.0 1099.2 168.0 1104.2 C153.0 1109.2 138.0 1114.1 123.0 1119.1 C108.0 1124.0 93.0 1129.0 78.0 1133.9 C63.0 1138.9 48.0 1143.8 33.0 1148.8 C18.0 1153.7 3.0 1158.7 -12.0 1163.6 C-27.0 1168.6 -42.0 1173.5 -57.0 1178.5 C-72.0 1183.4 -87.0 1188.4 -102.0 1193.3 C-117.0 1198.3 -132.0 1203.2 -147.0 1208.2 C-162.0 1213.1 -177.0 1218.0 -192.0 1223.0 C-207.0 1228.0 -222.0 1232.9 -237.0 1237.9 C-252.0 1242.8 -267.0 1247.8 -282.0 1252.7 C-297.0 1257.7 -319.5 1265.1 -327.0 1267.6"/><path d="M1028.0 753.7 C1020.5 756.5 998.0 764.9 983.0 770.7 C968.0 776.5 953.0 782.3 938.0 788.3 C923.0 794.3 908.0 800.4 893.0 806.6 C878.0 812.9 863.0 819.2 848.0 825.6 C833.0 832.1 818.0 838.6 803.0 845.3 C788.0 851.9 773.0 858.7 758.0 865.6 C743.0 872.5 728.0 879.5 713.0 886.6 C698.0 893.7 683.0 900.9 668.0 908.2 C653.0 915.5 638.0 923.0 623.0 930.5 C608.0 938.1 593.0 945.7 578.0 953.5 C563.0 961.3 548.0 969.2 533.0 977.1 C518.0 985.1 503.0 993.2 488.0 1001.5 C473.0 1009.7 458.0 1019.2 443.0 1026.4 C428.0 1033.7 413.0 1039.3 398.0 1044.8 C383.0 1050.3 368.0 1054.7 353.0 1059.7 C338.0 1064.6 323.0 1069.5 308.0 1074.5 C293.0 1079.5 278.0 1084.4 263.0 1089.4 C248.0 1094.3 233.0 1099.2 218.0 1104.2 C203.0 1109.2 188.0 1114.1 173.0 1119.1 C158.0 1124.0 143.0 1129.0 128.0 1133.9 C113.0 1138.9 98.0 1143.8 83.0 1148.8 C68.0 1153.7 53.0 1158.7 38.0 1163.6 C23.0 1168.6 8.0 1173.5 -7.0 1178.5 C-22.0 1183.4 -37.0 1188.4 -52.0 1193.3 C-67.0 1198.3 -82.0 1203.2 -97.0 1208.2 C-112.0 1213.1 -127.0 1218.0 -142.0 1223.0 C-157.0 1228.0 -172.0 1232.9 -187.0 1237.9 C-202.0 1242.8 -217.0 1247.8 -232.0 1252.7 C-247.0 1257.7 -269.5 1265.1 -277.0 1267.6"/><path d="M1078.0 753.7 C1070.5 756.5 1048.0 764.9 1033.0 770.7 C1018.0 776.5 1003.0 782.3 988.0 788.3 C973.0 794.3 958.0 800.4 943.0 806.6 C928.0 812.9 913.0 819.2 898.0 825.6 C883.0 832.1 868.0 838.6 853.0 845.3 C838.0 851.9 823.0 858.7 808.0 865.6 C793.0 872.5 778.0 879.5 763.0 886.6 C748.0 893.7 733.0 900.9 718.0 908.2 C703.0 915.5 688.0 923.0 673.0 930.5 C658.0 938.1 643.0 945.7 628.0 953.5 C613.0 961.3 598.0 969.2 583.0 977.1 C568.0 985.1 553.0 993.2 538.0 1001.5 C523.0 1009.7 508.0 1019.2 493.0 1026.4 C478.0 1033.7 463.0 1039.3 448.0 1044.8 C433.0 1050.3 418.0 1054.7 403.0 1059.7 C388.0 1064.6 373.0 1069.5 358.0 1074.5 C343.0 1079.5 328.0 1084.4 313.0 1089.4 C298.0 1094.3 283.0 1099.2 268.0 1104.2 C253.0 1109.2 238.0 1114.1 223.0 1119.1 C208.0 1124.0 193.0 1129.0 178.0 1133.9 C163.0 1138.9 148.0 1143.8 133.0 1148.8 C118.0 1153.7 103.0 1158.7 88.0 1163.6 C73.0 1168.6 58.0 1173.5 43.0 1178.5 C28.0 1183.4 13.0 1188.4 -2.0 1193.3 C-17.0 1198.3 -32.0 1203.2 -47.0 1208.2 C-62.0 1213.1 -77.0 1218.0 -92.0 1223.0 C-107.0 1228.0 -122.0 1232.9 -137.0 1237.9 C-152.0 1242.8 -167.0 1247.8 -182.0 1252.7 C-197.0 1257.7 -219.5 1265.1 -227.0 1267.6"/><path d="M1128.0 753.7 C1120.5 756.5 1098.0 764.9 1083.0 770.7 C1068.0 776.5 1053.0 782.3 1038.0 788.3 C1023.0 794.3 1008.0 800.4 993.0 806.6 C978.0 812.9 963.0 819.2 948.0 825.6 C933.0 832.1 918.0 838.6 903.0 845.3 C888.0 851.9 873.0 858.7 858.0 865.6 C843.0 872.5 828.0 879.5 813.0 886.6 C798.0 893.7 783.0 900.9 768.0 908.2 C753.0 915.5 738.0 923.0 723.0 930.5 C708.0 938.1 693.0 945.7 678.0 953.5 C663.0 961.3 648.0 969.2 633.0 977.1 C618.0 985.1 603.0 993.2 588.0 1001.5 C573.0 1009.7 558.0 1019.2 543.0 1026.4 C528.0 1033.7 513.0 1039.3 498.0 1044.8 C483.0 1050.3 468.0 1054.7 453.0 1059.7 C438.0 1064.6 423.0 1069.5 408.0 1074.5 C393.0 1079.5 378.0 1084.4 363.0 1089.4 C348.0 1094.3 333.0 1099.2 318.0 1104.2 C303.0 1109.2 288.0 1114.1 273.0 1119.1 C258.0 1124.0 243.0 1129.0 228.0 1133.9 C213.0 1138.9 198.0 1143.8 183.0 1148.8 C168.0 1153.7 153.0 1158.7 138.0 1163.6 C123.0 1168.6 108.0 1173.5 93.0 1178.5 C78.0 1183.4 63.0 1188.4 48.0 1193.3 C33.0 1198.3 18.0 1203.2 3.0 1208.2 C-12.0 1213.1 -27.0 1218.0 -42.0 1223.0 C-57.0 1228.0 -72.0 1232.9 -87.0 1237.9 C-102.0 1242.8 -117.0 1247.8 -132.0 1252.7 C-147.0 1257.7 -169.5 1265.1 -177.0 1267.6"/><path d="M1178.0 753.7 C1170.5 756.5 1148.0 764.9 1133.0 770.7 C1118.0 776.5 1103.0 782.3 1088.0 788.3 C1073.0 794.3 1058.0 800.4 1043.0 806.6 C1028.0 812.9 1013.0 819.2 998.0 825.6 C983.0 832.1 968.0 838.6 953.0 845.3 C938.0 851.9 923.0 858.7 908.0 865.6 C893.0 872.5 878.0 879.5 863.0 886.6 C848.0 893.7 833.0 900.9 818.0 908.2 C803.0 915.5 788.0 923.0 773.0 930.5 C758.0 938.1 743.0 945.7 728.0 953.5 C713.0 961.3 698.0 969.2 683.0 977.1 C668.0 985.1 653.0 993.2 638.0 1001.5 C623.0 1009.7 608.0 1019.2 593.0 1026.4 C578.0 1033.7 563.0 1039.3 548.0 1044.8 C533.0 1050.3 518.0 1054.7 503.0 1059.7 C488.0 1064.6 473.0 1069.5 458.0 1074.5 C443.0 1079.5 428.0 1084.4 413.0 1089.4 C398.0 1094.3 383.0 1099.2 368.0 1104.2 C353.0 1109.2 338.0 1114.1 323.0 1119.1 C308.0 1124.0 293.0 1129.0 278.0 1133.9 C263.0 1138.9 248.0 1143.8 233.0 1148.8 C218.0 1153.7 203.0 1158.7 188.0 1163.6 C173.0 1168.6 158.0 1173.5 143.0 1178.5 C128.0 1183.4 113.0 1188.4 98.0 1193.3 C83.0 1198.3 68.0 1203.2 53.0 1208.2 C38.0 1213.1 23.0 1218.0 8.0 1223.0 C-7.0 1228.0 -22.0 1232.9 -37.0 1237.9 C-52.0 1242.8 -67.0 1247.8 -82.0 1252.7 C-97.0 1257.7 -119.5 1265.1 -127.0 1267.6"/><path d="M1228.0 753.7 C1220.5 756.5 1198.0 764.9 1183.0 770.7 C1168.0 776.5 1153.0 782.3 1138.0 788.3 C1123.0 794.3 1108.0 800.4 1093.0 806.6 C1078.0 812.9 1063.0 819.2 1048.0 825.6 C1033.0 832.1 1018.0 838.6 1003.0 845.3 C988.0 851.9 973.0 858.7 958.0 865.6 C943.0 872.5 928.0 879.5 913.0 886.6 C898.0 893.7 883.0 900.9 868.0 908.2 C853.0 915.5 838.0 923.0 823.0 930.5 C808.0 938.1 793.0 945.7 778.0 953.5 C763.0 961.3 748.0 969.2 733.0 977.1 C718.0 985.1 703.0 993.2 688.0 1001.5 C673.0 1009.7 658.0 1019.2 643.0 1026.4 C628.0 1033.7 613.0 1039.3 598.0 1044.8 C583.0 1050.3 568.0 1054.7 553.0 1059.7 C538.0 1064.6 523.0 1069.5 508.0 1074.5 C493.0 1079.5 478.0 1084.4 463.0 1089.4 C448.0 1094.3 433.0 1099.2 418.0 1104.2 C403.0 1109.2 388.0 1114.1 373.0 1119.1 C358.0 1124.0 343.0 1129.0 328.0 1133.9 C313.0 1138.9 298.0 1143.8 283.0 1148.8 C268.0 1153.7 253.0 1158.7 238.0 1163.6 C223.0 1168.6 208.0 1173.5 193.0 1178.5 C178.0 1183.4 163.0 1188.4 148.0 1193.3 C133.0 1198.3 118.0 1203.2 103.0 1208.2 C88.0 1213.1 73.0 1218.0 58.0 1223.0 C43.0 1228.0 28.0 1232.9 13.0 1237.9 C-2.0 1242.8 -17.0 1247.8 -32.0 1252.7 C-47.0 1257.7 -69.5 1265.1 -77.0 1267.6"/><path d="M1278.0 753.7 C1270.5 756.5 1248.0 764.9 1233.0 770.7 C1218.0 776.5 1203.0 782.3 1188.0 788.3 C1173.0 794.3 1158.0 800.4 1143.0 806.6 C1128.0 812.9 1113.0 819.2 1098.0 825.6 C1083.0 832.1 1068.0 838.6 1053.0 845.3 C1038.0 851.9 1023.0 858.7 1008.0 865.6 C993.0 872.5 978.0 879.5 963.0 886.6 C948.0 893.7 933.0 900.9 918.0 908.2 C903.0 915.5 888.0 923.0 873.0 930.5 C858.0 938.1 843.0 945.7 828.0 953.5 C813.0 961.3 798.0 969.2 783.0 977.1 C768.0 985.1 753.0 993.2 738.0 1001.5 C723.0 1009.7 708.0 1019.2 693.0 1026.4 C678.0 1033.7 663.0 1039.3 648.0 1044.8 C633.0 1050.3 618.0 1054.7 603.0 1059.7 C588.0 1064.6 573.0 1069.5 558.0 1074.5 C543.0 1079.5 528.0 1084.4 513.0 1089.4 C498.0 1094.3 483.0 1099.2 468.0 1104.2 C453.0 1109.2 438.0 1114.1 423.0 1119.1 C408.0 1124.0 393.0 1129.0 378.0 1133.9 C363.0 1138.9 348.0 1143.8 333.0 1148.8 C318.0 1153.7 303.0 1158.7 288.0 1163.6 C273.0 1168.6 258.0 1173.5 243.0 1178.5 C228.0 1183.4 213.0 1188.4 198.0 1193.3 C183.0 1198.3 168.0 1203.2 153.0 1208.2 C138.0 1213.1 123.0 1218.0 108.0 1223.0 C93.0 1228.0 78.0 1232.9 63.0 1237.9 C48.0 1242.8 33.0 1247.8 18.0 1252.7 C3.0 1257.7 -19.5 1265.1 -27.0 1267.6"/><path d="M1328.0 753.7 C1320.5 756.5 1298.0 764.9 1283.0 770.7 C1268.0 776.5 1253.0 782.3 1238.0 788.3 C1223.0 794.3 1208.0 800.4 1193.0 806.6 C1178.0 812.9 1163.0 819.2 1148.0 825.6 C1133.0 832.1 1118.0 838.6 1103.0 845.3 C1088.0 851.9 1073.0 858.7 1058.0 865.6 C1043.0 872.5 1028.0 879.5 1013.0 886.6 C998.0 893.7 983.0 900.9 968.0 908.2 C953.0 915.5 938.0 923.0 923.0 930.5 C908.0 938.1 893.0 945.7 878.0 953.5 C863.0 961.3 848.0 969.2 833.0 977.1 C818.0 985.1 803.0 993.2 788.0 1001.5 C773.0 1009.7 758.0 1019.2 743.0 1026.4 C728.0 1033.7 713.0 1039.3 698.0 1044.8 C683.0 1050.3 668.0 1054.7 653.0 1059.7 C638.0 1064.6 623.0 1069.5 608.0 1074.5 C593.0 1079.5 578.0 1084.4 563.0 1089.4 C548.0 1094.3 533.0 1099.2 518.0 1104.2 C503.0 1109.2 488.0 1114.1 473.0 1119.1 C458.0 1124.0 443.0 1129.0 428.0 1133.9 C413.0 1138.9 398.0 1143.8 383.0 1148.8 C368.0 1153.7 353.0 1158.7 338.0 1163.6 C323.0 1168.6 308.0 1173.5 293.0 1178.5 C278.0 1183.4 263.0 1188.4 248.0 1193.3 C233.0 1198.3 218.0 1203.2 203.0 1208.2 C188.0 1213.1 173.0 1218.0 158.0 1223.0 C143.0 1228.0 128.0 1232.9 113.0 1237.9 C98.0 1242.8 83.0 1247.8 68.0 1252.7 C53.0 1257.7 30.5 1265.1 23.0 1267.6"/><path d="M1378.0 753.7 C1370.5 756.5 1348.0 764.9 1333.0 770.7 C1318.0 776.5 1303.0 782.3 1288.0 788.3 C1273.0 794.3 1258.0 800.4 1243.0 806.6 C1228.0 812.9 1213.0 819.2 1198.0 825.6 C1183.0 832.1 1168.0 838.6 1153.0 845.3 C1138.0 851.9 1123.0 858.7 1108.0 865.6 C1093.0 872.5 1078.0 879.5 1063.0 886.6 C1048.0 893.7 1033.0 900.9 1018.0 908.2 C1003.0 915.5 988.0 923.0 973.0 930.5 C958.0 938.1 943.0 945.7 928.0 953.5 C913.0 961.3 898.0 969.2 883.0 977.1 C868.0 985.1 853.0 993.2 838.0 1001.5 C823.0 1009.7 808.0 1019.2 793.0 1026.4 C778.0 1033.7 763.0 1039.3 748.0 1044.8 C733.0 1050.3 718.0 1054.7 703.0 1059.7 C688.0 1064.6 673.0 1069.5 658.0 1074.5 C643.0 1079.5 628.0 1084.4 613.0 1089.4 C598.0 1094.3 583.0 1099.2 568.0 1104.2 C553.0 1109.2 538.0 1114.1 523.0 1119.1 C508.0 1124.0 493.0 1129.0 478.0 1133.9 C463.0 1138.9 448.0 1143.8 433.0 1148.8 C418.0 1153.7 403.0 1158.7 388.0 1163.6 C373.0 1168.6 358.0 1173.5 343.0 1178.5 C328.0 1183.4 313.0 1188.4 298.0 1193.3 C283.0 1198.3 268.0 1203.2 253.0 1208.2 C238.0 1213.1 223.0 1218.0 208.0 1223.0 C193.0 1228.0 178.0 1232.9 163.0 1237.9 C148.0 1242.8 133.0 1247.8 118.0 1252.7 C103.0 1257.7 80.5 1265.1 73.0 1267.6"/><path d="M1428.0 753.7 C1420.5 756.5 1398.0 764.9 1383.0 770.7 C1368.0 776.5 1353.0 782.3 1338.0 788.3 C1323.0 794.3 1308.0 800.4 1293.0 806.6 C1278.0 812.9 1263.0 819.2 1248.0 825.6 C1233.0 832.1 1218.0 838.6 1203.0 845.3 C1188.0 851.9 1173.0 858.7 1158.0 865.6 C1143.0 872.5 1128.0 879.5 1113.0 886.6 C1098.0 893.7 1083.0 900.9 1068.0 908.2 C1053.0 915.5 1038.0 923.0 1023.0 930.5 C1008.0 938.1 993.0 945.7 978.0 953.5 C963.0 961.3 948.0 969.2 933.0 977.1 C918.0 985.1 903.0 993.2 888.0 1001.5 C873.0 1009.7 858.0 1019.2 843.0 1026.4 C828.0 1033.7 813.0 1039.3 798.0 1044.8 C783.0 1050.3 768.0 1054.7 753.0 1059.7 C738.0 1064.6 723.0 1069.5 708.0 1074.5 C693.0 1079.5 678.0 1084.4 663.0 1089.4 C648.0 1094.3 633.0 1099.2 618.0 1104.2 C603.0 1109.2 588.0 1114.1 573.0 1119.1 C558.0 1124.0 543.0 1129.0 528.0 1133.9 C513.0 1138.9 498.0 1143.8 483.0 1148.8 C468.0 1153.7 453.0 1158.7 438.0 1163.6 C423.0 1168.6 408.0 1173.5 393.0 1178.5 C378.0 1183.4 363.0 1188.4 348.0 1193.3 C333.0 1198.3 318.0 1203.2 303.0 1208.2 C288.0 1213.1 273.0 1218.0 258.0 1223.0 C243.0 1228.0 228.0 1232.9 213.0 1237.9 C198.0 1242.8 183.0 1247.8 168.0 1252.7 C153.0 1257.7 130.5 1265.1 123.0 1267.6"/><path d="M1478.0 753.7 C1470.5 756.5 1448.0 764.9 1433.0 770.7 C1418.0 776.5 1403.0 782.3 1388.0 788.3 C1373.0 794.3 1358.0 800.4 1343.0 806.6 C1328.0 812.9 1313.0 819.2 1298.0 825.6 C1283.0 832.1 1268.0 838.6 1253.0 845.3 C1238.0 851.9 1223.0 858.7 1208.0 865.6 C1193.0 872.5 1178.0 879.5 1163.0 886.6 C1148.0 893.7 1133.0 900.9 1118.0 908.2 C1103.0 915.5 1088.0 923.0 1073.0 930.5 C1058.0 938.1 1043.0 945.7 1028.0 953.5 C1013.0 961.3 998.0 969.2 983.0 977.1 C968.0 985.1 953.0 993.2 938.0 1001.5 C923.0 1009.7 908.0 1019.2 893.0 1026.4 C878.0 1033.7 863.0 1039.3 848.0 1044.8 C833.0 1050.3 818.0 1054.7 803.0 1059.7 C788.0 1064.6 773.0 1069.5 758.0 1074.5 C743.0 1079.5 728.0 1084.4 713.0 1089.4 C698.0 1094.3 683.0 1099.2 668.0 1104.2 C653.0 1109.2 638.0 1114.1 623.0 1119.1 C608.0 1124.0 593.0 1129.0 578.0 1133.9 C563.0 1138.9 548.0 1143.8 533.0 1148.8 C518.0 1153.7 503.0 1158.7 488.0 1163.6 C473.0 1168.6 458.0 1173.5 443.0 1178.5 C428.0 1183.4 413.0 1188.4 398.0 1193.3 C383.0 1198.3 368.0 1203.2 353.0 1208.2 C338.0 1213.1 323.0 1218.0 308.0 1223.0 C293.0 1228.0 278.0 1232.9 263.0 1237.9 C248.0 1242.8 233.0 1247.8 218.0 1252.7 C203.0 1257.7 180.5 1265.1 173.0 1267.6"/><path d="M1528.0 753.7 C1520.5 756.5 1498.0 764.9 1483.0 770.7 C1468.0 776.5 1453.0 782.3 1438.0 788.3 C1423.0 794.3 1408.0 800.4 1393.0 806.6 C1378.0 812.9 1363.0 819.2 1348.0 825.6 C1333.0 832.1 1318.0 838.6 1303.0 845.3 C1288.0 851.9 1273.0 858.7 1258.0 865.6 C1243.0 872.5 1228.0 879.5 1213.0 886.6 C1198.0 893.7 1183.0 900.9 1168.0 908.2 C1153.0 915.5 1138.0 923.0 1123.0 930.5 C1108.0 938.1 1093.0 945.7 1078.0 953.5 C1063.0 961.3 1048.0 969.2 1033.0 977.1 C1018.0 985.1 1003.0 993.2 988.0 1001.5 C973.0 1009.7 958.0 1019.2 943.0 1026.4 C928.0 1033.7 913.0 1039.3 898.0 1044.8 C883.0 1050.3 868.0 1054.7 853.0 1059.7 C838.0 1064.6 823.0 1069.5 808.0 1074.5 C793.0 1079.5 778.0 1084.4 763.0 1089.4 C748.0 1094.3 733.0 1099.2 718.0 1104.2 C703.0 1109.2 688.0 1114.1 673.0 1119.1 C658.0 1124.0 643.0 1129.0 628.0 1133.9 C613.0 1138.9 598.0 1143.8 583.0 1148.8 C568.0 1153.7 553.0 1158.7 538.0 1163.6 C523.0 1168.6 508.0 1173.5 493.0 1178.5 C478.0 1183.4 463.0 1188.4 448.0 1193.3 C433.0 1198.3 418.0 1203.2 403.0 1208.2 C388.0 1213.1 373.0 1218.0 358.0 1223.0 C343.0 1228.0 328.0 1232.9 313.0 1237.9 C298.0 1242.8 283.0 1247.8 268.0 1252.7 C253.0 1257.7 230.5 1265.1 223.0 1267.6"/><path d="M1578.0 753.7 C1570.5 756.5 1548.0 764.9 1533.0 770.7 C1518.0 776.5 1503.0 782.3 1488.0 788.3 C1473.0 794.3 1458.0 800.4 1443.0 806.6 C1428.0 812.9 1413.0 819.2 1398.0 825.6 C1383.0 832.1 1368.0 838.6 1353.0 845.3 C1338.0 851.9 1323.0 858.7 1308.0 865.6 C1293.0 872.5 1278.0 879.5 1263.0 886.6 C1248.0 893.7 1233.0 900.9 1218.0 908.2 C1203.0 915.5 1188.0 923.0 1173.0 930.5 C1158.0 938.1 1143.0 945.7 1128.0 953.5 C1113.0 961.3 1098.0 969.2 1083.0 977.1 C1068.0 985.1 1053.0 993.2 1038.0 1001.5 C1023.0 1009.7 1008.0 1019.2 993.0 1026.4 C978.0 1033.7 963.0 1039.3 948.0 1044.8 C933.0 1050.3 918.0 1054.7 903.0 1059.7 C888.0 1064.6 873.0 1069.5 858.0 1074.5 C843.0 1079.5 828.0 1084.4 813.0 1089.4 C798.0 1094.3 783.0 1099.2 768.0 1104.2 C753.0 1109.2 738.0 1114.1 723.0 1119.1 C708.0 1124.0 693.0 1129.0 678.0 1133.9 C663.0 1138.9 648.0 1143.8 633.0 1148.8 C618.0 1153.7 603.0 1158.7 588.0 1163.6 C573.0 1168.6 558.0 1173.5 543.0 1178.5 C528.0 1183.4 513.0 1188.4 498.0 1193.3 C483.0 1198.3 468.0 1203.2 453.0 1208.2 C438.0 1213.1 423.0 1218.0 408.0 1223.0 C393.0 1228.0 378.0 1232.9 363.0 1237.9 C348.0 1242.8 333.0 1247.8 318.0 1252.7 C303.0 1257.7 280.5 1265.1 273.0 1267.6"/><path d="M1628.0 753.7 C1620.5 756.5 1598.0 764.9 1583.0 770.7 C1568.0 776.5 1553.0 782.3 1538.0 788.3 C1523.0 794.3 1508.0 800.4 1493.0 806.6 C1478.0 812.9 1463.0 819.2 1448.0 825.6 C1433.0 832.1 1418.0 838.6 1403.0 845.3 C1388.0 851.9 1373.0 858.7 1358.0 865.6 C1343.0 872.5 1328.0 879.5 1313.0 886.6 C1298.0 893.7 1283.0 900.9 1268.0 908.2 C1253.0 915.5 1238.0 923.0 1223.0 930.5 C1208.0 938.1 1193.0 945.7 1178.0 953.5 C1163.0 961.3 1148.0 969.2 1133.0 977.1 C1118.0 985.1 1103.0 993.2 1088.0 1001.5 C1073.0 1009.7 1058.0 1019.2 1043.0 1026.4 C1028.0 1033.7 1013.0 1039.3 998.0 1044.8 C983.0 1050.3 968.0 1054.7 953.0 1059.7 C938.0 1064.6 923.0 1069.5 908.0 1074.5 C893.0 1079.5 878.0 1084.4 863.0 1089.4 C848.0 1094.3 833.0 1099.2 818.0 1104.2 C803.0 1109.2 788.0 1114.1 773.0 1119.1 C758.0 1124.0 743.0 1129.0 728.0 1133.9 C713.0 1138.9 698.0 1143.8 683.0 1148.8 C668.0 1153.7 653.0 1158.7 638.0 1163.6 C623.0 1168.6 608.0 1173.5 593.0 1178.5 C578.0 1183.4 563.0 1188.4 548.0 1193.3 C533.0 1198.3 518.0 1203.2 503.0 1208.2 C488.0 1213.1 473.0 1218.0 458.0 1223.0 C443.0 1228.0 428.0 1232.9 413.0 1237.9 C398.0 1242.8 383.0 1247.8 368.0 1252.7 C353.0 1257.7 330.5 1265.1 323.0 1267.6"/><path d="M1700.0 753.7 C1692.5 756.5 1670.0 764.9 1655.0 770.7 C1640.0 776.5 1625.0 782.3 1610.0 788.3 C1595.0 794.3 1580.0 800.4 1565.0 806.6 C1550.0 812.9 1535.0 819.2 1520.0 825.6 C1505.0 832.1 1490.0 838.6 1475.0 845.3 C1460.0 851.9 1445.0 858.7 1430.0 865.6 C1415.0 872.5 1400.0 879.5 1385.0 886.6 C1370.0 893.7 1355.0 900.9 1340.0 908.2 C1325.0 915.5 1310.0 923.0 1295.0 930.5 C1280.0 938.1 1265.0 945.7 1250.0 953.5 C1235.0 961.3 1220.0 969.2 1205.0 977.1 C1190.0 985.1 1175.0 993.2 1160.0 1001.5 C1145.0 1009.7 1130.0 1019.2 1115.0 1026.4 C1100.0 1033.7 1085.0 1039.3 1070.0 1044.8 C1055.0 1050.3 1040.0 1054.7 1025.0 1059.7 C1010.0 1064.6 995.0 1069.5 980.0 1074.5 C965.0 1079.5 950.0 1084.4 935.0 1089.4 C920.0 1094.3 905.0 1099.2 890.0 1104.2 C875.0 1109.2 860.0 1114.1 845.0 1119.1 C830.0 1124.0 815.0 1129.0 800.0 1133.9 C785.0 1138.9 770.0 1143.8 755.0 1148.8 C740.0 1153.7 725.0 1158.7 710.0 1163.6 C695.0 1168.6 680.0 1173.5 665.0 1178.5 C650.0 1183.4 635.0 1188.4 620.0 1193.3 C605.0 1198.3 590.0 1203.2 575.0 1208.2 C560.0 1213.1 545.0 1218.0 530.0 1223.0 C515.0 1228.0 500.0 1232.9 485.0 1237.9 C470.0 1242.8 455.0 1247.8 440.0 1252.7 C425.0 1257.7 402.5 1265.1 395.0 1267.6"/><path d="M1780.0 753.7 C1772.5 756.5 1750.0 764.9 1735.0 770.7 C1720.0 776.5 1705.0 782.3 1690.0 788.3 C1675.0 794.3 1660.0 800.4 1645.0 806.6 C1630.0 812.9 1615.0 819.2 1600.0 825.6 C1585.0 832.1 1570.0 838.6 1555.0 845.3 C1540.0 851.9 1525.0 858.7 1510.0 865.6 C1495.0 872.5 1480.0 879.5 1465.0 886.6 C1450.0 893.7 1435.0 900.9 1420.0 908.2 C1405.0 915.5 1390.0 923.0 1375.0 930.5 C1360.0 938.1 1345.0 945.7 1330.0 953.5 C1315.0 961.3 1300.0 969.2 1285.0 977.1 C1270.0 985.1 1255.0 993.2 1240.0 1001.5 C1225.0 1009.7 1210.0 1019.2 1195.0 1026.4 C1180.0 1033.7 1165.0 1039.3 1150.0 1044.8 C1135.0 1050.3 1120.0 1054.7 1105.0 1059.7 C1090.0 1064.6 1075.0 1069.5 1060.0 1074.5 C1045.0 1079.5 1030.0 1084.4 1015.0 1089.4 C1000.0 1094.3 985.0 1099.2 970.0 1104.2 C955.0 1109.2 940.0 1114.1 925.0 1119.1 C910.0 1124.0 895.0 1129.0 880.0 1133.9 C865.0 1138.9 850.0 1143.8 835.0 1148.8 C820.0 1153.7 805.0 1158.7 790.0 1163.6 C775.0 1168.6 760.0 1173.5 745.0 1178.5 C730.0 1183.4 715.0 1188.4 700.0 1193.3 C685.0 1198.3 670.0 1203.2 655.0 1208.2 C640.0 1213.1 625.0 1218.0 610.0 1223.0 C595.0 1228.0 580.0 1232.9 565.0 1237.9 C550.0 1242.8 535.0 1247.8 520.0 1252.7 C505.0 1257.7 482.5 1265.1 475.0 1267.6"/></g>
<path d="M528.7 109.0 C528.7 147.5 528.4 294.8 528.7 340.0 C529.0 385.2 529.8 368.8 530.5 380.0 C531.2 391.2 530.9 394.2 533.0 407.0 C535.1 419.8 539.4 442.0 543.0 457.0 C546.6 472.0 550.0 484.3 554.7 497.0 C559.4 509.7 567.3 524.7 571.3 533.0 C575.3 541.3 574.5 540.3 578.7 547.0 C582.9 553.7 589.2 563.2 596.3 573.0 C603.4 582.8 614.3 597.3 621.3 606.0 C628.2 614.7 632.4 618.7 638.0 625.0 C643.6 631.3 646.4 636.2 654.7 644.0 C663.0 651.8 680.5 665.7 688.0 672.0 C695.5 678.3 692.2 676.7 700.0 682.0 C707.8 687.3 720.0 696.3 735.0 704.0 C750.0 711.7 773.7 722.0 790.0 728.0 C806.3 734.0 818.5 736.5 833.0 740.0 C847.5 743.5 862.5 746.6 877.0 748.7 C891.5 750.8 907.7 751.9 920.0 752.7 C932.3 753.5 904.3 753.5 951.0 753.7 C997.7 753.9 1111.7 753.7 1200.0 753.7 C1288.3 753.7 1434.2 753.7 1481.0 753.7 L1481 109 L528.7 109 Z" fill="#3cff3c"/>
<path d="M931.5 100 L931.5 105.5 A249.5 249.5 0 0 0 1181 355.3 L1490 355.3 L1490 100 Z" fill="url(#navy)"/>
<defs><clipPath id="faceclip"><path d="M528.7 109.0 C528.7 147.5 528.4 294.8 528.7 340.0 C529.0 385.2 529.8 368.8 530.5 380.0 C531.2 391.2 530.9 394.2 533.0 407.0 C535.1 419.8 539.4 442.0 543.0 457.0 C546.6 472.0 550.0 484.3 554.7 497.0 C559.4 509.7 567.3 524.7 571.3 533.0 C575.3 541.3 574.5 540.3 578.7 547.0 C582.9 553.7 589.2 563.2 596.3 573.0 C603.4 582.8 614.3 597.3 621.3 606.0 C628.2 614.7 632.4 618.7 638.0 625.0 C643.6 631.3 646.4 636.2 654.7 644.0 C663.0 651.8 680.5 665.7 688.0 672.0 C695.5 678.3 692.2 676.7 700.0 682.0 C707.8 687.3 720.0 696.3 735.0 704.0 C750.0 711.7 773.7 722.0 790.0 728.0 C806.3 734.0 818.5 736.5 833.0 740.0 C847.5 743.5 862.5 746.6 877.0 748.7 C891.5 750.8 907.7 751.9 920.0 752.7 C932.3 753.5 904.3 753.5 951.0 753.7 C997.7 753.9 1111.7 753.7 1200.0 753.7 C1288.3 753.7 1434.2 753.7 1481.0 753.7 L1481 109 L528.7 109 Z"/></clipPath></defs>
<g clip-path="url(#faceclip)" fill="none" stroke="#063806" stroke-width="1.15" stroke-opacity="0.95"><path d="M754.5 753.0 L754.4 745.3 L754.0 737.6 L753.3 729.9 L752.4 722.2 L751.2 714.6 L749.8 707.0 L748.1 699.5 L746.1 692.0 L743.9 684.6 L741.5 677.3 L738.7 670.1 L735.8 663.0 L732.6 655.9 L729.2 649.0 L725.5 642.2 L721.6 635.6 L717.5 629.0 L713.1 622.7 L708.6 616.4 L703.8 610.4 L698.8 604.5 L693.7 598.7 L688.3 593.2 L682.8 587.8 L677.0 582.7 L671.1 577.7 L665.1 572.9 L658.8 568.4 L652.5 564.0 L645.9 559.9 L639.3 556.0 L632.5 552.3 L625.6 548.9 L618.5 545.7 L611.4 542.8 L604.2 540.0 L596.9 537.6 L589.5 535.4 L582.0 533.4 L574.5 531.7 L566.9 530.3 L559.3 529.1 L551.6 528.2 L543.9 527.5 L536.2 527.1 L528.5 527.0"/><path d="M773.5 753.0 L773.4 744.6 L772.9 736.3 L772.2 727.9 L771.2 719.6 L769.9 711.4 L768.4 703.2 L766.5 695.0 L764.4 686.9 L762.0 678.9 L759.4 671.0 L756.4 663.1 L753.2 655.4 L749.8 647.8 L746.0 640.3 L742.1 632.9 L737.8 625.7 L733.4 618.6 L728.7 611.7 L723.7 605.0 L718.5 598.4 L713.2 592.0 L707.6 585.8 L701.7 579.8 L695.7 573.9 L689.5 568.3 L683.1 563.0 L676.5 557.8 L669.8 552.8 L662.9 548.1 L655.8 543.7 L648.6 539.4 L641.2 535.5 L633.7 531.7 L626.1 528.3 L618.4 525.1 L610.5 522.1 L602.6 519.5 L594.6 517.1 L586.5 515.0 L578.3 513.1 L570.1 511.6 L561.9 510.3 L553.6 509.3 L545.2 508.6 L536.9 508.1 L528.5 508.0"/><path d="M794.5 753.0 L794.3 743.9 L793.9 734.8 L793.1 725.8 L792.0 716.8 L790.6 707.8 L788.9 698.9 L786.9 690.0 L784.6 681.2 L782.0 672.5 L779.1 663.9 L776.0 655.4 L772.5 647.0 L768.7 638.8 L764.7 630.6 L760.4 622.6 L755.8 614.8 L750.9 607.1 L745.8 599.6 L740.5 592.3 L734.8 585.1 L729.0 578.2 L722.9 571.4 L716.6 564.9 L710.1 558.6 L703.3 552.5 L696.4 546.7 L689.2 541.0 L681.9 535.7 L674.4 530.6 L666.7 525.7 L658.9 521.1 L650.9 516.8 L642.7 512.8 L634.5 509.0 L626.1 505.5 L617.6 502.4 L609.0 499.5 L600.3 496.9 L591.5 494.6 L582.6 492.6 L573.7 490.9 L564.7 489.5 L555.7 488.4 L546.7 487.6 L537.6 487.2 L528.5 487.0"/><path d="M830.5 753.0 L830.3 742.7 L829.8 732.4 L828.9 722.1 L827.7 711.9 L826.1 701.7 L824.2 691.6 L821.9 681.5 L819.3 671.5 L816.3 661.6 L813.1 651.9 L809.4 642.2 L805.5 632.7 L801.2 623.3 L796.6 614.1 L791.7 605.0 L786.5 596.1 L781.0 587.4 L775.2 578.8 L769.1 570.5 L762.8 562.4 L756.1 554.5 L749.2 546.9 L742.0 539.5 L734.6 532.3 L727.0 525.4 L719.1 518.7 L711.0 512.4 L702.7 506.3 L694.1 500.5 L685.4 495.0 L676.5 489.8 L667.4 484.9 L658.2 480.3 L648.8 476.0 L639.3 472.1 L629.6 468.4 L619.9 465.2 L610.0 462.2 L600.0 459.6 L589.9 457.3 L579.8 455.4 L569.6 453.8 L559.4 452.6 L549.1 451.7 L538.8 451.2 L528.5 451.0"/><path d="M879.5 753.0 L879.3 741.0 L878.7 729.0 L877.7 717.1 L876.2 705.2 L874.4 693.4 L872.2 681.6 L869.5 669.9 L866.5 658.3 L863.1 646.8 L859.2 635.5 L855.0 624.2 L850.4 613.2 L845.5 602.3 L840.1 591.5 L834.5 581.0 L828.4 570.6 L822.0 560.5 L815.3 550.6 L808.2 540.9 L800.8 531.5 L793.1 522.3 L785.0 513.4 L776.7 504.8 L768.1 496.5 L759.2 488.4 L750.0 480.7 L740.6 473.3 L730.9 466.2 L721.0 459.5 L710.9 453.1 L700.5 447.0 L690.0 441.4 L679.2 436.0 L668.3 431.1 L657.3 426.5 L646.0 422.3 L634.7 418.4 L623.2 415.0 L611.6 412.0 L599.9 409.3 L588.1 407.1 L576.3 405.3 L564.4 403.8 L552.5 402.8 L540.5 402.2 L528.5 402.0"/><path d="M928.5 753.0 L928.3 739.3 L927.6 725.7 L926.4 712.1 L924.8 698.5 L922.7 685.0 L920.1 671.6 L917.1 658.3 L913.7 645.1 L909.8 632.0 L905.4 619.0 L900.6 606.3 L895.4 593.6 L889.7 581.2 L883.7 569.0 L877.2 557.0 L870.3 545.2 L863.0 533.6 L855.3 522.3 L847.2 511.3 L838.8 500.6 L830.0 490.1 L820.8 480.0 L811.3 470.2 L801.5 460.7 L791.4 451.5 L780.9 442.7 L770.2 434.3 L759.2 426.2 L747.9 418.5 L736.3 411.2 L724.5 404.3 L712.5 397.8 L700.3 391.8 L687.9 386.1 L675.2 380.9 L662.5 376.1 L649.5 371.7 L636.4 367.8 L623.2 364.4 L609.9 361.4 L596.5 358.8 L583.0 356.7 L569.4 355.1 L555.8 353.9 L542.2 353.2 L528.5 353.0"/><path d="M994.5 753.0 L994.2 737.1 L993.4 721.2 L992.1 705.3 L990.2 689.5 L987.7 673.8 L984.8 658.2 L981.3 642.7 L977.2 627.3 L972.7 612.0 L967.6 596.9 L962.0 582.0 L955.9 567.3 L949.3 552.9 L942.3 538.6 L934.7 524.6 L926.7 510.9 L918.2 497.4 L909.2 484.3 L899.8 471.4 L890.0 458.9 L879.7 446.7 L869.1 434.9 L858.0 423.5 L846.6 412.4 L834.8 401.8 L822.6 391.5 L810.1 381.7 L797.2 372.3 L784.1 363.3 L770.6 354.8 L756.9 346.8 L742.9 339.2 L728.6 332.2 L714.2 325.6 L699.5 319.5 L684.6 313.9 L669.5 308.8 L654.2 304.3 L638.8 300.2 L623.3 296.7 L607.7 293.8 L592.0 291.3 L576.2 289.4 L560.3 288.1 L544.4 287.3 L528.5 287.0"/><path d="M1061.5 753.0 L1061.2 734.8 L1060.3 716.6 L1058.7 698.5 L1056.5 680.4 L1053.7 662.4 L1050.4 644.6 L1046.3 626.8 L1041.7 609.2 L1036.5 591.8 L1030.7 574.5 L1024.3 557.5 L1017.4 540.7 L1009.8 524.1 L1001.7 507.8 L993.1 491.8 L983.9 476.1 L974.2 460.7 L963.9 445.6 L953.2 430.9 L942.0 416.6 L930.2 402.7 L918.0 389.2 L905.4 376.1 L892.3 363.5 L878.8 351.3 L864.9 339.5 L850.6 328.3 L835.9 317.6 L820.8 307.3 L805.4 297.6 L789.7 288.4 L773.7 279.8 L757.4 271.7 L740.8 264.1 L724.0 257.2 L707.0 250.8 L689.7 245.0 L672.3 239.8 L654.7 235.2 L636.9 231.1 L619.1 227.8 L601.1 225.0 L583.0 222.8 L564.9 221.2 L546.7 220.3 L528.5 220.0"/><path d="M1128.5 753.0 L1128.2 732.5 L1127.1 712.1 L1125.4 691.6 L1122.9 671.3 L1119.8 651.1 L1116.0 630.9 L1111.4 610.9 L1106.3 591.1 L1100.4 571.5 L1093.9 552.1 L1086.7 532.9 L1078.8 514.0 L1070.3 495.3 L1061.2 477.0 L1051.5 458.9 L1041.2 441.2 L1030.2 423.9 L1018.7 407.0 L1006.6 390.5 L993.9 374.3 L980.7 358.7 L967.0 343.5 L952.8 328.7 L938.0 314.5 L922.8 300.8 L907.2 287.6 L891.0 274.9 L874.5 262.8 L857.6 251.3 L840.3 240.3 L822.6 230.0 L804.5 220.3 L786.2 211.2 L767.5 202.7 L748.6 194.8 L729.4 187.6 L710.0 181.1 L690.4 175.2 L670.6 170.1 L650.6 165.5 L630.4 161.7 L610.2 158.6 L589.9 156.1 L569.4 154.4 L549.0 153.3 L528.5 153.0"/><path d="M700.0 96.0 L746.7 109.7 L843.3 148.0 L896.7 214.7 L946.7 269.7 L998.3 324.0 L1054.0 373.3 L1122.3 421.0 L1156.7 495.0 L1180.0 561.7 L1193.0 616.7 L1203.0 680.0 L1207.0 753.0"/><path d="M552.6 539.2 L560.3 471.1 L567.9 403.1 L575.8 335.0 L584.4 267.1 L593.1 199.2 L601.6 131.2 L609.9 63.2 L617.9 -4.8 L625.9 -72.8 L633.9 -140.8"/><path d="M576.4 543.2 L591.6 476.4 L606.9 409.7 L622.3 343.0 L638.5 276.4 L654.7 209.9 L670.8 143.3 L686.6 76.7 L702.2 10.0 L717.8 -56.7 L733.4 -123.4"/><path d="M599.6 549.9 L615.6 504.1 L631.6 458.4 L647.6 412.6 L663.9 366.9 L681.8 321.8 L699.8 276.8 L718.0 231.8 L736.2 186.8 L753.5 141.6 L770.6 96.2"/><path d="M621.9 559.1 L642.1 517.1 L662.4 475.0 L682.6 432.9 L703.0 390.9 L725.7 350.1 L748.6 309.3 L771.8 268.7 L795.0 228.1 L817.3 187.1 L843.3 148.0"/><path d="M643.0 570.8 L666.2 533.8 L689.5 496.8 L712.7 459.8 L735.9 422.8 L761.3 387.2 L787.6 352.2 L814.1 317.3 L840.7 282.5 L867.1 247.7 L896.7 214.7"/><path d="M662.7 584.7 L689.1 551.6 L715.5 518.5 L741.9 485.3 L768.4 452.2 L796.7 420.6 L826.6 390.3 L856.5 360.0 L886.6 330.0 L916.9 300.1 L946.7 269.7"/><path d="M680.7 600.8 L710.4 571.1 L740.2 541.3 L769.9 511.6 L799.7 481.8 L831.4 454.0 L864.8 428.0 L898.3 402.1 L932.0 376.5 L965.8 351.1 L998.3 324.0"/><path d="M696.8 618.8 L730.6 591.8 L764.4 564.9 L798.3 537.9 L832.1 510.9 L868.3 486.9 L905.7 464.6 L943.3 442.5 L981.0 420.6 L1018.6 398.8 L1054.0 373.3"/><path d="M710.7 638.5 L750.1 613.8 L789.4 589.0 L828.8 564.3 L868.2 539.7 L910.6 519.9 L953.3 500.6 L996.1 481.8 L1039.0 463.1 L1080.9 442.8 L1122.3 421.0"/><path d="M722.4 659.6 L764.2 639.5 L806.0 619.4 L847.7 599.3 L889.6 579.2 L933.8 564.3 L978.3 550.0 L1022.9 536.1 L1067.5 522.4 L1111.3 506.9 L1156.2 495.0"/><path d="M731.6 681.9 L775.4 666.6 L819.2 651.3 L863.0 636.0 L906.8 620.7 L952.4 610.9 L998.2 601.6 L1044.1 592.8 L1089.9 584.1 L1135.2 573.7 L1180.3 561.7"/><path d="M738.3 705.1 L783.4 694.8 L828.5 684.5 L873.7 674.2 L918.8 664.0 L965.2 659.3 L1011.6 655.2 L1058.0 651.6 L1104.5 648.1 L1150.5 642.9 L1196.5 636.8"/><path d="M742.3 728.9 L788.3 723.7 L834.3 718.5 L880.3 713.4 L926.3 708.2 L972.9 708.7 L1019.5 709.9 L1066.1 711.5 L1112.6 713.3 L1159.0 713.2 L1205.3 712.4"/><path d="M843.3 148.0 L850.0 105.0"/><path d="M843.3 148.0 L935.0 146.0"/><path d="M896.7 214.7 L955.0 197.5"/><path d="M946.7 269.7 L981.0 249.8"/><path d="M998.3 324.0 L1022.0 297.0"/><path d="M1054.0 373.3 L1068.0 340.0 L1073.0 328.0"/><path d="M1129.5 349.0 L1122.3 421.0"/><path d="M1182.3 354.0 C1187.2 364.8 1202.2 397.6 1211.7 419.0 C1221.2 440.4 1230.8 461.3 1239.0 482.7 C1247.2 504.1 1254.9 525.0 1260.7 547.3 C1266.5 569.6 1270.1 592.9 1274.0 616.7 C1277.9 640.5 1281.7 667.3 1284.0 690.0 C1286.3 712.7 1287.3 742.5 1288.0 753.0"/><path d="M1249.7 354.0 C1254.0 364.9 1267.2 397.8 1275.7 419.3 C1284.2 440.9 1293.2 461.6 1300.7 483.3 C1308.2 505.0 1314.9 527.1 1320.7 549.3 C1326.5 571.5 1331.7 593.2 1335.7 616.7 C1339.8 640.2 1342.8 667.3 1345.0 690.0 C1347.2 712.7 1348.3 742.5 1349.0 753.0"/><path d="M1316.3 354.0 C1320.2 365.0 1332.0 398.3 1339.7 420.0 C1347.4 441.7 1355.2 462.6 1362.3 484.3 C1369.4 506.0 1376.5 527.9 1382.3 550.0 C1388.1 572.1 1393.3 593.4 1397.3 616.7 C1401.2 640.0 1403.9 667.3 1406.0 690.0 C1408.1 712.7 1409.3 742.5 1410.0 753.0"/><path d="M1382.3 354.0 C1385.9 365.1 1397.0 398.8 1404.0 420.7 C1411.0 442.6 1417.5 463.5 1424.0 485.3 C1430.5 507.1 1437.7 529.4 1443.0 551.3 C1448.3 573.2 1452.2 593.6 1455.7 616.7 C1459.2 639.8 1462.0 667.3 1464.0 690.0 C1466.0 712.7 1467.3 742.5 1468.0 753.0"/><path d="M1449.7 354.0 C1452.8 365.2 1462.8 401.7 1468.0 421.0 C1473.2 440.3 1475.7 450.2 1481.0 470.0 C1486.3 489.8 1496.8 528.3 1500.0 540.0"/><path d="M1122.3 421.0 C1137.2 420.7 1186.1 419.3 1211.7 419.0 C1237.3 418.7 1254.4 419.1 1275.7 419.3 C1297.0 419.5 1318.3 419.8 1339.7 420.0 C1361.1 420.2 1382.6 420.5 1404.0 420.7 C1425.4 420.9 1453.7 420.9 1468.0 421.0 C1482.3 421.1 1486.3 421.2 1490.0 421.3"/><path d="M1155.7 495.0 C1169.6 492.9 1214.8 484.6 1239.0 482.7 C1263.2 480.8 1280.2 483.0 1300.7 483.3 C1321.2 483.6 1341.8 484.0 1362.3 484.3 C1382.8 484.6 1402.7 484.9 1424.0 485.3 C1445.3 485.8 1479.0 486.7 1490.0 487.0"/><path d="M1180.7 561.7 C1194.0 559.3 1237.4 549.4 1260.7 547.3 C1284.0 545.2 1300.4 548.8 1320.7 549.3 C1341.0 549.8 1361.9 549.7 1382.3 550.0 C1402.7 550.3 1425.0 550.8 1443.0 551.3 C1461.0 551.8 1482.2 552.7 1490.0 553.0"/><path d="M1193.0 616.7 C1206.5 616.7 1250.2 616.7 1274.0 616.7 C1297.8 616.8 1315.2 616.9 1335.7 617.0 C1356.2 617.1 1377.3 617.3 1397.3 617.5 C1417.3 617.7 1440.2 617.8 1455.7 618.0 C1471.2 618.2 1484.3 618.4 1490.0 618.5"/><path d="M1203.0 685.0 C1216.5 685.5 1260.3 687.3 1284.0 688.0 C1307.7 688.7 1324.7 688.7 1345.0 689.0 C1365.3 689.3 1386.2 689.7 1406.0 690.0 C1425.8 690.3 1450.0 690.8 1464.0 691.0 C1478.0 691.2 1485.7 691.0 1490.0 691.0"/><path d="M704.5 753.0 L704.4 747.0 L704.1 741.0 L703.6 735.0 L702.9 729.0 L701.9 723.1 L700.8 717.2 L699.5 711.3 L698.0 705.5 L696.3 699.8 L694.3 694.1 L692.2 688.4 L689.9 682.9 L687.4 677.4 L684.8 672.0 L681.9 666.7 L678.9 661.6 L675.7 656.5 L672.3 651.5 L668.7 646.7 L665.0 641.9 L661.2 637.3 L657.1 632.9 L653.0 628.5 L648.6 624.4 L644.2 620.3 L639.6 616.5 L634.8 612.8 L630.0 609.2 L625.0 605.8 L619.9 602.6 L614.8 599.6 L609.5 596.7 L604.1 594.1 L598.6 591.6 L593.1 589.3 L587.4 587.2 L581.7 585.2 L576.0 583.5 L570.2 582.0 L564.3 580.7 L558.4 579.6 L552.5 578.6 L546.5 577.9 L540.5 577.4 L534.5 577.1 L528.5 577.0"/><path d="M686.5 753.0 L686.4 747.6 L686.1 742.2 L685.7 736.8 L685.0 731.5 L684.2 726.2 L683.2 720.9 L682.0 715.6 L680.6 710.4 L679.1 705.2 L677.4 700.1 L675.5 695.0 L673.4 690.1 L671.2 685.1 L668.8 680.3 L666.2 675.6 L663.5 670.9 L660.6 666.3 L657.6 661.9 L654.4 657.5 L651.1 653.3 L647.6 649.2 L644.0 645.2 L640.2 641.3 L636.3 637.5 L632.3 633.9 L628.2 630.4 L624.0 627.1 L619.6 623.9 L615.2 620.9 L610.6 618.0 L605.9 615.3 L601.2 612.7 L596.4 610.3 L591.4 608.1 L586.5 606.0 L581.4 604.1 L576.3 602.4 L571.1 600.9 L565.9 599.5 L560.6 598.3 L555.3 597.3 L550.0 596.5 L544.7 595.8 L539.3 595.4 L533.9 595.1 L528.5 595.0"/><path d="M623.5 578.1 L617.6 575.1 L611.7 572.2 L605.6 569.5 L599.5 567.1 L593.3 564.8 L587.0 562.8 L580.7 561.0 L574.3 559.3 L567.8 557.9 L561.3 556.7 L554.8 555.7 L548.3 555.0 L541.7 554.4 L535.1 554.1 L528.5 554.0"/><path d="M727.5 753.0 L727.4 746.3 L727.1 739.7 L726.5 733.1 L725.7 726.5 L724.7 719.9 L723.5 713.3 L722.1 706.8 L720.4 700.4 L718.5 694.0 L716.5 687.7 L714.2 681.4 L711.7 675.2 L709.0 669.2 L706.1 663.2 L703.0 657.3 L699.7 651.5 L696.2 645.8 L692.5 640.3"/><path d="M692.5 640.3 L679.6 641.2 L679.6 641.2 L675.8 636.2 L671.8 631.3 L667.7 626.6 L663.4 622.0 L658.9 617.6 L654.3 613.3 L649.6 609.2 L644.7 605.2 L639.7 601.4 L634.5 597.8 L629.3 594.3 L623.9 591.0 L623.5 578.1"/><path d="M545.3 603.9 L551.8 545.9"/><path d="M561.9 606.8 L574.9 549.8"/><path d="M578.0 611.4 L597.3 556.3"/><path d="M593.6 617.9 L618.9 565.2"/><path d="M608.3 626.0 L639.4 576.5"/><path d="M622.0 635.7 L658.4 590.1"/><path d="M634.6 646.9 L675.9 605.6"/><path d="M645.8 659.5 L691.4 623.1"/><path d="M655.5 673.2 L705.0 642.1"/><path d="M663.6 687.9 L716.3 662.6"/><path d="M670.1 703.5 L725.2 684.2"/><path d="M674.7 719.6 L731.7 706.6"/><path d="M677.6 736.2 L735.6 729.7"/></g>
<g clip-path="url(#faceclip)" fill="none" stroke="#0a420a" stroke-width="0.75"><path d="M734.9 724.0 L733.8 717.0 L732.4 710.0 L730.8 703.1 L729.0 696.3 L727.0 689.5 L724.7 682.8 L722.2 676.2 L719.5 669.6 L716.6 663.2 L713.4 656.9 L710.0 650.6 L706.4 644.5 L702.7 638.5 L698.7 632.7 L694.5 627.0 L690.1 621.4 L685.5 616.0 L680.8 610.7 L675.9 605.6 L670.8 600.7 L665.5 596.0 L660.1 591.4 L654.5 587.0 L648.8 582.8 L643.0 578.8 L637.0 575.1 L630.9 571.5 L624.6 568.1 L618.3 564.9 L611.9 562.0 L605.3 559.3 L598.7 556.8 L592.0 554.5 L585.2 552.5 L578.4 550.7 L571.5 549.1 L564.5 547.7 L557.5 546.6"/><path d="M736.7 723.7 L735.5 716.7 L734.2 709.7 L732.6 702.7 L730.8 695.8 L728.7 689.0 L726.4 682.2 L723.9 675.5 L721.2 668.9 L718.2 662.4 L715.0 656.0 L711.6 649.7 L708.0 643.6 L704.2 637.5 L700.1 631.6 L695.9 625.9 L691.5 620.3 L686.9 614.8 L682.1 609.5 L677.1 604.4 L672.0 599.4 L666.7 594.6 L661.2 590.0 L655.6 585.6 L649.9 581.4 L644.0 577.3 L637.9 573.5 L631.8 569.9 L625.5 566.5 L619.1 563.3 L612.6 560.3 L606.0 557.6 L599.3 555.1 L592.5 552.8 L585.7 550.7 L578.8 548.9 L571.8 547.3 L564.8 546.0 L557.8 544.8"/><path d="M738.4 723.5 L737.3 716.4 L735.9 709.3 L734.3 702.3 L732.5 695.3 L730.4 688.4 L728.1 681.6 L725.6 674.8 L722.8 668.2 L719.8 661.6 L716.6 655.2 L713.2 648.9 L709.5 642.6 L705.7 636.6 L701.6 630.6 L697.3 624.8 L692.9 619.1 L688.2 613.6 L683.4 608.3 L678.4 603.1 L673.2 598.1 L667.9 593.3 L662.4 588.6 L656.7 584.2 L650.9 579.9 L644.9 575.8 L638.9 572.0 L632.6 568.3 L626.3 564.9 L619.9 561.7 L613.3 558.7 L606.7 555.9 L599.9 553.4 L593.1 551.1 L586.2 549.0 L579.2 547.2 L572.2 545.6 L565.1 544.2 L558.0 543.1"/><path d="M740.2 723.2 L739.1 716.1 L737.7 708.9 L736.1 701.8 L734.2 694.8 L732.1 687.9 L729.8 681.0 L727.2 674.2 L724.4 667.5 L721.4 660.9 L718.2 654.4 L714.7 648.0 L711.1 641.7 L707.2 635.6 L703.1 629.6 L698.8 623.7 L694.3 618.0 L689.6 612.4 L684.7 607.0 L679.7 601.8 L674.5 596.8 L669.1 591.9 L663.5 587.2 L657.8 582.7 L651.9 578.4 L645.9 574.3 L639.8 570.4 L633.5 566.8 L627.1 563.3 L620.6 560.1 L614.0 557.1 L607.3 554.3 L600.5 551.7 L593.6 549.4 L586.7 547.3 L579.7 545.4 L572.6 543.8 L565.4 542.4 L558.3 541.3"/><path d="M742.0 723.0 L740.9 715.8 L739.5 708.6 L737.8 701.4 L736.0 694.3 L733.9 687.3 L731.5 680.4 L728.9 673.5 L726.1 666.8 L723.1 660.1 L719.8 653.5 L716.3 647.1 L712.6 640.8 L708.7 634.6 L704.5 628.5 L700.2 622.6 L695.7 616.9 L691.0 611.3 L686.0 605.8 L681.0 600.5 L675.7 595.5 L670.2 590.5 L664.6 585.8 L658.9 581.3 L653.0 577.0 L646.9 572.8 L640.7 568.9 L634.4 565.2 L628.0 561.7 L621.4 558.4 L614.7 555.4 L608.0 552.6 L601.1 550.0 L594.2 547.6 L587.2 545.5 L580.1 543.7 L572.9 542.0 L565.7 540.6 L558.5 539.5"/></g>
<path d="M931.5 100 L931.5 105.5 A249.5 249.5 0 0 0 1181 355.3 L1490 355.3 L1490 100 Z" fill="url(#navy)"/>
<path d="M528.7 109.0 C528.7 147.5 528.4 294.8 528.7 340.0 C529.0 385.2 529.8 368.8 530.5 380.0 C531.2 391.2 530.9 394.2 533.0 407.0 C535.1 419.8 539.4 442.0 543.0 457.0 C546.6 472.0 550.0 484.3 554.7 497.0 C559.4 509.7 567.3 524.7 571.3 533.0 C575.3 541.3 574.5 540.3 578.7 547.0 C582.9 553.7 589.2 563.2 596.3 573.0 C603.4 582.8 614.3 597.3 621.3 606.0 C628.2 614.7 632.4 618.7 638.0 625.0 C643.6 631.3 646.4 636.2 654.7 644.0 C663.0 651.8 680.5 665.7 688.0 672.0 C695.5 678.3 692.2 676.7 700.0 682.0 C707.8 687.3 720.0 696.3 735.0 704.0 C750.0 711.7 773.7 722.0 790.0 728.0 C806.3 734.0 818.5 736.5 833.0 740.0 C847.5 743.5 862.5 746.6 877.0 748.7 C891.5 750.8 907.7 751.9 920.0 752.7 C932.3 753.5 904.3 753.5 951.0 753.7 C997.7 753.9 1111.7 753.7 1200.0 753.7 C1288.3 753.7 1434.2 753.7 1481.0 753.7" fill="none" stroke="#043004" stroke-width="1.2"/>
<path d="M528.3 752.5 L1128.3 153" stroke="#f01800" stroke-width="1" stroke-opacity="0.74" fill="none"/>
<rect x="1125.3" y="150" width="6" height="6" fill="#ee1111"/>
<rect x="525.8" y="750" width="5" height="5" fill="#ee1111"/>
<rect x="574" y="542" width="9" height="9" fill="#ffee00"/>
<rect x="673.5" y="597.5" width="9.5" height="9.5" fill="#0a14f0"/>
<rect x="730" y="699" width="9" height="9" fill="#ffb000"/>
<circle cx="383.5" cy="790" r="5.2" fill="#d01818"/>
<path d="M383 790 L383 752" stroke="#1fb01f" stroke-width="3.2"/><path d="M384 744 L379.2 757 L388.8 757 Z" fill="#1fb01f"/>
<path d="M385 790 L418 790" stroke="#0a14d0" stroke-width="3.6"/><path d="M428 790 L414.5 784 L414.5 796 Z" fill="#0a14d0"/>
<text x="379.5" y="737" font-family="Liberation Sans,sans-serif" font-size="9.5" fill="#8fe88f">Y</text>
<text x="435.5" y="792.5" font-family="Liberation Sans,sans-serif" font-size="9.5" fill="#8fe88f">Z</text>
<path d="M1421.5 124.5 L1421.5 170" stroke="#e8e8f4" stroke-width="1.6" fill="none"/>
<path d="M1421.5 130 A21.5 21.5 0 0 1 1443 151.5 L1421.5 151.5 Z" fill="#0c0c80" stroke="#e8e8f4" stroke-width="1.4"/>
<path d="M1410 170 L1438.5 170" stroke="#e8e8f4" stroke-width="1.6"/>
<circle cx="1421.5" cy="124.3" r="2.1" fill="#cfcff0"/>
<circle cx="1421.5" cy="169.8" r="2.6" fill="#e01010"/>
<text x="1418.8" y="119.5" font-family="Liberation Sans,sans-serif" font-weight="bold" font-size="6.5" fill="#d8d820">Y</text>
<text x="1445.5" y="153.5" font-family="Liberation Sans,sans-serif" font-weight="bold" font-size="6.5" fill="#d8d820">Z</text>
<text x="1418.5" y="153.5" font-family="Liberation Sans,sans-serif" font-weight="bold" font-size="5.5" fill="#d8d820">Y</text>
</g></svg>
<div class="callout" style="left:192px;top:122.3px;width:531.5px;height:168.39999999999998px;"><div style="top:8.2px">The “crack front viewer” in the CAE</div><div style="top:38.2px">plugin can be used to display any key</div><div style="top:68.2px">lines and points.</div><div style="top:98.2px">Here it is used to confirm the location</div><div style="top:128.2px">of three post-processing positions.</div></div>
<div class="callout" style="left:949.8px;top:616.5px;width:519.2px;height:227.5px;"><div style="top:8.0px">Results at the <span style="text-decoration:underline double #5b7fd0 1px;text-underline-offset:2px">45 degree</span> plane are</div><div style="top:38.0px">extracted using the “plane” option in</div><div style="top:68.0px">the “process” post-processor.</div><div style="top:98.0px">This interpolates results to the</div><div style="top:128.0px">intersection point with the crack front.</div><div style="top:158.0px">The end point data is extracted for</div><div style="top:188.0px">the two end nodes on the crack.</div></div>
<svg style="left:0;top:0" width="1483" height="857"><path d="M192.5 282.3 L132.5 307.5 M142 295.5 L132.5 307.5 L147.6 309.8" fill="none" stroke="#1b6196" stroke-width="1.8" stroke-linecap="square"/></svg>
<div class="abs" style="left:41.5px;top:451.7px;width:281.5px;height:381.3px;background:#f0f0f0;border:1.3px solid #7b7f86;border-radius:5px 5px 1px 1px;box-sizing:border-box;box-shadow:1px 1px 2px rgba(0,0,0,0.25);overflow:hidden;"><div style="height:19px;background:linear-gradient(#d3deec,#e3eaf4 60%,#eaf0f8);"></div></div>
<svg style="left:45.5px;top:455.5px" width="12" height="13" viewBox="0 0 13 14"><path d="M1.2 5.6 Q1.5 0.8 6.5 0.8 Q11.5 0.8 11.8 5.6 Z" fill="#5a5fa6"/><path d="M1.2 8.6 Q1.5 13.4 6.5 13.4 Q11.5 13.4 11.8 8.6 Z" fill="#5a5fa6"/><rect x="0.3" y="6.3" width="12.4" height="1.6" fill="#7c82bd"/></svg>
<span class="t" style="left:61.5px;top:455.5px;height:15px;line-height:15px;font-size:11px;color:#6a6a6a;transform:scaleX(0.8532);">Crack front viewer: [1]:plane45 line</span>
<div class="abs" style="left:295.7px;top:456px;width:23.7px;height:12.5px;border:1px solid #8d9db3;border-radius:2px;box-sizing:border-box;background:linear-gradient(#e6edf6,#cfdbea);"></div>
<svg style="left:295.7px;top:456px" width="24" height="13"><path d="M8.5 3.5 L15 9.5 M15 3.5 L8.5 9.5" stroke="#555" stroke-width="2.6"/><path d="M8.5 3.5 L15 9.5 M15 3.5 L8.5 9.5" stroke="#fff" stroke-width="1"/></svg>
<div class="abs" style="left:50.5px;top:485px;width:90.0px;height:109px;border:1px solid #dcdcdc;border-radius:3px;box-sizing:border-box;box-shadow:1px 1px 0 #fff;"></div><div class="abs" style="left:57.8px;top:480px;width:55.10000000000001px;height:11px;background:#f0f0f0;"></div><span class="t" style="left:59.8px;top:478.5px;height:15px;line-height:15px;font-size:11px;color:#111;transform:scaleX(0.8890);">Plot options</span>
<div class="abs" style="left:144.5px;top:485px;width:60.5px;height:109px;border:1px solid #dcdcdc;border-radius:3px;box-sizing:border-box;box-shadow:1px 1px 0 #fff;"></div><div class="abs" style="left:152px;top:480px;width:35.400000000000006px;height:11px;background:#f0f0f0;"></div><span class="t" style="left:154.0px;top:478.5px;height:15px;line-height:15px;font-size:11px;color:#111;transform:scaleX(0.8705);">Actions</span>
<svg style="left:54.5px;top:497.7px" width="13" height="13"><circle cx="6.5" cy="6.5" r="5.3" fill="#f3f3f3" stroke="#a2a2a2" stroke-width="1"/><circle cx="6.5" cy="6.5" r="3.8" fill="none" stroke="#dcdcdc" stroke-width="1"/></svg>
<span class="t" style="left:70.3px;top:496.7px;height:15px;line-height:15px;font-size:11px;color:#111;transform:scaleX(0.8744);">Line only</span>
<svg style="left:54.5px;top:516.2px" width="13" height="13"><circle cx="6.5" cy="6.5" r="5.3" fill="#f3f3f3" stroke="#a2a2a2" stroke-width="1"/><circle cx="6.5" cy="6.5" r="3.8" fill="none" stroke="#dcdcdc" stroke-width="1"/></svg>
<span class="t" style="left:70.3px;top:515.2px;height:15px;line-height:15px;font-size:11px;color:#111;transform:scaleX(0.8679);">Points only</span>
<svg style="left:54.5px;top:534.5px" width="13" height="13"><circle cx="6.5" cy="6.5" r="5.3" fill="#f3f3f3" stroke="#a2a2a2" stroke-width="1"/><circle cx="6.5" cy="6.5" r="3.8" fill="none" stroke="#dcdcdc" stroke-width="1"/><circle cx="6.5" cy="6.5" r="2.6" fill="#1f3f7a"/><circle cx="5.8" cy="5.8" r="1" fill="#7fb0e0"/></svg>
<span class="t" style="left:70.3px;top:533.5px;height:15px;line-height:15px;font-size:11px;color:#111;transform:scaleX(0.8591);">Line and points</span>
<span class="t" style="left:56.9px;top:551.5px;height:15px;line-height:15px;font-size:11px;color:#111;transform:scaleX(0.8489);">Colour:</span>
<div class="abs" style="left:92px;top:553px;width:17.2px;height:10.7px;background:#ee1111;border:1.2px solid #e9b0b0;border-radius:1.5px;box-sizing:border-box;box-shadow:0 0 0 0.6px #c44;"></div>
<span class="t" style="left:56.9px;top:571.9px;height:15px;line-height:15px;font-size:11px;color:#111;transform:scaleX(0.8158);">Point size:</span>
<div class="abs" style="left:102px;top:570px;width:24.6px;height:19.5px;background:#fff;border:1px solid #b9b9b9;border-top-color:#8f8f8f;box-sizing:border-box;"></div>
<div class="abs" style="left:116.5px;top:571.5px;width:9px;height:16.5px;background:linear-gradient(#fafafa,#dcdcdc);border:1px solid #8e8e8e;box-sizing:border-box;"></div>
<svg style="left:116.5px;top:577.5px" width="9" height="5"><path d="M1.5 0.5 L7.5 0.5 L4.5 4 Z" fill="#000"/></svg>
<span class="t" style="left:106.3px;top:572.1px;height:15px;line-height:15px;font-size:11px;color:#111;">2</span>
<div class="abs" style="left:149.7px;top:497.5px;width:48.30000000000001px;height:16.200000000000045px;border:1px solid #8a8a8a;border-radius:3px;box-sizing:border-box;background:linear-gradient(#f6f6f6,#ebebeb 50%,#dedede);box-shadow:inset 0 0 0 1px #fcfcfc;"></div><span class="t" style="left:152.6px;top:498.1px;height:15px;line-height:15px;font-size:11px;color:#111;transform:scaleX(0.8176);">Show data</span>
<div class="abs" style="left:149.7px;top:519px;width:50.0px;height:16px;border:1px solid #8a8a8a;border-radius:3px;box-sizing:border-box;background:linear-gradient(#f6f6f6,#ebebeb 50%,#dedede);box-shadow:inset 0 0 0 1px #fcfcfc;"></div><span class="t" style="left:153.4px;top:519.5px;height:15px;line-height:15px;font-size:11px;color:#111;transform:scaleX(0.8476);">Hide  data</span>
<div class="abs" style="left:149.7px;top:540.6px;width:49.0px;height:15.699999999999932px;border:1px solid #8a8a8a;border-radius:3px;box-sizing:border-box;background:linear-gradient(#f6f6f6,#ebebeb 50%,#dedede);box-shadow:inset 0 0 0 1px #fcfcfc;"></div><span class="t" style="left:152.2px;top:541.0px;height:15px;line-height:15px;font-size:11px;color:#111;transform:scaleX(0.8272);">Clear table</span>
<div class="abs" style="left:49.8px;top:605px;width:251.39999999999998px;height:175.5px;background:#fff;"></div>
<div class="abs" style="left:49.8px;top:605px;width:251.39999999999998px;height:14.6px;background:linear-gradient(#fbfbfb,#f0f0f0);border-bottom:1px solid #d4d4d4;box-sizing:border-box;"></div>
<div class="abs" style="left:49.8px;top:605px;width:21.7px;height:175.5px;background:#f1f1f1;border-right:1px solid #dadada;box-sizing:border-box;"></div>
<div class="abs" style="left:147.6px;top:605px;width:1px;height:175.5px;background:#e4e4e4;"></div>
<div class="abs" style="left:224.3px;top:605px;width:1px;height:175.5px;background:#e4e4e4;"></div>
<div class="abs" style="left:49.8px;top:635.6px;width:251.39999999999998px;height:1px;background:#e9e9e9;"></div>
<div class="abs" style="left:49.8px;top:651.6px;width:251.39999999999998px;height:1px;background:#e9e9e9;"></div>
<div class="abs" style="left:49.8px;top:667.6px;width:251.39999999999998px;height:1px;background:#e9e9e9;"></div>
<div class="abs" style="left:49.8px;top:683.6px;width:251.39999999999998px;height:1px;background:#e9e9e9;"></div>
<div class="abs" style="left:49.8px;top:699.6px;width:251.39999999999998px;height:1px;background:#e9e9e9;"></div>
<div class="abs" style="left:49.8px;top:715.6px;width:251.39999999999998px;height:1px;background:#e9e9e9;"></div>
<div class="abs" style="left:49.8px;top:731.6px;width:251.39999999999998px;height:1px;background:#e9e9e9;"></div>
<div class="abs" style="left:49.8px;top:747.6px;width:251.39999999999998px;height:1px;background:#e9e9e9;"></div>
<div class="abs" style="left:49.8px;top:763.6px;width:251.39999999999998px;height:1px;background:#e9e9e9;"></div>
<div class="abs" style="left:49.8px;top:779.6px;width:251.39999999999998px;height:1px;background:#e9e9e9;"></div>
<span class="t" style="left:107.2px;top:605.4px;height:14.5px;line-height:14.5px;font-size:10.5px;color:#222;">X</span>
<span class="t" style="left:183.3px;top:605.4px;height:14.5px;line-height:14.5px;font-size:10.5px;color:#222;">Y</span>
<span class="t" style="left:259.5px;top:605.4px;height:14.5px;line-height:14.5px;font-size:10.5px;color:#222;">Z</span>
<span class="t" style="left:57.2px;top:621.6px;height:15px;line-height:15px;font-size:11px;color:#111;transform:scaleX(0.8501);">1</span>
<span class="t" style="left:57.2px;top:637.5px;height:15px;line-height:15px;font-size:11px;color:#111;transform:scaleX(0.8501);">2</span>
<span class="t" style="left:57.2px;top:653.4px;height:15px;line-height:15px;font-size:11px;color:#111;transform:scaleX(0.8501);">3</span>
<span class="t" style="left:57.2px;top:669.2px;height:15px;line-height:15px;font-size:11px;color:#111;transform:scaleX(0.8501);">4</span>
<span class="t" style="left:57.2px;top:685.1px;height:15px;line-height:15px;font-size:11px;color:#111;transform:scaleX(0.8501);">5</span>
<span class="t" style="left:57.2px;top:701.0px;height:15px;line-height:15px;font-size:11px;color:#111;transform:scaleX(0.8501);">6</span>
<span class="t" style="left:57.2px;top:716.9px;height:15px;line-height:15px;font-size:11px;color:#111;transform:scaleX(0.8501);">7</span>
<span class="t" style="left:57.2px;top:732.8px;height:15px;line-height:15px;font-size:11px;color:#111;transform:scaleX(0.8501);">8</span>
<span class="t" style="left:57.2px;top:748.6px;height:15px;line-height:15px;font-size:11px;color:#111;transform:scaleX(0.8501);">9</span>
<span class="t" style="left:57.2px;top:764.5px;height:15px;line-height:15px;font-size:11px;color:#111;transform:scaleX(0.8501);">10</span>
<span class="t" style="left:107.2px;top:621.6px;height:15px;line-height:15px;font-size:11px;color:#111;transform:scaleX(0.8991);">0</span>
<span class="t" style="left:107.2px;top:637.5px;height:15px;line-height:15px;font-size:11px;color:#111;transform:scaleX(0.8991);">0</span>
<span class="t" style="left:171.0px;top:621.6px;height:15px;line-height:15px;font-size:11px;color:#111;transform:scaleX(0.7923);">301.625</span>
<span class="t" style="left:171.0px;top:637.5px;height:15px;line-height:15px;font-size:11px;color:#111;transform:scaleX(0.7923);">421.625</span>
<span class="t" style="left:252.0px;top:621.6px;height:15px;line-height:15px;font-size:11px;color:#111;transform:scaleX(0.7811);">101.6</span>
<span class="t" style="left:252.0px;top:637.5px;height:15px;line-height:15px;font-size:11px;color:#111;transform:scaleX(0.7811);">221.6</span>
<svg style="left:305px;top:609.5px" width="8" height="5"><path d="M0.8 4.2 L7.2 4.2 L4 0.6 Z" fill="#444"/></svg>
<svg style="left:305px;top:771px" width="8" height="5"><path d="M0.8 0.6 L7.2 0.6 L4 4.2 Z" fill="#444"/></svg>
<div class="abs" style="left:303px;top:620.5px;width:10.5px;height:12px;border:1px solid #9a9a9a;border-radius:2px;box-sizing:border-box;background:linear-gradient(90deg,#f5f5f5,#dcdcdc);"></div>
<div class="abs" style="left:306px;top:624px;width:4.5px;height:1px;background:#6a6a6a;"></div>
<div class="abs" style="left:306px;top:626px;width:4.5px;height:1px;background:#6a6a6a;"></div>
<div class="abs" style="left:306px;top:628px;width:4.5px;height:1px;background:#6a6a6a;"></div>
<div class="abs" style="left:49px;top:789.8px;width:9.6px;height:9.6px;background:#f6f6f6;border:1px solid #8f8f8f;box-sizing:border-box;box-shadow:inset 0 0 0 1px #e3e3e3;"></div>
<span class="t" style="left:62.0px;top:787.0px;height:15px;line-height:15px;font-size:11px;color:#111;transform:scaleX(0.8608);">Remove displayed line / points on OK/Cancel</span>
<div class="abs" style="left:48px;top:805px;width:270px;height:1px;background:#cfcfcf;"></div>
<div class="abs" style="left:48px;top:806px;width:270px;height:1px;background:#fdfdfd;"></div>
<div class="abs" style="left:69.4px;top:810.8px;width:42.8px;height:16.0px;border:1px solid #8a8a8a;border-radius:3px;box-sizing:border-box;background:linear-gradient(#f6f6f6,#ebebeb 50%,#dedede);box-shadow:inset 0 0 0 1px #fcfcfc;"></div><span class="t" style="left:84.1px;top:811.3px;height:15px;line-height:15px;font-size:11px;color:#111;transform:scaleX(0.8494);">OK</span>
<div class="abs" style="left:161.2px;top:810.8px;width:42.60000000000002px;height:16.0px;border:1px solid #8a8a8a;border-radius:3px;box-sizing:border-box;background:linear-gradient(#f6f6f6,#ebebeb 50%,#dedede);box-shadow:inset 0 0 0 1px #fcfcfc;"></div><span class="t" style="left:168.2px;top:811.3px;height:15px;line-height:15px;font-size:11px;color:#111;transform:scaleX(0.8324);">Cancel</span>
<div class="abs" style="left:252.2px;top:810.8px;width:43.19999999999999px;height:16.0px;border:1px solid #8a8a8a;border-radius:3px;box-sizing:border-box;background:linear-gradient(#f6f6f6,#ebebeb 50%,#dedede);box-shadow:inset 0 0 0 1px #fcfcfc;"></div><span class="t" style="left:264.3px;top:811.3px;height:15px;line-height:15px;font-size:11px;color:#111;transform:scaleX(0.8399);"><u>H</u>elp</span>
</div>
</body></html>
